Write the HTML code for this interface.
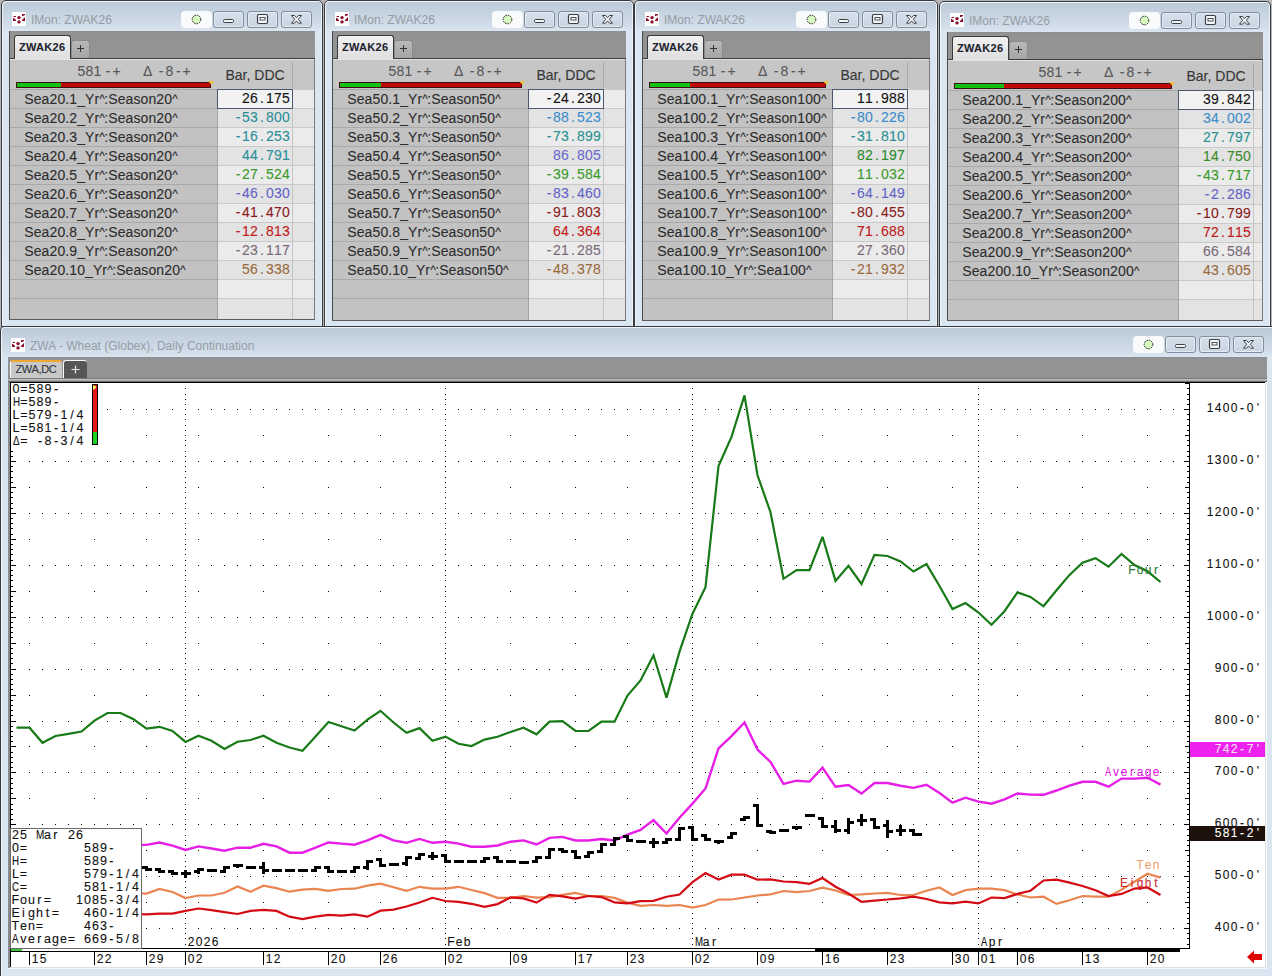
<!DOCTYPE html><html><head><meta charset="utf-8"><style>
html,body{margin:0;padding:0;width:1272px;height:976px;overflow:hidden;background:#b6b5b7;font-family:"Liberation Sans",sans-serif;}
.t{position:absolute;white-space:pre;-webkit-text-stroke:0.1px currentColor;}
.c{position:absolute;white-space:pre;-webkit-text-stroke:0.1px currentColor;}
.c b{display:inline-block;text-align:center;font-weight:inherit;}
.win{position:absolute;box-sizing:border-box;border:1px solid #383c42;border-radius:5px 5px 0 0;background:linear-gradient(to bottom,#e6edf4 0px,#e6edf4 1px,#bccad8 1px,#c6d3e0 12px,#d3dfeb 26px,#dbe6f1 30px,#d9e5f1 60px,#dae6f2 100%);box-shadow:inset 1px 1px 0 #f0f5fa,inset -1px 0 0 #eef3f8;}
.btn{position:absolute;box-sizing:border-box;width:31px;height:17px;border:1px solid #7f8d9c;border-radius:3px;background:linear-gradient(to bottom,#d6e0ea,#c9d5e2);box-shadow:inset 0 0 0 1px #e4ebf2;}
.sbtn{position:absolute;box-sizing:border-box;width:31px;height:17px;border-radius:4px;background:#f9fafb;}
</style></head><body>
<div class="win" style="left:1px;top:0px;width:322px;height:327px"></div>
<svg style="position:absolute;left:12px;top:12px" width="14" height="14" viewBox="0 0 14 14"><rect x="0" y="0" width="14" height="14" fill="#fff"/><g fill="#8c1030"><path d="M1 4 H4 V5 H2 Z"/><path d="M1 6 L2 6 L4 8 L4 9 L1 9 Z"/><circle cx="7" cy="5.6" r="1.7"/><circle cx="7" cy="9.9" r="1.7"/><path d="M10 2 H13 V3 L11 4 H10 Z"/><path d="M13 5 V9 H10 V8 Z"/></g></svg>
<div class="t" style="left:31.00px;top:13.84px;font-size:12px;line-height:12px;color:#949ca5;font-weight:400;letter-spacing:0px;-webkit-text-stroke:0;">IMon: ZWAK26</div>
<div class="sbtn" style="left:181px;top:11px"></div>
<svg style="position:absolute;left:191px;top:14px" width="11" height="11"><circle cx="5.5" cy="5.5" r="4.3" fill="#d8f8c0" stroke="#222" stroke-width="1" stroke-dasharray="1.6 0.9"/></svg>
<div class="btn" style="left:213px;top:11px"></div>
<svg style="position:absolute;left:213px;top:11px" width="31" height="17"><rect x="10.5" y="8.5" width="10" height="3" rx="1.2" fill="#f4f6f8" stroke="#384048" stroke-width="1"/></svg>
<div class="btn" style="left:247px;top:11px"></div>
<svg style="position:absolute;left:247px;top:11px" width="31" height="17"><rect x="10.5" y="3.5" width="10" height="9" rx="1.2" fill="#f4f6f8" stroke="#384048" stroke-width="1.2"/><rect x="13" y="6.5" width="5" height="2.5" fill="#fff" stroke="#384048" stroke-width="0.9"/></svg>
<div class="btn" style="left:281px;top:11px"></div>
<svg style="position:absolute;left:281px;top:11px" width="31" height="17"><path d="M10.5 4.5 L13.5 4.5 L15.5 6.8 L17.5 4.5 L20.5 4.5 L17.3 8.3 L20.5 12.2 L17.5 12.2 L15.5 9.9 L13.5 12.2 L10.5 12.2 L13.7 8.3 Z" fill="#f6f8fa" stroke="#384048" stroke-width="1" stroke-linejoin="round"/></svg>
<div style="position:absolute;left:9px;top:31px;width:306px;height:289px;background:#c2c2c2;"></div>
<div style="position:absolute;left:9px;top:31px;width:306px;height:27px;background:linear-gradient(to bottom,#8a8d90 0px,#939393 2px,#939393 100%);"></div>
<div style="position:absolute;left:9px;top:58px;width:306px;height:1px;background:#3c3c3c;"></div>
<div style="position:absolute;left:9px;top:59px;width:306px;height:1px;background:#e2e2e2;"></div>
<div style="position:absolute;left:14px;top:35px;width:57px;height:24px;box-sizing:border-box;border:1px solid #3a3a3a;border-bottom:none;border-radius:3px 3px 0 0;background:linear-gradient(to bottom,#f2f2f2,#dedede);"></div>
<div style="position:absolute;left:15px;top:58px;width:55px;height:1px;background:#e4e4e4;"></div>
<div class="t" style="left:19.00px;top:41.69px;font-size:11px;line-height:11px;color:#1e2530;font-weight:700;letter-spacing:0.3px;">ZWAK26</div>
<div style="position:absolute;left:71px;top:40px;width:19px;height:18px;box-sizing:border-box;border-radius:3px 3px 0 0;border:1px solid #8a8a8a;border-bottom:none;background:linear-gradient(to bottom,#b8b8b8,#a6a6a6);"></div>
<svg style="position:absolute;left:76px;top:44px" width="9" height="9"><path d="M4.5 1 V8 M1 4.5 H8" stroke="#333" stroke-width="1"/></svg>
<div style="position:absolute;left:9px;top:31px;width:1px;height:289px;background:#4a4a4a;"></div>
<div style="position:absolute;left:10px;top:60px;width:305px;height:29px;background:#c6c6c6;"></div>
<div style="position:absolute;left:292px;top:62px;width:1px;height:25px;background:#a9a9a9;"></div>
<div class="t" style="left:225.50px;top:67.75px;font-size:14px;line-height:14px;color:#363636;font-weight:400;letter-spacing:0px;">Bar, DDC</div>
<div style="position:absolute;left:16px;top:82px;width:195px;height:6px;box-sizing:border-box;border:1px solid #3a1010;background:linear-gradient(to right,#12c012 0,#12c012 44px,#c00808 44px,#c00808 100%);"></div>
<svg style="position:absolute;left:207px;top:81px" width="8" height="6"><path d="M1 0 L7 0 L4.5 4 Z" fill="#f0c040"/></svg>
<div class="t" style="left:61.50px;width:40px;text-align:center;top:63.95px;font-size:14px;line-height:14px;color:#585858">5</div>
<div class="t" style="left:69.50px;width:40px;text-align:center;top:63.95px;font-size:14px;line-height:14px;color:#585858">8</div>
<div class="t" style="left:77.50px;width:40px;text-align:center;top:63.95px;font-size:14px;line-height:14px;color:#585858">1</div>
<div class="t" style="left:88.00px;width:40px;text-align:center;top:63.95px;font-size:14px;line-height:14px;color:#585858">-</div>
<div class="t" style="left:96.50px;width:40px;text-align:center;top:63.95px;font-size:14px;line-height:14px;color:#585858">+</div>
<div class="t" style="left:127.70px;width:40px;text-align:center;top:63.95px;font-size:14px;line-height:14px;color:#585858">Δ</div>
<div class="t" style="left:141.00px;width:40px;text-align:center;top:63.95px;font-size:14px;line-height:14px;color:#585858">-</div>
<div class="t" style="left:149.40px;width:40px;text-align:center;top:63.95px;font-size:14px;line-height:14px;color:#585858">8</div>
<div class="t" style="left:158.40px;width:40px;text-align:center;top:63.95px;font-size:14px;line-height:14px;color:#585858">-</div>
<div class="t" style="left:166.50px;width:40px;text-align:center;top:63.95px;font-size:14px;line-height:14px;color:#585858">+</div>
<div style="position:absolute;left:10px;top:89px;width:207px;height:1px;background:#a9a9a9;"></div>
<div style="position:absolute;left:218px;top:90px;width:96px;height:18px;background:#ebebeb;"></div>
<div style="position:absolute;left:217px;top:89px;width:97px;height:1px;background:#c9c9c9;"></div>
<div class="t" style="left:24.30px;top:91.85px;font-size:14px;line-height:14px;color:#2c2c2c;font-weight:400;letter-spacing:0.1px;">Sea20.1_Yr<span style="font-size:12px;letter-spacing:-0.6px;vertical-align:1.2px">^</span>:Season20<span style="font-size:12px;letter-spacing:-0.6px;vertical-align:1.2px">^</span></div>
<div style="position:absolute;left:10px;top:108px;width:207px;height:1px;background:#a9a9a9;"></div>
<div style="position:absolute;left:218px;top:109px;width:96px;height:18px;background:#e3e3e3;"></div>
<div style="position:absolute;left:217px;top:108px;width:97px;height:1px;background:#c9c9c9;"></div>
<div class="t" style="left:24.30px;top:110.85px;font-size:14px;line-height:14px;color:#2c2c2c;font-weight:400;letter-spacing:0.1px;">Sea20.2_Yr<span style="font-size:12px;letter-spacing:-0.6px;vertical-align:1.2px">^</span>:Season20<span style="font-size:12px;letter-spacing:-0.6px;vertical-align:1.2px">^</span></div>
<div style="position:absolute;left:10px;top:127px;width:207px;height:1px;background:#a9a9a9;"></div>
<div style="position:absolute;left:218px;top:128px;width:96px;height:18px;background:#ebebeb;"></div>
<div style="position:absolute;left:217px;top:127px;width:97px;height:1px;background:#c9c9c9;"></div>
<div class="t" style="left:24.30px;top:129.85px;font-size:14px;line-height:14px;color:#2c2c2c;font-weight:400;letter-spacing:0.1px;">Sea20.3_Yr<span style="font-size:12px;letter-spacing:-0.6px;vertical-align:1.2px">^</span>:Season20<span style="font-size:12px;letter-spacing:-0.6px;vertical-align:1.2px">^</span></div>
<div style="position:absolute;left:10px;top:146px;width:207px;height:1px;background:#a9a9a9;"></div>
<div style="position:absolute;left:218px;top:147px;width:96px;height:18px;background:#e3e3e3;"></div>
<div style="position:absolute;left:217px;top:146px;width:97px;height:1px;background:#c9c9c9;"></div>
<div class="t" style="left:24.30px;top:148.85px;font-size:14px;line-height:14px;color:#2c2c2c;font-weight:400;letter-spacing:0.1px;">Sea20.4_Yr<span style="font-size:12px;letter-spacing:-0.6px;vertical-align:1.2px">^</span>:Season20<span style="font-size:12px;letter-spacing:-0.6px;vertical-align:1.2px">^</span></div>
<div style="position:absolute;left:10px;top:165px;width:207px;height:1px;background:#a9a9a9;"></div>
<div style="position:absolute;left:218px;top:166px;width:96px;height:18px;background:#ebebeb;"></div>
<div style="position:absolute;left:217px;top:165px;width:97px;height:1px;background:#c9c9c9;"></div>
<div class="t" style="left:24.30px;top:167.85px;font-size:14px;line-height:14px;color:#2c2c2c;font-weight:400;letter-spacing:0.1px;">Sea20.5_Yr<span style="font-size:12px;letter-spacing:-0.6px;vertical-align:1.2px">^</span>:Season20<span style="font-size:12px;letter-spacing:-0.6px;vertical-align:1.2px">^</span></div>
<div style="position:absolute;left:10px;top:184px;width:207px;height:1px;background:#a9a9a9;"></div>
<div style="position:absolute;left:218px;top:185px;width:96px;height:18px;background:#e3e3e3;"></div>
<div style="position:absolute;left:217px;top:184px;width:97px;height:1px;background:#c9c9c9;"></div>
<div class="t" style="left:24.30px;top:186.85px;font-size:14px;line-height:14px;color:#2c2c2c;font-weight:400;letter-spacing:0.1px;">Sea20.6_Yr<span style="font-size:12px;letter-spacing:-0.6px;vertical-align:1.2px">^</span>:Season20<span style="font-size:12px;letter-spacing:-0.6px;vertical-align:1.2px">^</span></div>
<div style="position:absolute;left:10px;top:203px;width:207px;height:1px;background:#a9a9a9;"></div>
<div style="position:absolute;left:218px;top:204px;width:96px;height:18px;background:#ebebeb;"></div>
<div style="position:absolute;left:217px;top:203px;width:97px;height:1px;background:#c9c9c9;"></div>
<div class="t" style="left:24.30px;top:205.85px;font-size:14px;line-height:14px;color:#2c2c2c;font-weight:400;letter-spacing:0.1px;">Sea20.7_Yr<span style="font-size:12px;letter-spacing:-0.6px;vertical-align:1.2px">^</span>:Season20<span style="font-size:12px;letter-spacing:-0.6px;vertical-align:1.2px">^</span></div>
<div style="position:absolute;left:10px;top:222px;width:207px;height:1px;background:#a9a9a9;"></div>
<div style="position:absolute;left:218px;top:223px;width:96px;height:18px;background:#e3e3e3;"></div>
<div style="position:absolute;left:217px;top:222px;width:97px;height:1px;background:#c9c9c9;"></div>
<div class="t" style="left:24.30px;top:224.85px;font-size:14px;line-height:14px;color:#2c2c2c;font-weight:400;letter-spacing:0.1px;">Sea20.8_Yr<span style="font-size:12px;letter-spacing:-0.6px;vertical-align:1.2px">^</span>:Season20<span style="font-size:12px;letter-spacing:-0.6px;vertical-align:1.2px">^</span></div>
<div style="position:absolute;left:10px;top:241px;width:207px;height:1px;background:#a9a9a9;"></div>
<div style="position:absolute;left:218px;top:242px;width:96px;height:18px;background:#ebebeb;"></div>
<div style="position:absolute;left:217px;top:241px;width:97px;height:1px;background:#c9c9c9;"></div>
<div class="t" style="left:24.30px;top:243.85px;font-size:14px;line-height:14px;color:#2c2c2c;font-weight:400;letter-spacing:0.1px;">Sea20.9_Yr<span style="font-size:12px;letter-spacing:-0.6px;vertical-align:1.2px">^</span>:Season20<span style="font-size:12px;letter-spacing:-0.6px;vertical-align:1.2px">^</span></div>
<div style="position:absolute;left:10px;top:260px;width:207px;height:1px;background:#a9a9a9;"></div>
<div style="position:absolute;left:218px;top:261px;width:96px;height:18px;background:#e3e3e3;"></div>
<div style="position:absolute;left:217px;top:260px;width:97px;height:1px;background:#c9c9c9;"></div>
<div class="t" style="left:24.30px;top:262.85px;font-size:14px;line-height:14px;color:#2c2c2c;font-weight:400;letter-spacing:0.1px;">Sea20.10_Yr<span style="font-size:12px;letter-spacing:-0.6px;vertical-align:1.2px">^</span>:Season20<span style="font-size:12px;letter-spacing:-0.6px;vertical-align:1.2px">^</span></div>
<div style="position:absolute;left:10px;top:279px;width:207px;height:1px;background:#a9a9a9;"></div>
<div style="position:absolute;left:218px;top:280px;width:96px;height:18px;background:#ebebeb;"></div>
<div style="position:absolute;left:217px;top:279px;width:97px;height:1px;background:#c9c9c9;"></div>
<div style="position:absolute;left:10px;top:298px;width:207px;height:1px;background:#a9a9a9;"></div>
<div style="position:absolute;left:218px;top:299px;width:96px;height:21px;background:#e3e3e3;"></div>
<div style="position:absolute;left:217px;top:298px;width:97px;height:1px;background:#c9c9c9;"></div>
<div style="position:absolute;left:217px;top:89px;width:1px;height:231px;background:#a4a4a4;"></div>
<div style="position:absolute;left:292px;top:89px;width:1px;height:231px;background:#c4c4c4;"></div>
<div style="position:absolute;left:314px;top:59px;width:1px;height:261px;background:#7c7c7c;"></div>
<div style="position:absolute;left:9px;top:319px;width:306px;height:1px;background:#5c5c5c;"></div>
<div style="position:absolute;left:217px;top:89px;width:76px;height:20px;box-sizing:border-box;border:1px solid #4c5870;background:#f2f2f2;"></div>
<div class="c" style="left:242.00px;top:91.35px;font-size:14px;line-height:14px;color:#111;font-weight:400;"><b style="width:8px">2</b><b style="width:8px">6</b><b style="width:8px">.</b><b style="width:8px">1</b><b style="width:8px">7</b><b style="width:8px">5</b></div>
<div class="c" style="left:234.00px;top:110.35px;font-size:14px;line-height:14px;color:#2b8f9a;font-weight:400;"><b style="width:8px">-</b><b style="width:8px">5</b><b style="width:8px">3</b><b style="width:8px">.</b><b style="width:8px">8</b><b style="width:8px">0</b><b style="width:8px">0</b></div>
<div class="c" style="left:234.00px;top:129.35px;font-size:14px;line-height:14px;color:#2b8f9a;font-weight:400;"><b style="width:8px">-</b><b style="width:8px">1</b><b style="width:8px">6</b><b style="width:8px">.</b><b style="width:8px">2</b><b style="width:8px">5</b><b style="width:8px">3</b></div>
<div class="c" style="left:242.00px;top:148.35px;font-size:14px;line-height:14px;color:#2b8f9a;font-weight:400;"><b style="width:8px">4</b><b style="width:8px">4</b><b style="width:8px">.</b><b style="width:8px">7</b><b style="width:8px">9</b><b style="width:8px">1</b></div>
<div class="c" style="left:234.00px;top:167.35px;font-size:14px;line-height:14px;color:#3a9a2a;font-weight:400;"><b style="width:8px">-</b><b style="width:8px">2</b><b style="width:8px">7</b><b style="width:8px">.</b><b style="width:8px">5</b><b style="width:8px">2</b><b style="width:8px">4</b></div>
<div class="c" style="left:234.00px;top:186.35px;font-size:14px;line-height:14px;color:#6464c8;font-weight:400;"><b style="width:8px">-</b><b style="width:8px">4</b><b style="width:8px">6</b><b style="width:8px">.</b><b style="width:8px">0</b><b style="width:8px">3</b><b style="width:8px">0</b></div>
<div class="c" style="left:234.00px;top:205.35px;font-size:14px;line-height:14px;color:#8a1a1a;font-weight:400;"><b style="width:8px">-</b><b style="width:8px">4</b><b style="width:8px">1</b><b style="width:8px">.</b><b style="width:8px">4</b><b style="width:8px">7</b><b style="width:8px">0</b></div>
<div class="c" style="left:234.00px;top:224.35px;font-size:14px;line-height:14px;color:#c01a1a;font-weight:400;"><b style="width:8px">-</b><b style="width:8px">1</b><b style="width:8px">2</b><b style="width:8px">.</b><b style="width:8px">8</b><b style="width:8px">1</b><b style="width:8px">3</b></div>
<div class="c" style="left:234.00px;top:243.35px;font-size:14px;line-height:14px;color:#7a6a78;font-weight:400;"><b style="width:8px">-</b><b style="width:8px">2</b><b style="width:8px">3</b><b style="width:8px">.</b><b style="width:8px">1</b><b style="width:8px">1</b><b style="width:8px">7</b></div>
<div class="c" style="left:242.00px;top:262.35px;font-size:14px;line-height:14px;color:#9a6a3a;font-weight:400;"><b style="width:8px">5</b><b style="width:8px">6</b><b style="width:8px">.</b><b style="width:8px">3</b><b style="width:8px">3</b><b style="width:8px">8</b></div>
<div class="win" style="left:324px;top:0px;width:310px;height:327px"></div>
<svg style="position:absolute;left:335px;top:12px" width="14" height="14" viewBox="0 0 14 14"><rect x="0" y="0" width="14" height="14" fill="#fff"/><g fill="#8c1030"><path d="M1 4 H4 V5 H2 Z"/><path d="M1 6 L2 6 L4 8 L4 9 L1 9 Z"/><circle cx="7" cy="5.6" r="1.7"/><circle cx="7" cy="9.9" r="1.7"/><path d="M10 2 H13 V3 L11 4 H10 Z"/><path d="M13 5 V9 H10 V8 Z"/></g></svg>
<div class="t" style="left:354.00px;top:13.84px;font-size:12px;line-height:12px;color:#949ca5;font-weight:400;letter-spacing:0px;-webkit-text-stroke:0;">IMon: ZWAK26</div>
<div class="sbtn" style="left:492px;top:11px"></div>
<svg style="position:absolute;left:502px;top:14px" width="11" height="11"><circle cx="5.5" cy="5.5" r="4.3" fill="#d8f8c0" stroke="#222" stroke-width="1" stroke-dasharray="1.6 0.9"/></svg>
<div class="btn" style="left:524px;top:11px"></div>
<svg style="position:absolute;left:524px;top:11px" width="31" height="17"><rect x="10.5" y="8.5" width="10" height="3" rx="1.2" fill="#f4f6f8" stroke="#384048" stroke-width="1"/></svg>
<div class="btn" style="left:558px;top:11px"></div>
<svg style="position:absolute;left:558px;top:11px" width="31" height="17"><rect x="10.5" y="3.5" width="10" height="9" rx="1.2" fill="#f4f6f8" stroke="#384048" stroke-width="1.2"/><rect x="13" y="6.5" width="5" height="2.5" fill="#fff" stroke="#384048" stroke-width="0.9"/></svg>
<div class="btn" style="left:592px;top:11px"></div>
<svg style="position:absolute;left:592px;top:11px" width="31" height="17"><path d="M10.5 4.5 L13.5 4.5 L15.5 6.8 L17.5 4.5 L20.5 4.5 L17.3 8.3 L20.5 12.2 L17.5 12.2 L15.5 9.9 L13.5 12.2 L10.5 12.2 L13.7 8.3 Z" fill="#f6f8fa" stroke="#384048" stroke-width="1" stroke-linejoin="round"/></svg>
<div style="position:absolute;left:332px;top:31px;width:294px;height:290px;background:#c2c2c2;"></div>
<div style="position:absolute;left:332px;top:31px;width:294px;height:27px;background:linear-gradient(to bottom,#8a8d90 0px,#939393 2px,#939393 100%);"></div>
<div style="position:absolute;left:332px;top:58px;width:294px;height:1px;background:#3c3c3c;"></div>
<div style="position:absolute;left:332px;top:59px;width:294px;height:1px;background:#e2e2e2;"></div>
<div style="position:absolute;left:337px;top:35px;width:57px;height:24px;box-sizing:border-box;border:1px solid #3a3a3a;border-bottom:none;border-radius:3px 3px 0 0;background:linear-gradient(to bottom,#f2f2f2,#dedede);"></div>
<div style="position:absolute;left:338px;top:58px;width:55px;height:1px;background:#e4e4e4;"></div>
<div class="t" style="left:342.00px;top:41.69px;font-size:11px;line-height:11px;color:#1e2530;font-weight:700;letter-spacing:0.3px;">ZWAK26</div>
<div style="position:absolute;left:394px;top:40px;width:19px;height:18px;box-sizing:border-box;border-radius:3px 3px 0 0;border:1px solid #8a8a8a;border-bottom:none;background:linear-gradient(to bottom,#b8b8b8,#a6a6a6);"></div>
<svg style="position:absolute;left:399px;top:44px" width="9" height="9"><path d="M4.5 1 V8 M1 4.5 H8" stroke="#333" stroke-width="1"/></svg>
<div style="position:absolute;left:332px;top:31px;width:1px;height:290px;background:#4a4a4a;"></div>
<div style="position:absolute;left:333px;top:60px;width:293px;height:29px;background:#c6c6c6;"></div>
<div style="position:absolute;left:603px;top:62px;width:1px;height:25px;background:#a9a9a9;"></div>
<div class="t" style="left:536.50px;top:67.75px;font-size:14px;line-height:14px;color:#363636;font-weight:400;letter-spacing:0px;">Bar, DDC</div>
<div style="position:absolute;left:339px;top:82px;width:183px;height:6px;box-sizing:border-box;border:1px solid #3a1010;background:linear-gradient(to right,#12c012 0,#12c012 41px,#c00808 41px,#c00808 100%);"></div>
<svg style="position:absolute;left:518px;top:81px" width="8" height="6"><path d="M1 0 L7 0 L4.5 4 Z" fill="#f0c040"/></svg>
<div class="t" style="left:372.50px;width:40px;text-align:center;top:63.95px;font-size:14px;line-height:14px;color:#585858">5</div>
<div class="t" style="left:380.50px;width:40px;text-align:center;top:63.95px;font-size:14px;line-height:14px;color:#585858">8</div>
<div class="t" style="left:388.50px;width:40px;text-align:center;top:63.95px;font-size:14px;line-height:14px;color:#585858">1</div>
<div class="t" style="left:399.00px;width:40px;text-align:center;top:63.95px;font-size:14px;line-height:14px;color:#585858">-</div>
<div class="t" style="left:407.50px;width:40px;text-align:center;top:63.95px;font-size:14px;line-height:14px;color:#585858">+</div>
<div class="t" style="left:438.70px;width:40px;text-align:center;top:63.95px;font-size:14px;line-height:14px;color:#585858">Δ</div>
<div class="t" style="left:452.00px;width:40px;text-align:center;top:63.95px;font-size:14px;line-height:14px;color:#585858">-</div>
<div class="t" style="left:460.40px;width:40px;text-align:center;top:63.95px;font-size:14px;line-height:14px;color:#585858">8</div>
<div class="t" style="left:469.40px;width:40px;text-align:center;top:63.95px;font-size:14px;line-height:14px;color:#585858">-</div>
<div class="t" style="left:477.50px;width:40px;text-align:center;top:63.95px;font-size:14px;line-height:14px;color:#585858">+</div>
<div style="position:absolute;left:333px;top:89px;width:195px;height:1px;background:#a9a9a9;"></div>
<div style="position:absolute;left:529px;top:90px;width:96px;height:18px;background:#ebebeb;"></div>
<div style="position:absolute;left:528px;top:89px;width:97px;height:1px;background:#c9c9c9;"></div>
<div class="t" style="left:347.30px;top:91.85px;font-size:14px;line-height:14px;color:#2c2c2c;font-weight:400;letter-spacing:0.1px;">Sea50.1_Yr<span style="font-size:12px;letter-spacing:-0.6px;vertical-align:1.2px">^</span>:Season50<span style="font-size:12px;letter-spacing:-0.6px;vertical-align:1.2px">^</span></div>
<div style="position:absolute;left:333px;top:108px;width:195px;height:1px;background:#a9a9a9;"></div>
<div style="position:absolute;left:529px;top:109px;width:96px;height:18px;background:#e3e3e3;"></div>
<div style="position:absolute;left:528px;top:108px;width:97px;height:1px;background:#c9c9c9;"></div>
<div class="t" style="left:347.30px;top:110.85px;font-size:14px;line-height:14px;color:#2c2c2c;font-weight:400;letter-spacing:0.1px;">Sea50.2_Yr<span style="font-size:12px;letter-spacing:-0.6px;vertical-align:1.2px">^</span>:Season50<span style="font-size:12px;letter-spacing:-0.6px;vertical-align:1.2px">^</span></div>
<div style="position:absolute;left:333px;top:127px;width:195px;height:1px;background:#a9a9a9;"></div>
<div style="position:absolute;left:529px;top:128px;width:96px;height:18px;background:#ebebeb;"></div>
<div style="position:absolute;left:528px;top:127px;width:97px;height:1px;background:#c9c9c9;"></div>
<div class="t" style="left:347.30px;top:129.85px;font-size:14px;line-height:14px;color:#2c2c2c;font-weight:400;letter-spacing:0.1px;">Sea50.3_Yr<span style="font-size:12px;letter-spacing:-0.6px;vertical-align:1.2px">^</span>:Season50<span style="font-size:12px;letter-spacing:-0.6px;vertical-align:1.2px">^</span></div>
<div style="position:absolute;left:333px;top:146px;width:195px;height:1px;background:#a9a9a9;"></div>
<div style="position:absolute;left:529px;top:147px;width:96px;height:18px;background:#e3e3e3;"></div>
<div style="position:absolute;left:528px;top:146px;width:97px;height:1px;background:#c9c9c9;"></div>
<div class="t" style="left:347.30px;top:148.85px;font-size:14px;line-height:14px;color:#2c2c2c;font-weight:400;letter-spacing:0.1px;">Sea50.4_Yr<span style="font-size:12px;letter-spacing:-0.6px;vertical-align:1.2px">^</span>:Season50<span style="font-size:12px;letter-spacing:-0.6px;vertical-align:1.2px">^</span></div>
<div style="position:absolute;left:333px;top:165px;width:195px;height:1px;background:#a9a9a9;"></div>
<div style="position:absolute;left:529px;top:166px;width:96px;height:18px;background:#ebebeb;"></div>
<div style="position:absolute;left:528px;top:165px;width:97px;height:1px;background:#c9c9c9;"></div>
<div class="t" style="left:347.30px;top:167.85px;font-size:14px;line-height:14px;color:#2c2c2c;font-weight:400;letter-spacing:0.1px;">Sea50.5_Yr<span style="font-size:12px;letter-spacing:-0.6px;vertical-align:1.2px">^</span>:Season50<span style="font-size:12px;letter-spacing:-0.6px;vertical-align:1.2px">^</span></div>
<div style="position:absolute;left:333px;top:184px;width:195px;height:1px;background:#a9a9a9;"></div>
<div style="position:absolute;left:529px;top:185px;width:96px;height:18px;background:#e3e3e3;"></div>
<div style="position:absolute;left:528px;top:184px;width:97px;height:1px;background:#c9c9c9;"></div>
<div class="t" style="left:347.30px;top:186.85px;font-size:14px;line-height:14px;color:#2c2c2c;font-weight:400;letter-spacing:0.1px;">Sea50.6_Yr<span style="font-size:12px;letter-spacing:-0.6px;vertical-align:1.2px">^</span>:Season50<span style="font-size:12px;letter-spacing:-0.6px;vertical-align:1.2px">^</span></div>
<div style="position:absolute;left:333px;top:203px;width:195px;height:1px;background:#a9a9a9;"></div>
<div style="position:absolute;left:529px;top:204px;width:96px;height:18px;background:#ebebeb;"></div>
<div style="position:absolute;left:528px;top:203px;width:97px;height:1px;background:#c9c9c9;"></div>
<div class="t" style="left:347.30px;top:205.85px;font-size:14px;line-height:14px;color:#2c2c2c;font-weight:400;letter-spacing:0.1px;">Sea50.7_Yr<span style="font-size:12px;letter-spacing:-0.6px;vertical-align:1.2px">^</span>:Season50<span style="font-size:12px;letter-spacing:-0.6px;vertical-align:1.2px">^</span></div>
<div style="position:absolute;left:333px;top:222px;width:195px;height:1px;background:#a9a9a9;"></div>
<div style="position:absolute;left:529px;top:223px;width:96px;height:18px;background:#e3e3e3;"></div>
<div style="position:absolute;left:528px;top:222px;width:97px;height:1px;background:#c9c9c9;"></div>
<div class="t" style="left:347.30px;top:224.85px;font-size:14px;line-height:14px;color:#2c2c2c;font-weight:400;letter-spacing:0.1px;">Sea50.8_Yr<span style="font-size:12px;letter-spacing:-0.6px;vertical-align:1.2px">^</span>:Season50<span style="font-size:12px;letter-spacing:-0.6px;vertical-align:1.2px">^</span></div>
<div style="position:absolute;left:333px;top:241px;width:195px;height:1px;background:#a9a9a9;"></div>
<div style="position:absolute;left:529px;top:242px;width:96px;height:18px;background:#ebebeb;"></div>
<div style="position:absolute;left:528px;top:241px;width:97px;height:1px;background:#c9c9c9;"></div>
<div class="t" style="left:347.30px;top:243.85px;font-size:14px;line-height:14px;color:#2c2c2c;font-weight:400;letter-spacing:0.1px;">Sea50.9_Yr<span style="font-size:12px;letter-spacing:-0.6px;vertical-align:1.2px">^</span>:Season50<span style="font-size:12px;letter-spacing:-0.6px;vertical-align:1.2px">^</span></div>
<div style="position:absolute;left:333px;top:260px;width:195px;height:1px;background:#a9a9a9;"></div>
<div style="position:absolute;left:529px;top:261px;width:96px;height:18px;background:#e3e3e3;"></div>
<div style="position:absolute;left:528px;top:260px;width:97px;height:1px;background:#c9c9c9;"></div>
<div class="t" style="left:347.30px;top:262.85px;font-size:14px;line-height:14px;color:#2c2c2c;font-weight:400;letter-spacing:0.1px;">Sea50.10_Yr<span style="font-size:12px;letter-spacing:-0.6px;vertical-align:1.2px">^</span>:Season50<span style="font-size:12px;letter-spacing:-0.6px;vertical-align:1.2px">^</span></div>
<div style="position:absolute;left:333px;top:279px;width:195px;height:1px;background:#a9a9a9;"></div>
<div style="position:absolute;left:529px;top:280px;width:96px;height:18px;background:#ebebeb;"></div>
<div style="position:absolute;left:528px;top:279px;width:97px;height:1px;background:#c9c9c9;"></div>
<div style="position:absolute;left:333px;top:298px;width:195px;height:1px;background:#a9a9a9;"></div>
<div style="position:absolute;left:529px;top:299px;width:96px;height:22px;background:#e3e3e3;"></div>
<div style="position:absolute;left:528px;top:298px;width:97px;height:1px;background:#c9c9c9;"></div>
<div style="position:absolute;left:528px;top:89px;width:1px;height:232px;background:#a4a4a4;"></div>
<div style="position:absolute;left:603px;top:89px;width:1px;height:232px;background:#c4c4c4;"></div>
<div style="position:absolute;left:625px;top:59px;width:1px;height:262px;background:#7c7c7c;"></div>
<div style="position:absolute;left:332px;top:320px;width:294px;height:1px;background:#5c5c5c;"></div>
<div style="position:absolute;left:528px;top:89px;width:76px;height:20px;box-sizing:border-box;border:1px solid #4c5870;background:#f2f2f2;"></div>
<div class="c" style="left:545.00px;top:91.35px;font-size:14px;line-height:14px;color:#111;font-weight:400;"><b style="width:8px">-</b><b style="width:8px">2</b><b style="width:8px">4</b><b style="width:8px">.</b><b style="width:8px">2</b><b style="width:8px">3</b><b style="width:8px">0</b></div>
<div class="c" style="left:545.00px;top:110.35px;font-size:14px;line-height:14px;color:#3a8ccc;font-weight:400;"><b style="width:8px">-</b><b style="width:8px">8</b><b style="width:8px">8</b><b style="width:8px">.</b><b style="width:8px">5</b><b style="width:8px">2</b><b style="width:8px">3</b></div>
<div class="c" style="left:545.00px;top:129.35px;font-size:14px;line-height:14px;color:#2a9090;font-weight:400;"><b style="width:8px">-</b><b style="width:8px">7</b><b style="width:8px">3</b><b style="width:8px">.</b><b style="width:8px">8</b><b style="width:8px">9</b><b style="width:8px">9</b></div>
<div class="c" style="left:553.00px;top:148.35px;font-size:14px;line-height:14px;color:#6a6acc;font-weight:400;"><b style="width:8px">8</b><b style="width:8px">6</b><b style="width:8px">.</b><b style="width:8px">8</b><b style="width:8px">0</b><b style="width:8px">5</b></div>
<div class="c" style="left:545.00px;top:167.35px;font-size:14px;line-height:14px;color:#3a9a2a;font-weight:400;"><b style="width:8px">-</b><b style="width:8px">3</b><b style="width:8px">9</b><b style="width:8px">.</b><b style="width:8px">5</b><b style="width:8px">8</b><b style="width:8px">4</b></div>
<div class="c" style="left:545.00px;top:186.35px;font-size:14px;line-height:14px;color:#6464c8;font-weight:400;"><b style="width:8px">-</b><b style="width:8px">8</b><b style="width:8px">3</b><b style="width:8px">.</b><b style="width:8px">4</b><b style="width:8px">6</b><b style="width:8px">0</b></div>
<div class="c" style="left:545.00px;top:205.35px;font-size:14px;line-height:14px;color:#8a1a1a;font-weight:400;"><b style="width:8px">-</b><b style="width:8px">9</b><b style="width:8px">1</b><b style="width:8px">.</b><b style="width:8px">8</b><b style="width:8px">0</b><b style="width:8px">3</b></div>
<div class="c" style="left:553.00px;top:224.35px;font-size:14px;line-height:14px;color:#c01a1a;font-weight:400;"><b style="width:8px">6</b><b style="width:8px">4</b><b style="width:8px">.</b><b style="width:8px">3</b><b style="width:8px">6</b><b style="width:8px">4</b></div>
<div class="c" style="left:545.00px;top:243.35px;font-size:14px;line-height:14px;color:#7a6a78;font-weight:400;"><b style="width:8px">-</b><b style="width:8px">2</b><b style="width:8px">1</b><b style="width:8px">.</b><b style="width:8px">2</b><b style="width:8px">8</b><b style="width:8px">5</b></div>
<div class="c" style="left:545.00px;top:262.35px;font-size:14px;line-height:14px;color:#9a6a3a;font-weight:400;"><b style="width:8px">-</b><b style="width:8px">4</b><b style="width:8px">8</b><b style="width:8px">.</b><b style="width:8px">3</b><b style="width:8px">7</b><b style="width:8px">8</b></div>
<div class="win" style="left:634px;top:0px;width:304px;height:327px"></div>
<svg style="position:absolute;left:645px;top:12px" width="14" height="14" viewBox="0 0 14 14"><rect x="0" y="0" width="14" height="14" fill="#fff"/><g fill="#8c1030"><path d="M1 4 H4 V5 H2 Z"/><path d="M1 6 L2 6 L4 8 L4 9 L1 9 Z"/><circle cx="7" cy="5.6" r="1.7"/><circle cx="7" cy="9.9" r="1.7"/><path d="M10 2 H13 V3 L11 4 H10 Z"/><path d="M13 5 V9 H10 V8 Z"/></g></svg>
<div class="t" style="left:664.00px;top:13.84px;font-size:12px;line-height:12px;color:#949ca5;font-weight:400;letter-spacing:0px;-webkit-text-stroke:0;">IMon: ZWAK26</div>
<div class="sbtn" style="left:796px;top:11px"></div>
<svg style="position:absolute;left:806px;top:14px" width="11" height="11"><circle cx="5.5" cy="5.5" r="4.3" fill="#d8f8c0" stroke="#222" stroke-width="1" stroke-dasharray="1.6 0.9"/></svg>
<div class="btn" style="left:828px;top:11px"></div>
<svg style="position:absolute;left:828px;top:11px" width="31" height="17"><rect x="10.5" y="8.5" width="10" height="3" rx="1.2" fill="#f4f6f8" stroke="#384048" stroke-width="1"/></svg>
<div class="btn" style="left:862px;top:11px"></div>
<svg style="position:absolute;left:862px;top:11px" width="31" height="17"><rect x="10.5" y="3.5" width="10" height="9" rx="1.2" fill="#f4f6f8" stroke="#384048" stroke-width="1.2"/><rect x="13" y="6.5" width="5" height="2.5" fill="#fff" stroke="#384048" stroke-width="0.9"/></svg>
<div class="btn" style="left:896px;top:11px"></div>
<svg style="position:absolute;left:896px;top:11px" width="31" height="17"><path d="M10.5 4.5 L13.5 4.5 L15.5 6.8 L17.5 4.5 L20.5 4.5 L17.3 8.3 L20.5 12.2 L17.5 12.2 L15.5 9.9 L13.5 12.2 L10.5 12.2 L13.7 8.3 Z" fill="#f6f8fa" stroke="#384048" stroke-width="1" stroke-linejoin="round"/></svg>
<div style="position:absolute;left:642px;top:31px;width:288px;height:290px;background:#c2c2c2;"></div>
<div style="position:absolute;left:642px;top:31px;width:288px;height:27px;background:linear-gradient(to bottom,#8a8d90 0px,#939393 2px,#939393 100%);"></div>
<div style="position:absolute;left:642px;top:58px;width:288px;height:1px;background:#3c3c3c;"></div>
<div style="position:absolute;left:642px;top:59px;width:288px;height:1px;background:#e2e2e2;"></div>
<div style="position:absolute;left:647px;top:35px;width:57px;height:24px;box-sizing:border-box;border:1px solid #3a3a3a;border-bottom:none;border-radius:3px 3px 0 0;background:linear-gradient(to bottom,#f2f2f2,#dedede);"></div>
<div style="position:absolute;left:648px;top:58px;width:55px;height:1px;background:#e4e4e4;"></div>
<div class="t" style="left:652.00px;top:41.69px;font-size:11px;line-height:11px;color:#1e2530;font-weight:700;letter-spacing:0.3px;">ZWAK26</div>
<div style="position:absolute;left:704px;top:40px;width:19px;height:18px;box-sizing:border-box;border-radius:3px 3px 0 0;border:1px solid #8a8a8a;border-bottom:none;background:linear-gradient(to bottom,#b8b8b8,#a6a6a6);"></div>
<svg style="position:absolute;left:709px;top:44px" width="9" height="9"><path d="M4.5 1 V8 M1 4.5 H8" stroke="#333" stroke-width="1"/></svg>
<div style="position:absolute;left:642px;top:31px;width:1px;height:290px;background:#4a4a4a;"></div>
<div style="position:absolute;left:643px;top:60px;width:287px;height:29px;background:#c6c6c6;"></div>
<div style="position:absolute;left:907px;top:62px;width:1px;height:25px;background:#a9a9a9;"></div>
<div class="t" style="left:840.50px;top:67.75px;font-size:14px;line-height:14px;color:#363636;font-weight:400;letter-spacing:0px;">Bar, DDC</div>
<div style="position:absolute;left:649px;top:82px;width:177px;height:6px;box-sizing:border-box;border:1px solid #3a1010;background:linear-gradient(to right,#12c012 0,#12c012 40px,#c00808 40px,#c00808 100%);"></div>
<svg style="position:absolute;left:822px;top:81px" width="8" height="6"><path d="M1 0 L7 0 L4.5 4 Z" fill="#f0c040"/></svg>
<div class="t" style="left:676.50px;width:40px;text-align:center;top:63.95px;font-size:14px;line-height:14px;color:#585858">5</div>
<div class="t" style="left:684.50px;width:40px;text-align:center;top:63.95px;font-size:14px;line-height:14px;color:#585858">8</div>
<div class="t" style="left:692.50px;width:40px;text-align:center;top:63.95px;font-size:14px;line-height:14px;color:#585858">1</div>
<div class="t" style="left:703.00px;width:40px;text-align:center;top:63.95px;font-size:14px;line-height:14px;color:#585858">-</div>
<div class="t" style="left:711.50px;width:40px;text-align:center;top:63.95px;font-size:14px;line-height:14px;color:#585858">+</div>
<div class="t" style="left:742.70px;width:40px;text-align:center;top:63.95px;font-size:14px;line-height:14px;color:#585858">Δ</div>
<div class="t" style="left:756.00px;width:40px;text-align:center;top:63.95px;font-size:14px;line-height:14px;color:#585858">-</div>
<div class="t" style="left:764.40px;width:40px;text-align:center;top:63.95px;font-size:14px;line-height:14px;color:#585858">8</div>
<div class="t" style="left:773.40px;width:40px;text-align:center;top:63.95px;font-size:14px;line-height:14px;color:#585858">-</div>
<div class="t" style="left:781.50px;width:40px;text-align:center;top:63.95px;font-size:14px;line-height:14px;color:#585858">+</div>
<div style="position:absolute;left:643px;top:89px;width:189px;height:1px;background:#a9a9a9;"></div>
<div style="position:absolute;left:833px;top:90px;width:96px;height:18px;background:#ebebeb;"></div>
<div style="position:absolute;left:832px;top:89px;width:97px;height:1px;background:#c9c9c9;"></div>
<div class="t" style="left:657.30px;top:91.85px;font-size:14px;line-height:14px;color:#2c2c2c;font-weight:400;letter-spacing:0.1px;">Sea100.1_Yr<span style="font-size:12px;letter-spacing:-0.6px;vertical-align:1.2px">^</span>:Season100<span style="font-size:12px;letter-spacing:-0.6px;vertical-align:1.2px">^</span></div>
<div style="position:absolute;left:643px;top:108px;width:189px;height:1px;background:#a9a9a9;"></div>
<div style="position:absolute;left:833px;top:109px;width:96px;height:18px;background:#e3e3e3;"></div>
<div style="position:absolute;left:832px;top:108px;width:97px;height:1px;background:#c9c9c9;"></div>
<div class="t" style="left:657.30px;top:110.85px;font-size:14px;line-height:14px;color:#2c2c2c;font-weight:400;letter-spacing:0.1px;">Sea100.2_Yr<span style="font-size:12px;letter-spacing:-0.6px;vertical-align:1.2px">^</span>:Season100<span style="font-size:12px;letter-spacing:-0.6px;vertical-align:1.2px">^</span></div>
<div style="position:absolute;left:643px;top:127px;width:189px;height:1px;background:#a9a9a9;"></div>
<div style="position:absolute;left:833px;top:128px;width:96px;height:18px;background:#ebebeb;"></div>
<div style="position:absolute;left:832px;top:127px;width:97px;height:1px;background:#c9c9c9;"></div>
<div class="t" style="left:657.30px;top:129.85px;font-size:14px;line-height:14px;color:#2c2c2c;font-weight:400;letter-spacing:0.1px;">Sea100.3_Yr<span style="font-size:12px;letter-spacing:-0.6px;vertical-align:1.2px">^</span>:Season100<span style="font-size:12px;letter-spacing:-0.6px;vertical-align:1.2px">^</span></div>
<div style="position:absolute;left:643px;top:146px;width:189px;height:1px;background:#a9a9a9;"></div>
<div style="position:absolute;left:833px;top:147px;width:96px;height:18px;background:#e3e3e3;"></div>
<div style="position:absolute;left:832px;top:146px;width:97px;height:1px;background:#c9c9c9;"></div>
<div class="t" style="left:657.30px;top:148.85px;font-size:14px;line-height:14px;color:#2c2c2c;font-weight:400;letter-spacing:0.1px;">Sea100.4_Yr<span style="font-size:12px;letter-spacing:-0.6px;vertical-align:1.2px">^</span>:Season100<span style="font-size:12px;letter-spacing:-0.6px;vertical-align:1.2px">^</span></div>
<div style="position:absolute;left:643px;top:165px;width:189px;height:1px;background:#a9a9a9;"></div>
<div style="position:absolute;left:833px;top:166px;width:96px;height:18px;background:#ebebeb;"></div>
<div style="position:absolute;left:832px;top:165px;width:97px;height:1px;background:#c9c9c9;"></div>
<div class="t" style="left:657.30px;top:167.85px;font-size:14px;line-height:14px;color:#2c2c2c;font-weight:400;letter-spacing:0.1px;">Sea100.5_Yr<span style="font-size:12px;letter-spacing:-0.6px;vertical-align:1.2px">^</span>:Season100<span style="font-size:12px;letter-spacing:-0.6px;vertical-align:1.2px">^</span></div>
<div style="position:absolute;left:643px;top:184px;width:189px;height:1px;background:#a9a9a9;"></div>
<div style="position:absolute;left:833px;top:185px;width:96px;height:18px;background:#e3e3e3;"></div>
<div style="position:absolute;left:832px;top:184px;width:97px;height:1px;background:#c9c9c9;"></div>
<div class="t" style="left:657.30px;top:186.85px;font-size:14px;line-height:14px;color:#2c2c2c;font-weight:400;letter-spacing:0.1px;">Sea100.6_Yr<span style="font-size:12px;letter-spacing:-0.6px;vertical-align:1.2px">^</span>:Season100<span style="font-size:12px;letter-spacing:-0.6px;vertical-align:1.2px">^</span></div>
<div style="position:absolute;left:643px;top:203px;width:189px;height:1px;background:#a9a9a9;"></div>
<div style="position:absolute;left:833px;top:204px;width:96px;height:18px;background:#ebebeb;"></div>
<div style="position:absolute;left:832px;top:203px;width:97px;height:1px;background:#c9c9c9;"></div>
<div class="t" style="left:657.30px;top:205.85px;font-size:14px;line-height:14px;color:#2c2c2c;font-weight:400;letter-spacing:0.1px;">Sea100.7_Yr<span style="font-size:12px;letter-spacing:-0.6px;vertical-align:1.2px">^</span>:Season100<span style="font-size:12px;letter-spacing:-0.6px;vertical-align:1.2px">^</span></div>
<div style="position:absolute;left:643px;top:222px;width:189px;height:1px;background:#a9a9a9;"></div>
<div style="position:absolute;left:833px;top:223px;width:96px;height:18px;background:#e3e3e3;"></div>
<div style="position:absolute;left:832px;top:222px;width:97px;height:1px;background:#c9c9c9;"></div>
<div class="t" style="left:657.30px;top:224.85px;font-size:14px;line-height:14px;color:#2c2c2c;font-weight:400;letter-spacing:0.1px;">Sea100.8_Yr<span style="font-size:12px;letter-spacing:-0.6px;vertical-align:1.2px">^</span>:Season100<span style="font-size:12px;letter-spacing:-0.6px;vertical-align:1.2px">^</span></div>
<div style="position:absolute;left:643px;top:241px;width:189px;height:1px;background:#a9a9a9;"></div>
<div style="position:absolute;left:833px;top:242px;width:96px;height:18px;background:#ebebeb;"></div>
<div style="position:absolute;left:832px;top:241px;width:97px;height:1px;background:#c9c9c9;"></div>
<div class="t" style="left:657.30px;top:243.85px;font-size:14px;line-height:14px;color:#2c2c2c;font-weight:400;letter-spacing:0.1px;">Sea100.9_Yr<span style="font-size:12px;letter-spacing:-0.6px;vertical-align:1.2px">^</span>:Season100<span style="font-size:12px;letter-spacing:-0.6px;vertical-align:1.2px">^</span></div>
<div style="position:absolute;left:643px;top:260px;width:189px;height:1px;background:#a9a9a9;"></div>
<div style="position:absolute;left:833px;top:261px;width:96px;height:18px;background:#e3e3e3;"></div>
<div style="position:absolute;left:832px;top:260px;width:97px;height:1px;background:#c9c9c9;"></div>
<div class="t" style="left:657.30px;top:262.85px;font-size:14px;line-height:14px;color:#2c2c2c;font-weight:400;letter-spacing:0.1px;">Sea100.10_Yr<span style="font-size:12px;letter-spacing:-0.6px;vertical-align:1.2px">^</span>:Sea100<span style="font-size:12px;letter-spacing:-0.6px;vertical-align:1.2px">^</span></div>
<div style="position:absolute;left:643px;top:279px;width:189px;height:1px;background:#a9a9a9;"></div>
<div style="position:absolute;left:833px;top:280px;width:96px;height:18px;background:#ebebeb;"></div>
<div style="position:absolute;left:832px;top:279px;width:97px;height:1px;background:#c9c9c9;"></div>
<div style="position:absolute;left:643px;top:298px;width:189px;height:1px;background:#a9a9a9;"></div>
<div style="position:absolute;left:833px;top:299px;width:96px;height:22px;background:#e3e3e3;"></div>
<div style="position:absolute;left:832px;top:298px;width:97px;height:1px;background:#c9c9c9;"></div>
<div style="position:absolute;left:832px;top:89px;width:1px;height:232px;background:#a4a4a4;"></div>
<div style="position:absolute;left:907px;top:89px;width:1px;height:232px;background:#c4c4c4;"></div>
<div style="position:absolute;left:929px;top:59px;width:1px;height:262px;background:#7c7c7c;"></div>
<div style="position:absolute;left:642px;top:320px;width:288px;height:1px;background:#5c5c5c;"></div>
<div style="position:absolute;left:832px;top:89px;width:76px;height:20px;box-sizing:border-box;border:1px solid #4c5870;background:#f2f2f2;"></div>
<div class="c" style="left:857.00px;top:91.35px;font-size:14px;line-height:14px;color:#111;font-weight:400;"><b style="width:8px">1</b><b style="width:8px">1</b><b style="width:8px">.</b><b style="width:8px">9</b><b style="width:8px">8</b><b style="width:8px">8</b></div>
<div class="c" style="left:849.00px;top:110.35px;font-size:14px;line-height:14px;color:#3a8ccc;font-weight:400;"><b style="width:8px">-</b><b style="width:8px">8</b><b style="width:8px">0</b><b style="width:8px">.</b><b style="width:8px">2</b><b style="width:8px">2</b><b style="width:8px">6</b></div>
<div class="c" style="left:849.00px;top:129.35px;font-size:14px;line-height:14px;color:#2a9090;font-weight:400;"><b style="width:8px">-</b><b style="width:8px">3</b><b style="width:8px">1</b><b style="width:8px">.</b><b style="width:8px">8</b><b style="width:8px">1</b><b style="width:8px">0</b></div>
<div class="c" style="left:857.00px;top:148.35px;font-size:14px;line-height:14px;color:#2a8a2a;font-weight:400;"><b style="width:8px">8</b><b style="width:8px">2</b><b style="width:8px">.</b><b style="width:8px">1</b><b style="width:8px">9</b><b style="width:8px">7</b></div>
<div class="c" style="left:857.00px;top:167.35px;font-size:14px;line-height:14px;color:#3a9a2a;font-weight:400;"><b style="width:8px">1</b><b style="width:8px">1</b><b style="width:8px">.</b><b style="width:8px">0</b><b style="width:8px">3</b><b style="width:8px">2</b></div>
<div class="c" style="left:849.00px;top:186.35px;font-size:14px;line-height:14px;color:#6464c8;font-weight:400;"><b style="width:8px">-</b><b style="width:8px">6</b><b style="width:8px">4</b><b style="width:8px">.</b><b style="width:8px">1</b><b style="width:8px">4</b><b style="width:8px">9</b></div>
<div class="c" style="left:849.00px;top:205.35px;font-size:14px;line-height:14px;color:#8a1a1a;font-weight:400;"><b style="width:8px">-</b><b style="width:8px">8</b><b style="width:8px">0</b><b style="width:8px">.</b><b style="width:8px">4</b><b style="width:8px">5</b><b style="width:8px">5</b></div>
<div class="c" style="left:857.00px;top:224.35px;font-size:14px;line-height:14px;color:#c01a1a;font-weight:400;"><b style="width:8px">7</b><b style="width:8px">1</b><b style="width:8px">.</b><b style="width:8px">6</b><b style="width:8px">8</b><b style="width:8px">8</b></div>
<div class="c" style="left:857.00px;top:243.35px;font-size:14px;line-height:14px;color:#7a6a78;font-weight:400;"><b style="width:8px">2</b><b style="width:8px">7</b><b style="width:8px">.</b><b style="width:8px">3</b><b style="width:8px">6</b><b style="width:8px">0</b></div>
<div class="c" style="left:849.00px;top:262.35px;font-size:14px;line-height:14px;color:#9a6a3a;font-weight:400;"><b style="width:8px">-</b><b style="width:8px">2</b><b style="width:8px">1</b><b style="width:8px">.</b><b style="width:8px">9</b><b style="width:8px">3</b><b style="width:8px">2</b></div>
<div class="win" style="left:939px;top:1px;width:332px;height:326px"></div>
<svg style="position:absolute;left:950px;top:13px" width="14" height="14" viewBox="0 0 14 14"><rect x="0" y="0" width="14" height="14" fill="#fff"/><g fill="#8c1030"><path d="M1 4 H4 V5 H2 Z"/><path d="M1 6 L2 6 L4 8 L4 9 L1 9 Z"/><circle cx="7" cy="5.6" r="1.7"/><circle cx="7" cy="9.9" r="1.7"/><path d="M10 2 H13 V3 L11 4 H10 Z"/><path d="M13 5 V9 H10 V8 Z"/></g></svg>
<div class="t" style="left:969.00px;top:14.84px;font-size:12px;line-height:12px;color:#949ca5;font-weight:400;letter-spacing:0px;-webkit-text-stroke:0;">IMon: ZWAK26</div>
<div class="sbtn" style="left:1129px;top:12px"></div>
<svg style="position:absolute;left:1139px;top:15px" width="11" height="11"><circle cx="5.5" cy="5.5" r="4.3" fill="#d8f8c0" stroke="#222" stroke-width="1" stroke-dasharray="1.6 0.9"/></svg>
<div class="btn" style="left:1161px;top:12px"></div>
<svg style="position:absolute;left:1161px;top:12px" width="31" height="17"><rect x="10.5" y="8.5" width="10" height="3" rx="1.2" fill="#f4f6f8" stroke="#384048" stroke-width="1"/></svg>
<div class="btn" style="left:1195px;top:12px"></div>
<svg style="position:absolute;left:1195px;top:12px" width="31" height="17"><rect x="10.5" y="3.5" width="10" height="9" rx="1.2" fill="#f4f6f8" stroke="#384048" stroke-width="1.2"/><rect x="13" y="6.5" width="5" height="2.5" fill="#fff" stroke="#384048" stroke-width="0.9"/></svg>
<div class="btn" style="left:1229px;top:12px"></div>
<svg style="position:absolute;left:1229px;top:12px" width="31" height="17"><path d="M10.5 4.5 L13.5 4.5 L15.5 6.8 L17.5 4.5 L20.5 4.5 L17.3 8.3 L20.5 12.2 L17.5 12.2 L15.5 9.9 L13.5 12.2 L10.5 12.2 L13.7 8.3 Z" fill="#f6f8fa" stroke="#384048" stroke-width="1" stroke-linejoin="round"/></svg>
<div style="position:absolute;left:947px;top:32px;width:316px;height:289px;background:#c2c2c2;"></div>
<div style="position:absolute;left:947px;top:32px;width:316px;height:27px;background:linear-gradient(to bottom,#8a8d90 0px,#939393 2px,#939393 100%);"></div>
<div style="position:absolute;left:947px;top:59px;width:316px;height:1px;background:#3c3c3c;"></div>
<div style="position:absolute;left:947px;top:60px;width:316px;height:1px;background:#e2e2e2;"></div>
<div style="position:absolute;left:952px;top:36px;width:57px;height:24px;box-sizing:border-box;border:1px solid #3a3a3a;border-bottom:none;border-radius:3px 3px 0 0;background:linear-gradient(to bottom,#f2f2f2,#dedede);"></div>
<div style="position:absolute;left:953px;top:59px;width:55px;height:1px;background:#e4e4e4;"></div>
<div class="t" style="left:957.00px;top:42.69px;font-size:11px;line-height:11px;color:#1e2530;font-weight:700;letter-spacing:0.3px;">ZWAK26</div>
<div style="position:absolute;left:1009px;top:41px;width:19px;height:18px;box-sizing:border-box;border-radius:3px 3px 0 0;border:1px solid #8a8a8a;border-bottom:none;background:linear-gradient(to bottom,#b8b8b8,#a6a6a6);"></div>
<svg style="position:absolute;left:1014px;top:45px" width="9" height="9"><path d="M4.5 1 V8 M1 4.5 H8" stroke="#333" stroke-width="1"/></svg>
<div style="position:absolute;left:947px;top:32px;width:1px;height:289px;background:#4a4a4a;"></div>
<div style="position:absolute;left:948px;top:61px;width:315px;height:29px;background:#c6c6c6;"></div>
<div style="position:absolute;left:1253px;top:63px;width:1px;height:25px;background:#a9a9a9;"></div>
<div class="t" style="left:1186.50px;top:68.75px;font-size:14px;line-height:14px;color:#363636;font-weight:400;letter-spacing:0px;">Bar, DDC</div>
<div style="position:absolute;left:954px;top:83px;width:218px;height:6px;box-sizing:border-box;border:1px solid #3a1010;background:linear-gradient(to right,#12c012 0,#12c012 49px,#c00808 49px,#c00808 100%);"></div>
<svg style="position:absolute;left:1168px;top:82px" width="8" height="6"><path d="M1 0 L7 0 L4.5 4 Z" fill="#f0c040"/></svg>
<div class="t" style="left:1022.50px;width:40px;text-align:center;top:64.95px;font-size:14px;line-height:14px;color:#585858">5</div>
<div class="t" style="left:1030.50px;width:40px;text-align:center;top:64.95px;font-size:14px;line-height:14px;color:#585858">8</div>
<div class="t" style="left:1038.50px;width:40px;text-align:center;top:64.95px;font-size:14px;line-height:14px;color:#585858">1</div>
<div class="t" style="left:1049.00px;width:40px;text-align:center;top:64.95px;font-size:14px;line-height:14px;color:#585858">-</div>
<div class="t" style="left:1057.50px;width:40px;text-align:center;top:64.95px;font-size:14px;line-height:14px;color:#585858">+</div>
<div class="t" style="left:1088.70px;width:40px;text-align:center;top:64.95px;font-size:14px;line-height:14px;color:#585858">Δ</div>
<div class="t" style="left:1102.00px;width:40px;text-align:center;top:64.95px;font-size:14px;line-height:14px;color:#585858">-</div>
<div class="t" style="left:1110.40px;width:40px;text-align:center;top:64.95px;font-size:14px;line-height:14px;color:#585858">8</div>
<div class="t" style="left:1119.40px;width:40px;text-align:center;top:64.95px;font-size:14px;line-height:14px;color:#585858">-</div>
<div class="t" style="left:1127.50px;width:40px;text-align:center;top:64.95px;font-size:14px;line-height:14px;color:#585858">+</div>
<div style="position:absolute;left:948px;top:90px;width:230px;height:1px;background:#a9a9a9;"></div>
<div style="position:absolute;left:1179px;top:91px;width:83px;height:18px;background:#ebebeb;"></div>
<div style="position:absolute;left:1178px;top:90px;width:84px;height:1px;background:#c9c9c9;"></div>
<div class="t" style="left:962.30px;top:92.85px;font-size:14px;line-height:14px;color:#2c2c2c;font-weight:400;letter-spacing:0.1px;">Sea200.1_Yr<span style="font-size:12px;letter-spacing:-0.6px;vertical-align:1.2px">^</span>:Season200<span style="font-size:12px;letter-spacing:-0.6px;vertical-align:1.2px">^</span></div>
<div style="position:absolute;left:948px;top:109px;width:230px;height:1px;background:#a9a9a9;"></div>
<div style="position:absolute;left:1179px;top:110px;width:83px;height:18px;background:#e3e3e3;"></div>
<div style="position:absolute;left:1178px;top:109px;width:84px;height:1px;background:#c9c9c9;"></div>
<div class="t" style="left:962.30px;top:111.85px;font-size:14px;line-height:14px;color:#2c2c2c;font-weight:400;letter-spacing:0.1px;">Sea200.2_Yr<span style="font-size:12px;letter-spacing:-0.6px;vertical-align:1.2px">^</span>:Season200<span style="font-size:12px;letter-spacing:-0.6px;vertical-align:1.2px">^</span></div>
<div style="position:absolute;left:948px;top:128px;width:230px;height:1px;background:#a9a9a9;"></div>
<div style="position:absolute;left:1179px;top:129px;width:83px;height:18px;background:#ebebeb;"></div>
<div style="position:absolute;left:1178px;top:128px;width:84px;height:1px;background:#c9c9c9;"></div>
<div class="t" style="left:962.30px;top:130.85px;font-size:14px;line-height:14px;color:#2c2c2c;font-weight:400;letter-spacing:0.1px;">Sea200.3_Yr<span style="font-size:12px;letter-spacing:-0.6px;vertical-align:1.2px">^</span>:Season200<span style="font-size:12px;letter-spacing:-0.6px;vertical-align:1.2px">^</span></div>
<div style="position:absolute;left:948px;top:147px;width:230px;height:1px;background:#a9a9a9;"></div>
<div style="position:absolute;left:1179px;top:148px;width:83px;height:18px;background:#e3e3e3;"></div>
<div style="position:absolute;left:1178px;top:147px;width:84px;height:1px;background:#c9c9c9;"></div>
<div class="t" style="left:962.30px;top:149.85px;font-size:14px;line-height:14px;color:#2c2c2c;font-weight:400;letter-spacing:0.1px;">Sea200.4_Yr<span style="font-size:12px;letter-spacing:-0.6px;vertical-align:1.2px">^</span>:Season200<span style="font-size:12px;letter-spacing:-0.6px;vertical-align:1.2px">^</span></div>
<div style="position:absolute;left:948px;top:166px;width:230px;height:1px;background:#a9a9a9;"></div>
<div style="position:absolute;left:1179px;top:167px;width:83px;height:18px;background:#ebebeb;"></div>
<div style="position:absolute;left:1178px;top:166px;width:84px;height:1px;background:#c9c9c9;"></div>
<div class="t" style="left:962.30px;top:168.85px;font-size:14px;line-height:14px;color:#2c2c2c;font-weight:400;letter-spacing:0.1px;">Sea200.5_Yr<span style="font-size:12px;letter-spacing:-0.6px;vertical-align:1.2px">^</span>:Season200<span style="font-size:12px;letter-spacing:-0.6px;vertical-align:1.2px">^</span></div>
<div style="position:absolute;left:948px;top:185px;width:230px;height:1px;background:#a9a9a9;"></div>
<div style="position:absolute;left:1179px;top:186px;width:83px;height:18px;background:#e3e3e3;"></div>
<div style="position:absolute;left:1178px;top:185px;width:84px;height:1px;background:#c9c9c9;"></div>
<div class="t" style="left:962.30px;top:187.85px;font-size:14px;line-height:14px;color:#2c2c2c;font-weight:400;letter-spacing:0.1px;">Sea200.6_Yr<span style="font-size:12px;letter-spacing:-0.6px;vertical-align:1.2px">^</span>:Season200<span style="font-size:12px;letter-spacing:-0.6px;vertical-align:1.2px">^</span></div>
<div style="position:absolute;left:948px;top:204px;width:230px;height:1px;background:#a9a9a9;"></div>
<div style="position:absolute;left:1179px;top:205px;width:83px;height:18px;background:#ebebeb;"></div>
<div style="position:absolute;left:1178px;top:204px;width:84px;height:1px;background:#c9c9c9;"></div>
<div class="t" style="left:962.30px;top:206.85px;font-size:14px;line-height:14px;color:#2c2c2c;font-weight:400;letter-spacing:0.1px;">Sea200.7_Yr<span style="font-size:12px;letter-spacing:-0.6px;vertical-align:1.2px">^</span>:Season200<span style="font-size:12px;letter-spacing:-0.6px;vertical-align:1.2px">^</span></div>
<div style="position:absolute;left:948px;top:223px;width:230px;height:1px;background:#a9a9a9;"></div>
<div style="position:absolute;left:1179px;top:224px;width:83px;height:18px;background:#e3e3e3;"></div>
<div style="position:absolute;left:1178px;top:223px;width:84px;height:1px;background:#c9c9c9;"></div>
<div class="t" style="left:962.30px;top:225.85px;font-size:14px;line-height:14px;color:#2c2c2c;font-weight:400;letter-spacing:0.1px;">Sea200.8_Yr<span style="font-size:12px;letter-spacing:-0.6px;vertical-align:1.2px">^</span>:Season200<span style="font-size:12px;letter-spacing:-0.6px;vertical-align:1.2px">^</span></div>
<div style="position:absolute;left:948px;top:242px;width:230px;height:1px;background:#a9a9a9;"></div>
<div style="position:absolute;left:1179px;top:243px;width:83px;height:18px;background:#ebebeb;"></div>
<div style="position:absolute;left:1178px;top:242px;width:84px;height:1px;background:#c9c9c9;"></div>
<div class="t" style="left:962.30px;top:244.85px;font-size:14px;line-height:14px;color:#2c2c2c;font-weight:400;letter-spacing:0.1px;">Sea200.9_Yr<span style="font-size:12px;letter-spacing:-0.6px;vertical-align:1.2px">^</span>:Season200<span style="font-size:12px;letter-spacing:-0.6px;vertical-align:1.2px">^</span></div>
<div style="position:absolute;left:948px;top:261px;width:230px;height:1px;background:#a9a9a9;"></div>
<div style="position:absolute;left:1179px;top:262px;width:83px;height:18px;background:#e3e3e3;"></div>
<div style="position:absolute;left:1178px;top:261px;width:84px;height:1px;background:#c9c9c9;"></div>
<div class="t" style="left:962.30px;top:263.85px;font-size:14px;line-height:14px;color:#2c2c2c;font-weight:400;letter-spacing:0.1px;">Sea200.10_Yr<span style="font-size:12px;letter-spacing:-0.6px;vertical-align:1.2px">^</span>:Season200<span style="font-size:12px;letter-spacing:-0.6px;vertical-align:1.2px">^</span></div>
<div style="position:absolute;left:948px;top:280px;width:230px;height:1px;background:#a9a9a9;"></div>
<div style="position:absolute;left:1179px;top:281px;width:83px;height:18px;background:#ebebeb;"></div>
<div style="position:absolute;left:1178px;top:280px;width:84px;height:1px;background:#c9c9c9;"></div>
<div style="position:absolute;left:948px;top:299px;width:230px;height:1px;background:#a9a9a9;"></div>
<div style="position:absolute;left:1179px;top:300px;width:83px;height:21px;background:#e3e3e3;"></div>
<div style="position:absolute;left:1178px;top:299px;width:84px;height:1px;background:#c9c9c9;"></div>
<div style="position:absolute;left:1178px;top:90px;width:1px;height:231px;background:#a4a4a4;"></div>
<div style="position:absolute;left:1253px;top:90px;width:1px;height:231px;background:#c4c4c4;"></div>
<div style="position:absolute;left:1262px;top:60px;width:1px;height:261px;background:#7c7c7c;"></div>
<div style="position:absolute;left:947px;top:320px;width:316px;height:1px;background:#5c5c5c;"></div>
<div style="position:absolute;left:1178px;top:90px;width:76px;height:20px;box-sizing:border-box;border:1px solid #4c5870;background:#f2f2f2;"></div>
<div class="c" style="left:1203.00px;top:92.35px;font-size:14px;line-height:14px;color:#111;font-weight:400;"><b style="width:8px">3</b><b style="width:8px">9</b><b style="width:8px">.</b><b style="width:8px">8</b><b style="width:8px">4</b><b style="width:8px">2</b></div>
<div class="c" style="left:1203.00px;top:111.35px;font-size:14px;line-height:14px;color:#3a8ccc;font-weight:400;"><b style="width:8px">3</b><b style="width:8px">4</b><b style="width:8px">.</b><b style="width:8px">0</b><b style="width:8px">0</b><b style="width:8px">2</b></div>
<div class="c" style="left:1203.00px;top:130.35px;font-size:14px;line-height:14px;color:#2a9090;font-weight:400;"><b style="width:8px">2</b><b style="width:8px">7</b><b style="width:8px">.</b><b style="width:8px">7</b><b style="width:8px">9</b><b style="width:8px">7</b></div>
<div class="c" style="left:1203.00px;top:149.35px;font-size:14px;line-height:14px;color:#3a8a2a;font-weight:400;"><b style="width:8px">1</b><b style="width:8px">4</b><b style="width:8px">.</b><b style="width:8px">7</b><b style="width:8px">5</b><b style="width:8px">0</b></div>
<div class="c" style="left:1195.00px;top:168.35px;font-size:14px;line-height:14px;color:#3a9a2a;font-weight:400;"><b style="width:8px">-</b><b style="width:8px">4</b><b style="width:8px">3</b><b style="width:8px">.</b><b style="width:8px">7</b><b style="width:8px">1</b><b style="width:8px">7</b></div>
<div class="c" style="left:1203.00px;top:187.35px;font-size:14px;line-height:14px;color:#6464c8;font-weight:400;"><b style="width:8px">-</b><b style="width:8px">2</b><b style="width:8px">.</b><b style="width:8px">2</b><b style="width:8px">8</b><b style="width:8px">6</b></div>
<div class="c" style="left:1195.00px;top:206.35px;font-size:14px;line-height:14px;color:#8a1a1a;font-weight:400;"><b style="width:8px">-</b><b style="width:8px">1</b><b style="width:8px">0</b><b style="width:8px">.</b><b style="width:8px">7</b><b style="width:8px">9</b><b style="width:8px">9</b></div>
<div class="c" style="left:1203.00px;top:225.35px;font-size:14px;line-height:14px;color:#c01a1a;font-weight:400;"><b style="width:8px">7</b><b style="width:8px">2</b><b style="width:8px">.</b><b style="width:8px">1</b><b style="width:8px">1</b><b style="width:8px">5</b></div>
<div class="c" style="left:1203.00px;top:244.35px;font-size:14px;line-height:14px;color:#7a6a78;font-weight:400;"><b style="width:8px">6</b><b style="width:8px">6</b><b style="width:8px">.</b><b style="width:8px">5</b><b style="width:8px">8</b><b style="width:8px">4</b></div>
<div class="c" style="left:1203.00px;top:263.35px;font-size:14px;line-height:14px;color:#9a6a3a;font-weight:400;"><b style="width:8px">4</b><b style="width:8px">3</b><b style="width:8px">.</b><b style="width:8px">6</b><b style="width:8px">0</b><b style="width:8px">5</b></div>
<div class="win" style="left:0px;top:326px;width:1290px;height:700px;border-radius:4px 4px 0 0;"></div>
<svg style="position:absolute;left:11px;top:338px" width="14" height="14" viewBox="0 0 14 14"><rect x="0" y="0" width="14" height="14" fill="#fff"/><g fill="#8c1030"><path d="M1 4 H4 V5 H2 Z"/><path d="M1 6 L2 6 L4 8 L4 9 L1 9 Z"/><circle cx="7" cy="5.6" r="1.7"/><circle cx="7" cy="9.9" r="1.7"/><path d="M10 2 H13 V3 L11 4 H10 Z"/><path d="M13 5 V9 H10 V8 Z"/></g></svg>
<div class="t" style="left:30.00px;top:339.84px;font-size:12px;line-height:12px;color:#949ca5;font-weight:400;letter-spacing:0px;-webkit-text-stroke:0;">ZWA - Wheat (Globex), Daily Continuation</div>
<div class="sbtn" style="left:1133px;top:336px"></div>
<svg style="position:absolute;left:1143px;top:339px" width="11" height="11"><circle cx="5.5" cy="5.5" r="4.3" fill="#d8f8c0" stroke="#222" stroke-width="1" stroke-dasharray="1.6 0.9"/></svg>
<div class="btn" style="left:1165px;top:336px"></div>
<svg style="position:absolute;left:1165px;top:336px" width="31" height="17"><rect x="10.5" y="8.5" width="10" height="3" rx="1.2" fill="#f4f6f8" stroke="#384048" stroke-width="1"/></svg>
<div class="btn" style="left:1199px;top:336px"></div>
<svg style="position:absolute;left:1199px;top:336px" width="31" height="17"><rect x="10.5" y="3.5" width="10" height="9" rx="1.2" fill="#f4f6f8" stroke="#384048" stroke-width="1.2"/><rect x="13" y="6.5" width="5" height="2.5" fill="#fff" stroke="#384048" stroke-width="0.9"/></svg>
<div class="btn" style="left:1233px;top:336px"></div>
<svg style="position:absolute;left:1233px;top:336px" width="31" height="17"><path d="M10.5 4.5 L13.5 4.5 L15.5 6.8 L17.5 4.5 L20.5 4.5 L17.3 8.3 L20.5 12.2 L17.5 12.2 L15.5 9.9 L13.5 12.2 L10.5 12.2 L13.7 8.3 Z" fill="#f6f8fa" stroke="#384048" stroke-width="1" stroke-linejoin="round"/></svg>
<div style="position:absolute;left:8px;top:357px;width:1259px;height:21px;background:linear-gradient(to bottom,#8a8d90 0,#939393 2px,#939393 100%);"></div>
<div style="position:absolute;left:8px;top:378px;width:1259px;height:1px;background:#7a7a7a;"></div>
<div style="position:absolute;left:8px;top:379px;width:1259px;height:1px;background:#bebebe;"></div>
<div style="position:absolute;left:8px;top:380px;width:1259px;height:1px;background:#a8a8a8;"></div>
<div style="position:absolute;left:8px;top:381px;width:1259px;height:1px;background:#6a6a6a;"></div>
<div style="position:absolute;left:8px;top:382px;width:2px;height:586px;background:#8a8a8a;"></div>
<div style="position:absolute;left:10px;top:382px;width:1255px;height:586px;background:#ffffff;"></div>
<div style="position:absolute;left:1265px;top:382px;width:1px;height:586px;background:#e0e0e0;"></div>
<div style="position:absolute;left:1266px;top:382px;width:1px;height:587px;background:#f6f9fb;"></div>
<div style="position:absolute;left:10px;top:967px;width:1256px;height:1px;background:#e0e0e0;"></div>
<div style="position:absolute;left:8px;top:968px;width:1259px;height:1px;background:#f6f9fb;"></div>
<div style="position:absolute;left:10px;top:360px;width:52px;height:18px;box-sizing:border-box;border-top:2px solid #f0a830;border-left:1px solid #fafafa;border-radius:3px 3px 0 0;background:#c8c8c8;"></div>
<div class="t" style="left:15.50px;top:363.69px;font-size:11px;line-height:11px;color:#30343a;font-weight:400;letter-spacing:-0.35px;">ZWA,DC</div>
<div style="position:absolute;left:63px;top:360px;width:24px;height:18px;box-sizing:border-box;border-top:1px solid #fafafa;border-left:1px solid #fafafa;border-radius:3px 3px 0 0;background:#565656;"></div>
<svg style="position:absolute;left:71px;top:365px" width="9" height="9"><path d="M4.5 0.5 V8.5 M0.5 4.5 H8.5" stroke="#e8e8e8" stroke-width="1.2"/></svg>
<svg style="position:absolute;left:0;top:0" width="1272" height="976" viewBox="0 0 1272 976"><rect x="10" y="382" width="1255" height="1" fill="#000"/><rect x="10" y="382" width="1" height="585" fill="#000"/><g shape-rendering="crispEdges"><rect x="1189" y="383" width="1" height="566" fill="#000"/><rect x="1185" y="383" width="4" height="1" fill="#000"/><rect x="11" y="383" width="5" height="1" fill="#000"/><rect x="1187" y="388" width="2" height="1" fill="#000"/><rect x="11" y="388" width="2" height="1" fill="#000"/><rect x="1187" y="394" width="2" height="1" fill="#000"/><rect x="11" y="394" width="2" height="1" fill="#000"/><rect x="1187" y="399" width="2" height="1" fill="#000"/><rect x="11" y="399" width="2" height="1" fill="#000"/><rect x="1187" y="404" width="2" height="1" fill="#000"/><rect x="11" y="404" width="2" height="1" fill="#000"/><rect x="1184" y="409" width="5" height="1" fill="#000"/><rect x="11" y="409" width="5" height="1" fill="#000"/><rect x="1187" y="414" width="2" height="1" fill="#000"/><rect x="11" y="414" width="2" height="1" fill="#000"/><rect x="1187" y="419" width="2" height="1" fill="#000"/><rect x="11" y="419" width="2" height="1" fill="#000"/><rect x="1187" y="425" width="2" height="1" fill="#000"/><rect x="11" y="425" width="2" height="1" fill="#000"/><rect x="1187" y="430" width="2" height="1" fill="#000"/><rect x="11" y="430" width="2" height="1" fill="#000"/><rect x="1185" y="435" width="4" height="1" fill="#000"/><rect x="11" y="435" width="5" height="1" fill="#000"/><rect x="1187" y="440" width="2" height="1" fill="#000"/><rect x="11" y="440" width="2" height="1" fill="#000"/><rect x="1187" y="445" width="2" height="1" fill="#000"/><rect x="11" y="445" width="2" height="1" fill="#000"/><rect x="1187" y="451" width="2" height="1" fill="#000"/><rect x="11" y="451" width="2" height="1" fill="#000"/><rect x="1187" y="456" width="2" height="1" fill="#000"/><rect x="11" y="456" width="2" height="1" fill="#000"/><rect x="1184" y="461" width="5" height="1" fill="#000"/><rect x="11" y="461" width="5" height="1" fill="#000"/><rect x="1187" y="466" width="2" height="1" fill="#000"/><rect x="11" y="466" width="2" height="1" fill="#000"/><rect x="1187" y="471" width="2" height="1" fill="#000"/><rect x="11" y="471" width="2" height="1" fill="#000"/><rect x="1187" y="477" width="2" height="1" fill="#000"/><rect x="11" y="477" width="2" height="1" fill="#000"/><rect x="1187" y="482" width="2" height="1" fill="#000"/><rect x="11" y="482" width="2" height="1" fill="#000"/><rect x="1185" y="487" width="4" height="1" fill="#000"/><rect x="11" y="487" width="5" height="1" fill="#000"/><rect x="1187" y="492" width="2" height="1" fill="#000"/><rect x="11" y="492" width="2" height="1" fill="#000"/><rect x="1187" y="497" width="2" height="1" fill="#000"/><rect x="11" y="497" width="2" height="1" fill="#000"/><rect x="1187" y="503" width="2" height="1" fill="#000"/><rect x="11" y="503" width="2" height="1" fill="#000"/><rect x="1187" y="508" width="2" height="1" fill="#000"/><rect x="11" y="508" width="2" height="1" fill="#000"/><rect x="1184" y="513" width="5" height="1" fill="#000"/><rect x="11" y="513" width="5" height="1" fill="#000"/><rect x="1187" y="518" width="2" height="1" fill="#000"/><rect x="11" y="518" width="2" height="1" fill="#000"/><rect x="1187" y="523" width="2" height="1" fill="#000"/><rect x="11" y="523" width="2" height="1" fill="#000"/><rect x="1187" y="528" width="2" height="1" fill="#000"/><rect x="11" y="528" width="2" height="1" fill="#000"/><rect x="1187" y="534" width="2" height="1" fill="#000"/><rect x="11" y="534" width="2" height="1" fill="#000"/><rect x="1185" y="539" width="4" height="1" fill="#000"/><rect x="11" y="539" width="5" height="1" fill="#000"/><rect x="1187" y="544" width="2" height="1" fill="#000"/><rect x="11" y="544" width="2" height="1" fill="#000"/><rect x="1187" y="549" width="2" height="1" fill="#000"/><rect x="11" y="549" width="2" height="1" fill="#000"/><rect x="1187" y="554" width="2" height="1" fill="#000"/><rect x="11" y="554" width="2" height="1" fill="#000"/><rect x="1187" y="560" width="2" height="1" fill="#000"/><rect x="11" y="560" width="2" height="1" fill="#000"/><rect x="1184" y="565" width="5" height="1" fill="#000"/><rect x="11" y="565" width="5" height="1" fill="#000"/><rect x="1187" y="570" width="2" height="1" fill="#000"/><rect x="11" y="570" width="2" height="1" fill="#000"/><rect x="1187" y="575" width="2" height="1" fill="#000"/><rect x="11" y="575" width="2" height="1" fill="#000"/><rect x="1187" y="580" width="2" height="1" fill="#000"/><rect x="11" y="580" width="2" height="1" fill="#000"/><rect x="1187" y="586" width="2" height="1" fill="#000"/><rect x="11" y="586" width="2" height="1" fill="#000"/><rect x="1185" y="591" width="4" height="1" fill="#000"/><rect x="11" y="591" width="5" height="1" fill="#000"/><rect x="1187" y="596" width="2" height="1" fill="#000"/><rect x="11" y="596" width="2" height="1" fill="#000"/><rect x="1187" y="601" width="2" height="1" fill="#000"/><rect x="11" y="601" width="2" height="1" fill="#000"/><rect x="1187" y="606" width="2" height="1" fill="#000"/><rect x="11" y="606" width="2" height="1" fill="#000"/><rect x="1187" y="612" width="2" height="1" fill="#000"/><rect x="11" y="612" width="2" height="1" fill="#000"/><rect x="1184" y="617" width="5" height="1" fill="#000"/><rect x="11" y="617" width="5" height="1" fill="#000"/><rect x="1187" y="622" width="2" height="1" fill="#000"/><rect x="11" y="622" width="2" height="1" fill="#000"/><rect x="1187" y="627" width="2" height="1" fill="#000"/><rect x="11" y="627" width="2" height="1" fill="#000"/><rect x="1187" y="632" width="2" height="1" fill="#000"/><rect x="11" y="632" width="2" height="1" fill="#000"/><rect x="1187" y="637" width="2" height="1" fill="#000"/><rect x="11" y="637" width="2" height="1" fill="#000"/><rect x="1185" y="643" width="4" height="1" fill="#000"/><rect x="11" y="643" width="5" height="1" fill="#000"/><rect x="1187" y="648" width="2" height="1" fill="#000"/><rect x="11" y="648" width="2" height="1" fill="#000"/><rect x="1187" y="653" width="2" height="1" fill="#000"/><rect x="11" y="653" width="2" height="1" fill="#000"/><rect x="1187" y="658" width="2" height="1" fill="#000"/><rect x="11" y="658" width="2" height="1" fill="#000"/><rect x="1187" y="663" width="2" height="1" fill="#000"/><rect x="11" y="663" width="2" height="1" fill="#000"/><rect x="1184" y="669" width="5" height="1" fill="#000"/><rect x="11" y="669" width="5" height="1" fill="#000"/><rect x="1187" y="674" width="2" height="1" fill="#000"/><rect x="11" y="674" width="2" height="1" fill="#000"/><rect x="1187" y="679" width="2" height="1" fill="#000"/><rect x="11" y="679" width="2" height="1" fill="#000"/><rect x="1187" y="684" width="2" height="1" fill="#000"/><rect x="11" y="684" width="2" height="1" fill="#000"/><rect x="1187" y="689" width="2" height="1" fill="#000"/><rect x="11" y="689" width="2" height="1" fill="#000"/><rect x="1185" y="695" width="4" height="1" fill="#000"/><rect x="11" y="695" width="5" height="1" fill="#000"/><rect x="1187" y="700" width="2" height="1" fill="#000"/><rect x="11" y="700" width="2" height="1" fill="#000"/><rect x="1187" y="705" width="2" height="1" fill="#000"/><rect x="11" y="705" width="2" height="1" fill="#000"/><rect x="1187" y="710" width="2" height="1" fill="#000"/><rect x="11" y="710" width="2" height="1" fill="#000"/><rect x="1187" y="715" width="2" height="1" fill="#000"/><rect x="11" y="715" width="2" height="1" fill="#000"/><rect x="1184" y="721" width="5" height="1" fill="#000"/><rect x="11" y="721" width="5" height="1" fill="#000"/><rect x="1187" y="726" width="2" height="1" fill="#000"/><rect x="11" y="726" width="2" height="1" fill="#000"/><rect x="1187" y="731" width="2" height="1" fill="#000"/><rect x="11" y="731" width="2" height="1" fill="#000"/><rect x="1187" y="736" width="2" height="1" fill="#000"/><rect x="11" y="736" width="2" height="1" fill="#000"/><rect x="1187" y="741" width="2" height="1" fill="#000"/><rect x="11" y="741" width="2" height="1" fill="#000"/><rect x="1185" y="746" width="4" height="1" fill="#000"/><rect x="11" y="746" width="5" height="1" fill="#000"/><rect x="1187" y="752" width="2" height="1" fill="#000"/><rect x="11" y="752" width="2" height="1" fill="#000"/><rect x="1187" y="757" width="2" height="1" fill="#000"/><rect x="11" y="757" width="2" height="1" fill="#000"/><rect x="1187" y="762" width="2" height="1" fill="#000"/><rect x="11" y="762" width="2" height="1" fill="#000"/><rect x="1187" y="767" width="2" height="1" fill="#000"/><rect x="11" y="767" width="2" height="1" fill="#000"/><rect x="1184" y="772" width="5" height="1" fill="#000"/><rect x="11" y="772" width="5" height="1" fill="#000"/><rect x="1187" y="778" width="2" height="1" fill="#000"/><rect x="11" y="778" width="2" height="1" fill="#000"/><rect x="1187" y="783" width="2" height="1" fill="#000"/><rect x="11" y="783" width="2" height="1" fill="#000"/><rect x="1187" y="788" width="2" height="1" fill="#000"/><rect x="11" y="788" width="2" height="1" fill="#000"/><rect x="1187" y="793" width="2" height="1" fill="#000"/><rect x="11" y="793" width="2" height="1" fill="#000"/><rect x="1185" y="798" width="4" height="1" fill="#000"/><rect x="11" y="798" width="5" height="1" fill="#000"/><rect x="1187" y="804" width="2" height="1" fill="#000"/><rect x="11" y="804" width="2" height="1" fill="#000"/><rect x="1187" y="809" width="2" height="1" fill="#000"/><rect x="11" y="809" width="2" height="1" fill="#000"/><rect x="1187" y="814" width="2" height="1" fill="#000"/><rect x="11" y="814" width="2" height="1" fill="#000"/><rect x="1187" y="819" width="2" height="1" fill="#000"/><rect x="11" y="819" width="2" height="1" fill="#000"/><rect x="1184" y="824" width="5" height="1" fill="#000"/><rect x="11" y="824" width="5" height="1" fill="#000"/><rect x="1187" y="829" width="2" height="1" fill="#000"/><rect x="11" y="829" width="2" height="1" fill="#000"/><rect x="1187" y="835" width="2" height="1" fill="#000"/><rect x="11" y="835" width="2" height="1" fill="#000"/><rect x="1187" y="840" width="2" height="1" fill="#000"/><rect x="11" y="840" width="2" height="1" fill="#000"/><rect x="1187" y="845" width="2" height="1" fill="#000"/><rect x="11" y="845" width="2" height="1" fill="#000"/><rect x="1185" y="850" width="4" height="1" fill="#000"/><rect x="11" y="850" width="5" height="1" fill="#000"/><rect x="1187" y="855" width="2" height="1" fill="#000"/><rect x="11" y="855" width="2" height="1" fill="#000"/><rect x="1187" y="861" width="2" height="1" fill="#000"/><rect x="11" y="861" width="2" height="1" fill="#000"/><rect x="1187" y="866" width="2" height="1" fill="#000"/><rect x="11" y="866" width="2" height="1" fill="#000"/><rect x="1187" y="871" width="2" height="1" fill="#000"/><rect x="11" y="871" width="2" height="1" fill="#000"/><rect x="1184" y="876" width="5" height="1" fill="#000"/><rect x="11" y="876" width="5" height="1" fill="#000"/><rect x="1187" y="881" width="2" height="1" fill="#000"/><rect x="11" y="881" width="2" height="1" fill="#000"/><rect x="1187" y="887" width="2" height="1" fill="#000"/><rect x="11" y="887" width="2" height="1" fill="#000"/><rect x="1187" y="892" width="2" height="1" fill="#000"/><rect x="11" y="892" width="2" height="1" fill="#000"/><rect x="1187" y="897" width="2" height="1" fill="#000"/><rect x="11" y="897" width="2" height="1" fill="#000"/><rect x="1185" y="902" width="4" height="1" fill="#000"/><rect x="11" y="902" width="5" height="1" fill="#000"/><rect x="1187" y="907" width="2" height="1" fill="#000"/><rect x="11" y="907" width="2" height="1" fill="#000"/><rect x="1187" y="913" width="2" height="1" fill="#000"/><rect x="11" y="913" width="2" height="1" fill="#000"/><rect x="1187" y="918" width="2" height="1" fill="#000"/><rect x="11" y="918" width="2" height="1" fill="#000"/><rect x="1187" y="923" width="2" height="1" fill="#000"/><rect x="11" y="923" width="2" height="1" fill="#000"/><rect x="1184" y="928" width="5" height="1" fill="#000"/><rect x="11" y="928" width="5" height="1" fill="#000"/><rect x="1187" y="933" width="2" height="1" fill="#000"/><rect x="11" y="933" width="2" height="1" fill="#000"/><rect x="1187" y="938" width="2" height="1" fill="#000"/><rect x="11" y="938" width="2" height="1" fill="#000"/><rect x="1187" y="944" width="2" height="1" fill="#000"/><rect x="11" y="944" width="2" height="1" fill="#000"/><rect x="29" y="409" width="1" height="1" fill="#000"/><rect x="42" y="409" width="1" height="1" fill="#000"/><rect x="55" y="409" width="1" height="1" fill="#000"/><rect x="68" y="409" width="1" height="1" fill="#000"/><rect x="81" y="409" width="1" height="1" fill="#000"/><rect x="94" y="409" width="1" height="1" fill="#000"/><rect x="107" y="409" width="1" height="1" fill="#000"/><rect x="120" y="409" width="1" height="1" fill="#000"/><rect x="133" y="409" width="1" height="1" fill="#000"/><rect x="146" y="409" width="1" height="1" fill="#000"/><rect x="159" y="409" width="1" height="1" fill="#000"/><rect x="172" y="409" width="1" height="1" fill="#000"/><rect x="185" y="409" width="1" height="1" fill="#000"/><rect x="198" y="409" width="1" height="1" fill="#000"/><rect x="211" y="409" width="1" height="1" fill="#000"/><rect x="224" y="409" width="1" height="1" fill="#000"/><rect x="237" y="409" width="1" height="1" fill="#000"/><rect x="250" y="409" width="1" height="1" fill="#000"/><rect x="263" y="409" width="1" height="1" fill="#000"/><rect x="276" y="409" width="1" height="1" fill="#000"/><rect x="289" y="409" width="1" height="1" fill="#000"/><rect x="302" y="409" width="1" height="1" fill="#000"/><rect x="315" y="409" width="1" height="1" fill="#000"/><rect x="328" y="409" width="1" height="1" fill="#000"/><rect x="341" y="409" width="1" height="1" fill="#000"/><rect x="354" y="409" width="1" height="1" fill="#000"/><rect x="367" y="409" width="1" height="1" fill="#000"/><rect x="380" y="409" width="1" height="1" fill="#000"/><rect x="393" y="409" width="1" height="1" fill="#000"/><rect x="406" y="409" width="1" height="1" fill="#000"/><rect x="419" y="409" width="1" height="1" fill="#000"/><rect x="432" y="409" width="1" height="1" fill="#000"/><rect x="445" y="409" width="1" height="1" fill="#000"/><rect x="458" y="409" width="1" height="1" fill="#000"/><rect x="471" y="409" width="1" height="1" fill="#000"/><rect x="484" y="409" width="1" height="1" fill="#000"/><rect x="497" y="409" width="1" height="1" fill="#000"/><rect x="510" y="409" width="1" height="1" fill="#000"/><rect x="523" y="409" width="1" height="1" fill="#000"/><rect x="536" y="409" width="1" height="1" fill="#000"/><rect x="549" y="409" width="1" height="1" fill="#000"/><rect x="562" y="409" width="1" height="1" fill="#000"/><rect x="575" y="409" width="1" height="1" fill="#000"/><rect x="588" y="409" width="1" height="1" fill="#000"/><rect x="601" y="409" width="1" height="1" fill="#000"/><rect x="614" y="409" width="1" height="1" fill="#000"/><rect x="627" y="409" width="1" height="1" fill="#000"/><rect x="640" y="409" width="1" height="1" fill="#000"/><rect x="653" y="409" width="1" height="1" fill="#000"/><rect x="666" y="409" width="1" height="1" fill="#000"/><rect x="679" y="409" width="1" height="1" fill="#000"/><rect x="692" y="409" width="1" height="1" fill="#000"/><rect x="705" y="409" width="1" height="1" fill="#000"/><rect x="718" y="409" width="1" height="1" fill="#000"/><rect x="731" y="409" width="1" height="1" fill="#000"/><rect x="744" y="409" width="1" height="1" fill="#000"/><rect x="757" y="409" width="1" height="1" fill="#000"/><rect x="770" y="409" width="1" height="1" fill="#000"/><rect x="783" y="409" width="1" height="1" fill="#000"/><rect x="796" y="409" width="1" height="1" fill="#000"/><rect x="809" y="409" width="1" height="1" fill="#000"/><rect x="822" y="409" width="1" height="1" fill="#000"/><rect x="835" y="409" width="1" height="1" fill="#000"/><rect x="848" y="409" width="1" height="1" fill="#000"/><rect x="861" y="409" width="1" height="1" fill="#000"/><rect x="874" y="409" width="1" height="1" fill="#000"/><rect x="887" y="409" width="1" height="1" fill="#000"/><rect x="900" y="409" width="1" height="1" fill="#000"/><rect x="913" y="409" width="1" height="1" fill="#000"/><rect x="926" y="409" width="1" height="1" fill="#000"/><rect x="939" y="409" width="1" height="1" fill="#000"/><rect x="952" y="409" width="1" height="1" fill="#000"/><rect x="965" y="409" width="1" height="1" fill="#000"/><rect x="978" y="409" width="1" height="1" fill="#000"/><rect x="991" y="409" width="1" height="1" fill="#000"/><rect x="1004" y="409" width="1" height="1" fill="#000"/><rect x="1017" y="409" width="1" height="1" fill="#000"/><rect x="1030" y="409" width="1" height="1" fill="#000"/><rect x="1043" y="409" width="1" height="1" fill="#000"/><rect x="1056" y="409" width="1" height="1" fill="#000"/><rect x="1069" y="409" width="1" height="1" fill="#000"/><rect x="1082" y="409" width="1" height="1" fill="#000"/><rect x="1095" y="409" width="1" height="1" fill="#000"/><rect x="1108" y="409" width="1" height="1" fill="#000"/><rect x="1121" y="409" width="1" height="1" fill="#000"/><rect x="1134" y="409" width="1" height="1" fill="#000"/><rect x="1147" y="409" width="1" height="1" fill="#000"/><rect x="1160" y="409" width="1" height="1" fill="#000"/><rect x="1173" y="409" width="1" height="1" fill="#000"/><rect x="29" y="435" width="1" height="1" fill="#000"/><rect x="94" y="435" width="1" height="1" fill="#000"/><rect x="146" y="435" width="1" height="1" fill="#000"/><rect x="198" y="435" width="1" height="1" fill="#000"/><rect x="263" y="435" width="1" height="1" fill="#000"/><rect x="328" y="435" width="1" height="1" fill="#000"/><rect x="380" y="435" width="1" height="1" fill="#000"/><rect x="445" y="435" width="1" height="1" fill="#000"/><rect x="510" y="435" width="1" height="1" fill="#000"/><rect x="575" y="435" width="1" height="1" fill="#000"/><rect x="627" y="435" width="1" height="1" fill="#000"/><rect x="692" y="435" width="1" height="1" fill="#000"/><rect x="757" y="435" width="1" height="1" fill="#000"/><rect x="822" y="435" width="1" height="1" fill="#000"/><rect x="887" y="435" width="1" height="1" fill="#000"/><rect x="952" y="435" width="1" height="1" fill="#000"/><rect x="1017" y="435" width="1" height="1" fill="#000"/><rect x="1082" y="435" width="1" height="1" fill="#000"/><rect x="1147" y="435" width="1" height="1" fill="#000"/><rect x="29" y="461" width="1" height="1" fill="#000"/><rect x="42" y="461" width="1" height="1" fill="#000"/><rect x="55" y="461" width="1" height="1" fill="#000"/><rect x="68" y="461" width="1" height="1" fill="#000"/><rect x="81" y="461" width="1" height="1" fill="#000"/><rect x="94" y="461" width="1" height="1" fill="#000"/><rect x="107" y="461" width="1" height="1" fill="#000"/><rect x="120" y="461" width="1" height="1" fill="#000"/><rect x="133" y="461" width="1" height="1" fill="#000"/><rect x="146" y="461" width="1" height="1" fill="#000"/><rect x="159" y="461" width="1" height="1" fill="#000"/><rect x="172" y="461" width="1" height="1" fill="#000"/><rect x="185" y="461" width="1" height="1" fill="#000"/><rect x="198" y="461" width="1" height="1" fill="#000"/><rect x="211" y="461" width="1" height="1" fill="#000"/><rect x="224" y="461" width="1" height="1" fill="#000"/><rect x="237" y="461" width="1" height="1" fill="#000"/><rect x="250" y="461" width="1" height="1" fill="#000"/><rect x="263" y="461" width="1" height="1" fill="#000"/><rect x="276" y="461" width="1" height="1" fill="#000"/><rect x="289" y="461" width="1" height="1" fill="#000"/><rect x="302" y="461" width="1" height="1" fill="#000"/><rect x="315" y="461" width="1" height="1" fill="#000"/><rect x="328" y="461" width="1" height="1" fill="#000"/><rect x="341" y="461" width="1" height="1" fill="#000"/><rect x="354" y="461" width="1" height="1" fill="#000"/><rect x="367" y="461" width="1" height="1" fill="#000"/><rect x="380" y="461" width="1" height="1" fill="#000"/><rect x="393" y="461" width="1" height="1" fill="#000"/><rect x="406" y="461" width="1" height="1" fill="#000"/><rect x="419" y="461" width="1" height="1" fill="#000"/><rect x="432" y="461" width="1" height="1" fill="#000"/><rect x="445" y="461" width="1" height="1" fill="#000"/><rect x="458" y="461" width="1" height="1" fill="#000"/><rect x="471" y="461" width="1" height="1" fill="#000"/><rect x="484" y="461" width="1" height="1" fill="#000"/><rect x="497" y="461" width="1" height="1" fill="#000"/><rect x="510" y="461" width="1" height="1" fill="#000"/><rect x="523" y="461" width="1" height="1" fill="#000"/><rect x="536" y="461" width="1" height="1" fill="#000"/><rect x="549" y="461" width="1" height="1" fill="#000"/><rect x="562" y="461" width="1" height="1" fill="#000"/><rect x="575" y="461" width="1" height="1" fill="#000"/><rect x="588" y="461" width="1" height="1" fill="#000"/><rect x="601" y="461" width="1" height="1" fill="#000"/><rect x="614" y="461" width="1" height="1" fill="#000"/><rect x="627" y="461" width="1" height="1" fill="#000"/><rect x="640" y="461" width="1" height="1" fill="#000"/><rect x="653" y="461" width="1" height="1" fill="#000"/><rect x="666" y="461" width="1" height="1" fill="#000"/><rect x="679" y="461" width="1" height="1" fill="#000"/><rect x="692" y="461" width="1" height="1" fill="#000"/><rect x="705" y="461" width="1" height="1" fill="#000"/><rect x="718" y="461" width="1" height="1" fill="#000"/><rect x="731" y="461" width="1" height="1" fill="#000"/><rect x="744" y="461" width="1" height="1" fill="#000"/><rect x="757" y="461" width="1" height="1" fill="#000"/><rect x="770" y="461" width="1" height="1" fill="#000"/><rect x="783" y="461" width="1" height="1" fill="#000"/><rect x="796" y="461" width="1" height="1" fill="#000"/><rect x="809" y="461" width="1" height="1" fill="#000"/><rect x="822" y="461" width="1" height="1" fill="#000"/><rect x="835" y="461" width="1" height="1" fill="#000"/><rect x="848" y="461" width="1" height="1" fill="#000"/><rect x="861" y="461" width="1" height="1" fill="#000"/><rect x="874" y="461" width="1" height="1" fill="#000"/><rect x="887" y="461" width="1" height="1" fill="#000"/><rect x="900" y="461" width="1" height="1" fill="#000"/><rect x="913" y="461" width="1" height="1" fill="#000"/><rect x="926" y="461" width="1" height="1" fill="#000"/><rect x="939" y="461" width="1" height="1" fill="#000"/><rect x="952" y="461" width="1" height="1" fill="#000"/><rect x="965" y="461" width="1" height="1" fill="#000"/><rect x="978" y="461" width="1" height="1" fill="#000"/><rect x="991" y="461" width="1" height="1" fill="#000"/><rect x="1004" y="461" width="1" height="1" fill="#000"/><rect x="1017" y="461" width="1" height="1" fill="#000"/><rect x="1030" y="461" width="1" height="1" fill="#000"/><rect x="1043" y="461" width="1" height="1" fill="#000"/><rect x="1056" y="461" width="1" height="1" fill="#000"/><rect x="1069" y="461" width="1" height="1" fill="#000"/><rect x="1082" y="461" width="1" height="1" fill="#000"/><rect x="1095" y="461" width="1" height="1" fill="#000"/><rect x="1108" y="461" width="1" height="1" fill="#000"/><rect x="1121" y="461" width="1" height="1" fill="#000"/><rect x="1134" y="461" width="1" height="1" fill="#000"/><rect x="1147" y="461" width="1" height="1" fill="#000"/><rect x="1160" y="461" width="1" height="1" fill="#000"/><rect x="1173" y="461" width="1" height="1" fill="#000"/><rect x="29" y="487" width="1" height="1" fill="#000"/><rect x="94" y="487" width="1" height="1" fill="#000"/><rect x="146" y="487" width="1" height="1" fill="#000"/><rect x="198" y="487" width="1" height="1" fill="#000"/><rect x="263" y="487" width="1" height="1" fill="#000"/><rect x="328" y="487" width="1" height="1" fill="#000"/><rect x="380" y="487" width="1" height="1" fill="#000"/><rect x="445" y="487" width="1" height="1" fill="#000"/><rect x="510" y="487" width="1" height="1" fill="#000"/><rect x="575" y="487" width="1" height="1" fill="#000"/><rect x="627" y="487" width="1" height="1" fill="#000"/><rect x="692" y="487" width="1" height="1" fill="#000"/><rect x="757" y="487" width="1" height="1" fill="#000"/><rect x="822" y="487" width="1" height="1" fill="#000"/><rect x="887" y="487" width="1" height="1" fill="#000"/><rect x="952" y="487" width="1" height="1" fill="#000"/><rect x="1017" y="487" width="1" height="1" fill="#000"/><rect x="1082" y="487" width="1" height="1" fill="#000"/><rect x="1147" y="487" width="1" height="1" fill="#000"/><rect x="29" y="513" width="1" height="1" fill="#000"/><rect x="42" y="513" width="1" height="1" fill="#000"/><rect x="55" y="513" width="1" height="1" fill="#000"/><rect x="68" y="513" width="1" height="1" fill="#000"/><rect x="81" y="513" width="1" height="1" fill="#000"/><rect x="94" y="513" width="1" height="1" fill="#000"/><rect x="107" y="513" width="1" height="1" fill="#000"/><rect x="120" y="513" width="1" height="1" fill="#000"/><rect x="133" y="513" width="1" height="1" fill="#000"/><rect x="146" y="513" width="1" height="1" fill="#000"/><rect x="159" y="513" width="1" height="1" fill="#000"/><rect x="172" y="513" width="1" height="1" fill="#000"/><rect x="185" y="513" width="1" height="1" fill="#000"/><rect x="198" y="513" width="1" height="1" fill="#000"/><rect x="211" y="513" width="1" height="1" fill="#000"/><rect x="224" y="513" width="1" height="1" fill="#000"/><rect x="237" y="513" width="1" height="1" fill="#000"/><rect x="250" y="513" width="1" height="1" fill="#000"/><rect x="263" y="513" width="1" height="1" fill="#000"/><rect x="276" y="513" width="1" height="1" fill="#000"/><rect x="289" y="513" width="1" height="1" fill="#000"/><rect x="302" y="513" width="1" height="1" fill="#000"/><rect x="315" y="513" width="1" height="1" fill="#000"/><rect x="328" y="513" width="1" height="1" fill="#000"/><rect x="341" y="513" width="1" height="1" fill="#000"/><rect x="354" y="513" width="1" height="1" fill="#000"/><rect x="367" y="513" width="1" height="1" fill="#000"/><rect x="380" y="513" width="1" height="1" fill="#000"/><rect x="393" y="513" width="1" height="1" fill="#000"/><rect x="406" y="513" width="1" height="1" fill="#000"/><rect x="419" y="513" width="1" height="1" fill="#000"/><rect x="432" y="513" width="1" height="1" fill="#000"/><rect x="445" y="513" width="1" height="1" fill="#000"/><rect x="458" y="513" width="1" height="1" fill="#000"/><rect x="471" y="513" width="1" height="1" fill="#000"/><rect x="484" y="513" width="1" height="1" fill="#000"/><rect x="497" y="513" width="1" height="1" fill="#000"/><rect x="510" y="513" width="1" height="1" fill="#000"/><rect x="523" y="513" width="1" height="1" fill="#000"/><rect x="536" y="513" width="1" height="1" fill="#000"/><rect x="549" y="513" width="1" height="1" fill="#000"/><rect x="562" y="513" width="1" height="1" fill="#000"/><rect x="575" y="513" width="1" height="1" fill="#000"/><rect x="588" y="513" width="1" height="1" fill="#000"/><rect x="601" y="513" width="1" height="1" fill="#000"/><rect x="614" y="513" width="1" height="1" fill="#000"/><rect x="627" y="513" width="1" height="1" fill="#000"/><rect x="640" y="513" width="1" height="1" fill="#000"/><rect x="653" y="513" width="1" height="1" fill="#000"/><rect x="666" y="513" width="1" height="1" fill="#000"/><rect x="679" y="513" width="1" height="1" fill="#000"/><rect x="692" y="513" width="1" height="1" fill="#000"/><rect x="705" y="513" width="1" height="1" fill="#000"/><rect x="718" y="513" width="1" height="1" fill="#000"/><rect x="731" y="513" width="1" height="1" fill="#000"/><rect x="744" y="513" width="1" height="1" fill="#000"/><rect x="757" y="513" width="1" height="1" fill="#000"/><rect x="770" y="513" width="1" height="1" fill="#000"/><rect x="783" y="513" width="1" height="1" fill="#000"/><rect x="796" y="513" width="1" height="1" fill="#000"/><rect x="809" y="513" width="1" height="1" fill="#000"/><rect x="822" y="513" width="1" height="1" fill="#000"/><rect x="835" y="513" width="1" height="1" fill="#000"/><rect x="848" y="513" width="1" height="1" fill="#000"/><rect x="861" y="513" width="1" height="1" fill="#000"/><rect x="874" y="513" width="1" height="1" fill="#000"/><rect x="887" y="513" width="1" height="1" fill="#000"/><rect x="900" y="513" width="1" height="1" fill="#000"/><rect x="913" y="513" width="1" height="1" fill="#000"/><rect x="926" y="513" width="1" height="1" fill="#000"/><rect x="939" y="513" width="1" height="1" fill="#000"/><rect x="952" y="513" width="1" height="1" fill="#000"/><rect x="965" y="513" width="1" height="1" fill="#000"/><rect x="978" y="513" width="1" height="1" fill="#000"/><rect x="991" y="513" width="1" height="1" fill="#000"/><rect x="1004" y="513" width="1" height="1" fill="#000"/><rect x="1017" y="513" width="1" height="1" fill="#000"/><rect x="1030" y="513" width="1" height="1" fill="#000"/><rect x="1043" y="513" width="1" height="1" fill="#000"/><rect x="1056" y="513" width="1" height="1" fill="#000"/><rect x="1069" y="513" width="1" height="1" fill="#000"/><rect x="1082" y="513" width="1" height="1" fill="#000"/><rect x="1095" y="513" width="1" height="1" fill="#000"/><rect x="1108" y="513" width="1" height="1" fill="#000"/><rect x="1121" y="513" width="1" height="1" fill="#000"/><rect x="1134" y="513" width="1" height="1" fill="#000"/><rect x="1147" y="513" width="1" height="1" fill="#000"/><rect x="1160" y="513" width="1" height="1" fill="#000"/><rect x="1173" y="513" width="1" height="1" fill="#000"/><rect x="29" y="539" width="1" height="1" fill="#000"/><rect x="94" y="539" width="1" height="1" fill="#000"/><rect x="146" y="539" width="1" height="1" fill="#000"/><rect x="198" y="539" width="1" height="1" fill="#000"/><rect x="263" y="539" width="1" height="1" fill="#000"/><rect x="328" y="539" width="1" height="1" fill="#000"/><rect x="380" y="539" width="1" height="1" fill="#000"/><rect x="445" y="539" width="1" height="1" fill="#000"/><rect x="510" y="539" width="1" height="1" fill="#000"/><rect x="575" y="539" width="1" height="1" fill="#000"/><rect x="627" y="539" width="1" height="1" fill="#000"/><rect x="692" y="539" width="1" height="1" fill="#000"/><rect x="757" y="539" width="1" height="1" fill="#000"/><rect x="822" y="539" width="1" height="1" fill="#000"/><rect x="887" y="539" width="1" height="1" fill="#000"/><rect x="952" y="539" width="1" height="1" fill="#000"/><rect x="1017" y="539" width="1" height="1" fill="#000"/><rect x="1082" y="539" width="1" height="1" fill="#000"/><rect x="1147" y="539" width="1" height="1" fill="#000"/><rect x="29" y="565" width="1" height="1" fill="#000"/><rect x="42" y="565" width="1" height="1" fill="#000"/><rect x="55" y="565" width="1" height="1" fill="#000"/><rect x="68" y="565" width="1" height="1" fill="#000"/><rect x="81" y="565" width="1" height="1" fill="#000"/><rect x="94" y="565" width="1" height="1" fill="#000"/><rect x="107" y="565" width="1" height="1" fill="#000"/><rect x="120" y="565" width="1" height="1" fill="#000"/><rect x="133" y="565" width="1" height="1" fill="#000"/><rect x="146" y="565" width="1" height="1" fill="#000"/><rect x="159" y="565" width="1" height="1" fill="#000"/><rect x="172" y="565" width="1" height="1" fill="#000"/><rect x="185" y="565" width="1" height="1" fill="#000"/><rect x="198" y="565" width="1" height="1" fill="#000"/><rect x="211" y="565" width="1" height="1" fill="#000"/><rect x="224" y="565" width="1" height="1" fill="#000"/><rect x="237" y="565" width="1" height="1" fill="#000"/><rect x="250" y="565" width="1" height="1" fill="#000"/><rect x="263" y="565" width="1" height="1" fill="#000"/><rect x="276" y="565" width="1" height="1" fill="#000"/><rect x="289" y="565" width="1" height="1" fill="#000"/><rect x="302" y="565" width="1" height="1" fill="#000"/><rect x="315" y="565" width="1" height="1" fill="#000"/><rect x="328" y="565" width="1" height="1" fill="#000"/><rect x="341" y="565" width="1" height="1" fill="#000"/><rect x="354" y="565" width="1" height="1" fill="#000"/><rect x="367" y="565" width="1" height="1" fill="#000"/><rect x="380" y="565" width="1" height="1" fill="#000"/><rect x="393" y="565" width="1" height="1" fill="#000"/><rect x="406" y="565" width="1" height="1" fill="#000"/><rect x="419" y="565" width="1" height="1" fill="#000"/><rect x="432" y="565" width="1" height="1" fill="#000"/><rect x="445" y="565" width="1" height="1" fill="#000"/><rect x="458" y="565" width="1" height="1" fill="#000"/><rect x="471" y="565" width="1" height="1" fill="#000"/><rect x="484" y="565" width="1" height="1" fill="#000"/><rect x="497" y="565" width="1" height="1" fill="#000"/><rect x="510" y="565" width="1" height="1" fill="#000"/><rect x="523" y="565" width="1" height="1" fill="#000"/><rect x="536" y="565" width="1" height="1" fill="#000"/><rect x="549" y="565" width="1" height="1" fill="#000"/><rect x="562" y="565" width="1" height="1" fill="#000"/><rect x="575" y="565" width="1" height="1" fill="#000"/><rect x="588" y="565" width="1" height="1" fill="#000"/><rect x="601" y="565" width="1" height="1" fill="#000"/><rect x="614" y="565" width="1" height="1" fill="#000"/><rect x="627" y="565" width="1" height="1" fill="#000"/><rect x="640" y="565" width="1" height="1" fill="#000"/><rect x="653" y="565" width="1" height="1" fill="#000"/><rect x="666" y="565" width="1" height="1" fill="#000"/><rect x="679" y="565" width="1" height="1" fill="#000"/><rect x="692" y="565" width="1" height="1" fill="#000"/><rect x="705" y="565" width="1" height="1" fill="#000"/><rect x="718" y="565" width="1" height="1" fill="#000"/><rect x="731" y="565" width="1" height="1" fill="#000"/><rect x="744" y="565" width="1" height="1" fill="#000"/><rect x="757" y="565" width="1" height="1" fill="#000"/><rect x="770" y="565" width="1" height="1" fill="#000"/><rect x="783" y="565" width="1" height="1" fill="#000"/><rect x="796" y="565" width="1" height="1" fill="#000"/><rect x="809" y="565" width="1" height="1" fill="#000"/><rect x="822" y="565" width="1" height="1" fill="#000"/><rect x="835" y="565" width="1" height="1" fill="#000"/><rect x="848" y="565" width="1" height="1" fill="#000"/><rect x="861" y="565" width="1" height="1" fill="#000"/><rect x="874" y="565" width="1" height="1" fill="#000"/><rect x="887" y="565" width="1" height="1" fill="#000"/><rect x="900" y="565" width="1" height="1" fill="#000"/><rect x="913" y="565" width="1" height="1" fill="#000"/><rect x="926" y="565" width="1" height="1" fill="#000"/><rect x="939" y="565" width="1" height="1" fill="#000"/><rect x="952" y="565" width="1" height="1" fill="#000"/><rect x="965" y="565" width="1" height="1" fill="#000"/><rect x="978" y="565" width="1" height="1" fill="#000"/><rect x="991" y="565" width="1" height="1" fill="#000"/><rect x="1004" y="565" width="1" height="1" fill="#000"/><rect x="1017" y="565" width="1" height="1" fill="#000"/><rect x="1030" y="565" width="1" height="1" fill="#000"/><rect x="1043" y="565" width="1" height="1" fill="#000"/><rect x="1056" y="565" width="1" height="1" fill="#000"/><rect x="1069" y="565" width="1" height="1" fill="#000"/><rect x="1082" y="565" width="1" height="1" fill="#000"/><rect x="1095" y="565" width="1" height="1" fill="#000"/><rect x="1108" y="565" width="1" height="1" fill="#000"/><rect x="1121" y="565" width="1" height="1" fill="#000"/><rect x="1134" y="565" width="1" height="1" fill="#000"/><rect x="1147" y="565" width="1" height="1" fill="#000"/><rect x="1160" y="565" width="1" height="1" fill="#000"/><rect x="1173" y="565" width="1" height="1" fill="#000"/><rect x="29" y="591" width="1" height="1" fill="#000"/><rect x="94" y="591" width="1" height="1" fill="#000"/><rect x="146" y="591" width="1" height="1" fill="#000"/><rect x="198" y="591" width="1" height="1" fill="#000"/><rect x="263" y="591" width="1" height="1" fill="#000"/><rect x="328" y="591" width="1" height="1" fill="#000"/><rect x="380" y="591" width="1" height="1" fill="#000"/><rect x="445" y="591" width="1" height="1" fill="#000"/><rect x="510" y="591" width="1" height="1" fill="#000"/><rect x="575" y="591" width="1" height="1" fill="#000"/><rect x="627" y="591" width="1" height="1" fill="#000"/><rect x="692" y="591" width="1" height="1" fill="#000"/><rect x="757" y="591" width="1" height="1" fill="#000"/><rect x="822" y="591" width="1" height="1" fill="#000"/><rect x="887" y="591" width="1" height="1" fill="#000"/><rect x="952" y="591" width="1" height="1" fill="#000"/><rect x="1017" y="591" width="1" height="1" fill="#000"/><rect x="1082" y="591" width="1" height="1" fill="#000"/><rect x="1147" y="591" width="1" height="1" fill="#000"/><rect x="29" y="617" width="1" height="1" fill="#000"/><rect x="42" y="617" width="1" height="1" fill="#000"/><rect x="55" y="617" width="1" height="1" fill="#000"/><rect x="68" y="617" width="1" height="1" fill="#000"/><rect x="81" y="617" width="1" height="1" fill="#000"/><rect x="94" y="617" width="1" height="1" fill="#000"/><rect x="107" y="617" width="1" height="1" fill="#000"/><rect x="120" y="617" width="1" height="1" fill="#000"/><rect x="133" y="617" width="1" height="1" fill="#000"/><rect x="146" y="617" width="1" height="1" fill="#000"/><rect x="159" y="617" width="1" height="1" fill="#000"/><rect x="172" y="617" width="1" height="1" fill="#000"/><rect x="185" y="617" width="1" height="1" fill="#000"/><rect x="198" y="617" width="1" height="1" fill="#000"/><rect x="211" y="617" width="1" height="1" fill="#000"/><rect x="224" y="617" width="1" height="1" fill="#000"/><rect x="237" y="617" width="1" height="1" fill="#000"/><rect x="250" y="617" width="1" height="1" fill="#000"/><rect x="263" y="617" width="1" height="1" fill="#000"/><rect x="276" y="617" width="1" height="1" fill="#000"/><rect x="289" y="617" width="1" height="1" fill="#000"/><rect x="302" y="617" width="1" height="1" fill="#000"/><rect x="315" y="617" width="1" height="1" fill="#000"/><rect x="328" y="617" width="1" height="1" fill="#000"/><rect x="341" y="617" width="1" height="1" fill="#000"/><rect x="354" y="617" width="1" height="1" fill="#000"/><rect x="367" y="617" width="1" height="1" fill="#000"/><rect x="380" y="617" width="1" height="1" fill="#000"/><rect x="393" y="617" width="1" height="1" fill="#000"/><rect x="406" y="617" width="1" height="1" fill="#000"/><rect x="419" y="617" width="1" height="1" fill="#000"/><rect x="432" y="617" width="1" height="1" fill="#000"/><rect x="445" y="617" width="1" height="1" fill="#000"/><rect x="458" y="617" width="1" height="1" fill="#000"/><rect x="471" y="617" width="1" height="1" fill="#000"/><rect x="484" y="617" width="1" height="1" fill="#000"/><rect x="497" y="617" width="1" height="1" fill="#000"/><rect x="510" y="617" width="1" height="1" fill="#000"/><rect x="523" y="617" width="1" height="1" fill="#000"/><rect x="536" y="617" width="1" height="1" fill="#000"/><rect x="549" y="617" width="1" height="1" fill="#000"/><rect x="562" y="617" width="1" height="1" fill="#000"/><rect x="575" y="617" width="1" height="1" fill="#000"/><rect x="588" y="617" width="1" height="1" fill="#000"/><rect x="601" y="617" width="1" height="1" fill="#000"/><rect x="614" y="617" width="1" height="1" fill="#000"/><rect x="627" y="617" width="1" height="1" fill="#000"/><rect x="640" y="617" width="1" height="1" fill="#000"/><rect x="653" y="617" width="1" height="1" fill="#000"/><rect x="666" y="617" width="1" height="1" fill="#000"/><rect x="679" y="617" width="1" height="1" fill="#000"/><rect x="692" y="617" width="1" height="1" fill="#000"/><rect x="705" y="617" width="1" height="1" fill="#000"/><rect x="718" y="617" width="1" height="1" fill="#000"/><rect x="731" y="617" width="1" height="1" fill="#000"/><rect x="744" y="617" width="1" height="1" fill="#000"/><rect x="757" y="617" width="1" height="1" fill="#000"/><rect x="770" y="617" width="1" height="1" fill="#000"/><rect x="783" y="617" width="1" height="1" fill="#000"/><rect x="796" y="617" width="1" height="1" fill="#000"/><rect x="809" y="617" width="1" height="1" fill="#000"/><rect x="822" y="617" width="1" height="1" fill="#000"/><rect x="835" y="617" width="1" height="1" fill="#000"/><rect x="848" y="617" width="1" height="1" fill="#000"/><rect x="861" y="617" width="1" height="1" fill="#000"/><rect x="874" y="617" width="1" height="1" fill="#000"/><rect x="887" y="617" width="1" height="1" fill="#000"/><rect x="900" y="617" width="1" height="1" fill="#000"/><rect x="913" y="617" width="1" height="1" fill="#000"/><rect x="926" y="617" width="1" height="1" fill="#000"/><rect x="939" y="617" width="1" height="1" fill="#000"/><rect x="952" y="617" width="1" height="1" fill="#000"/><rect x="965" y="617" width="1" height="1" fill="#000"/><rect x="978" y="617" width="1" height="1" fill="#000"/><rect x="991" y="617" width="1" height="1" fill="#000"/><rect x="1004" y="617" width="1" height="1" fill="#000"/><rect x="1017" y="617" width="1" height="1" fill="#000"/><rect x="1030" y="617" width="1" height="1" fill="#000"/><rect x="1043" y="617" width="1" height="1" fill="#000"/><rect x="1056" y="617" width="1" height="1" fill="#000"/><rect x="1069" y="617" width="1" height="1" fill="#000"/><rect x="1082" y="617" width="1" height="1" fill="#000"/><rect x="1095" y="617" width="1" height="1" fill="#000"/><rect x="1108" y="617" width="1" height="1" fill="#000"/><rect x="1121" y="617" width="1" height="1" fill="#000"/><rect x="1134" y="617" width="1" height="1" fill="#000"/><rect x="1147" y="617" width="1" height="1" fill="#000"/><rect x="1160" y="617" width="1" height="1" fill="#000"/><rect x="1173" y="617" width="1" height="1" fill="#000"/><rect x="29" y="643" width="1" height="1" fill="#000"/><rect x="94" y="643" width="1" height="1" fill="#000"/><rect x="146" y="643" width="1" height="1" fill="#000"/><rect x="198" y="643" width="1" height="1" fill="#000"/><rect x="263" y="643" width="1" height="1" fill="#000"/><rect x="328" y="643" width="1" height="1" fill="#000"/><rect x="380" y="643" width="1" height="1" fill="#000"/><rect x="445" y="643" width="1" height="1" fill="#000"/><rect x="510" y="643" width="1" height="1" fill="#000"/><rect x="575" y="643" width="1" height="1" fill="#000"/><rect x="627" y="643" width="1" height="1" fill="#000"/><rect x="692" y="643" width="1" height="1" fill="#000"/><rect x="757" y="643" width="1" height="1" fill="#000"/><rect x="822" y="643" width="1" height="1" fill="#000"/><rect x="887" y="643" width="1" height="1" fill="#000"/><rect x="952" y="643" width="1" height="1" fill="#000"/><rect x="1017" y="643" width="1" height="1" fill="#000"/><rect x="1082" y="643" width="1" height="1" fill="#000"/><rect x="1147" y="643" width="1" height="1" fill="#000"/><rect x="29" y="669" width="1" height="1" fill="#000"/><rect x="42" y="669" width="1" height="1" fill="#000"/><rect x="55" y="669" width="1" height="1" fill="#000"/><rect x="68" y="669" width="1" height="1" fill="#000"/><rect x="81" y="669" width="1" height="1" fill="#000"/><rect x="94" y="669" width="1" height="1" fill="#000"/><rect x="107" y="669" width="1" height="1" fill="#000"/><rect x="120" y="669" width="1" height="1" fill="#000"/><rect x="133" y="669" width="1" height="1" fill="#000"/><rect x="146" y="669" width="1" height="1" fill="#000"/><rect x="159" y="669" width="1" height="1" fill="#000"/><rect x="172" y="669" width="1" height="1" fill="#000"/><rect x="185" y="669" width="1" height="1" fill="#000"/><rect x="198" y="669" width="1" height="1" fill="#000"/><rect x="211" y="669" width="1" height="1" fill="#000"/><rect x="224" y="669" width="1" height="1" fill="#000"/><rect x="237" y="669" width="1" height="1" fill="#000"/><rect x="250" y="669" width="1" height="1" fill="#000"/><rect x="263" y="669" width="1" height="1" fill="#000"/><rect x="276" y="669" width="1" height="1" fill="#000"/><rect x="289" y="669" width="1" height="1" fill="#000"/><rect x="302" y="669" width="1" height="1" fill="#000"/><rect x="315" y="669" width="1" height="1" fill="#000"/><rect x="328" y="669" width="1" height="1" fill="#000"/><rect x="341" y="669" width="1" height="1" fill="#000"/><rect x="354" y="669" width="1" height="1" fill="#000"/><rect x="367" y="669" width="1" height="1" fill="#000"/><rect x="380" y="669" width="1" height="1" fill="#000"/><rect x="393" y="669" width="1" height="1" fill="#000"/><rect x="406" y="669" width="1" height="1" fill="#000"/><rect x="419" y="669" width="1" height="1" fill="#000"/><rect x="432" y="669" width="1" height="1" fill="#000"/><rect x="445" y="669" width="1" height="1" fill="#000"/><rect x="458" y="669" width="1" height="1" fill="#000"/><rect x="471" y="669" width="1" height="1" fill="#000"/><rect x="484" y="669" width="1" height="1" fill="#000"/><rect x="497" y="669" width="1" height="1" fill="#000"/><rect x="510" y="669" width="1" height="1" fill="#000"/><rect x="523" y="669" width="1" height="1" fill="#000"/><rect x="536" y="669" width="1" height="1" fill="#000"/><rect x="549" y="669" width="1" height="1" fill="#000"/><rect x="562" y="669" width="1" height="1" fill="#000"/><rect x="575" y="669" width="1" height="1" fill="#000"/><rect x="588" y="669" width="1" height="1" fill="#000"/><rect x="601" y="669" width="1" height="1" fill="#000"/><rect x="614" y="669" width="1" height="1" fill="#000"/><rect x="627" y="669" width="1" height="1" fill="#000"/><rect x="640" y="669" width="1" height="1" fill="#000"/><rect x="653" y="669" width="1" height="1" fill="#000"/><rect x="666" y="669" width="1" height="1" fill="#000"/><rect x="679" y="669" width="1" height="1" fill="#000"/><rect x="692" y="669" width="1" height="1" fill="#000"/><rect x="705" y="669" width="1" height="1" fill="#000"/><rect x="718" y="669" width="1" height="1" fill="#000"/><rect x="731" y="669" width="1" height="1" fill="#000"/><rect x="744" y="669" width="1" height="1" fill="#000"/><rect x="757" y="669" width="1" height="1" fill="#000"/><rect x="770" y="669" width="1" height="1" fill="#000"/><rect x="783" y="669" width="1" height="1" fill="#000"/><rect x="796" y="669" width="1" height="1" fill="#000"/><rect x="809" y="669" width="1" height="1" fill="#000"/><rect x="822" y="669" width="1" height="1" fill="#000"/><rect x="835" y="669" width="1" height="1" fill="#000"/><rect x="848" y="669" width="1" height="1" fill="#000"/><rect x="861" y="669" width="1" height="1" fill="#000"/><rect x="874" y="669" width="1" height="1" fill="#000"/><rect x="887" y="669" width="1" height="1" fill="#000"/><rect x="900" y="669" width="1" height="1" fill="#000"/><rect x="913" y="669" width="1" height="1" fill="#000"/><rect x="926" y="669" width="1" height="1" fill="#000"/><rect x="939" y="669" width="1" height="1" fill="#000"/><rect x="952" y="669" width="1" height="1" fill="#000"/><rect x="965" y="669" width="1" height="1" fill="#000"/><rect x="978" y="669" width="1" height="1" fill="#000"/><rect x="991" y="669" width="1" height="1" fill="#000"/><rect x="1004" y="669" width="1" height="1" fill="#000"/><rect x="1017" y="669" width="1" height="1" fill="#000"/><rect x="1030" y="669" width="1" height="1" fill="#000"/><rect x="1043" y="669" width="1" height="1" fill="#000"/><rect x="1056" y="669" width="1" height="1" fill="#000"/><rect x="1069" y="669" width="1" height="1" fill="#000"/><rect x="1082" y="669" width="1" height="1" fill="#000"/><rect x="1095" y="669" width="1" height="1" fill="#000"/><rect x="1108" y="669" width="1" height="1" fill="#000"/><rect x="1121" y="669" width="1" height="1" fill="#000"/><rect x="1134" y="669" width="1" height="1" fill="#000"/><rect x="1147" y="669" width="1" height="1" fill="#000"/><rect x="1160" y="669" width="1" height="1" fill="#000"/><rect x="1173" y="669" width="1" height="1" fill="#000"/><rect x="29" y="695" width="1" height="1" fill="#000"/><rect x="94" y="695" width="1" height="1" fill="#000"/><rect x="146" y="695" width="1" height="1" fill="#000"/><rect x="198" y="695" width="1" height="1" fill="#000"/><rect x="263" y="695" width="1" height="1" fill="#000"/><rect x="328" y="695" width="1" height="1" fill="#000"/><rect x="380" y="695" width="1" height="1" fill="#000"/><rect x="445" y="695" width="1" height="1" fill="#000"/><rect x="510" y="695" width="1" height="1" fill="#000"/><rect x="575" y="695" width="1" height="1" fill="#000"/><rect x="627" y="695" width="1" height="1" fill="#000"/><rect x="692" y="695" width="1" height="1" fill="#000"/><rect x="757" y="695" width="1" height="1" fill="#000"/><rect x="822" y="695" width="1" height="1" fill="#000"/><rect x="887" y="695" width="1" height="1" fill="#000"/><rect x="952" y="695" width="1" height="1" fill="#000"/><rect x="1017" y="695" width="1" height="1" fill="#000"/><rect x="1082" y="695" width="1" height="1" fill="#000"/><rect x="1147" y="695" width="1" height="1" fill="#000"/><rect x="29" y="721" width="1" height="1" fill="#000"/><rect x="42" y="721" width="1" height="1" fill="#000"/><rect x="55" y="721" width="1" height="1" fill="#000"/><rect x="68" y="721" width="1" height="1" fill="#000"/><rect x="81" y="721" width="1" height="1" fill="#000"/><rect x="94" y="721" width="1" height="1" fill="#000"/><rect x="107" y="721" width="1" height="1" fill="#000"/><rect x="120" y="721" width="1" height="1" fill="#000"/><rect x="133" y="721" width="1" height="1" fill="#000"/><rect x="146" y="721" width="1" height="1" fill="#000"/><rect x="159" y="721" width="1" height="1" fill="#000"/><rect x="172" y="721" width="1" height="1" fill="#000"/><rect x="185" y="721" width="1" height="1" fill="#000"/><rect x="198" y="721" width="1" height="1" fill="#000"/><rect x="211" y="721" width="1" height="1" fill="#000"/><rect x="224" y="721" width="1" height="1" fill="#000"/><rect x="237" y="721" width="1" height="1" fill="#000"/><rect x="250" y="721" width="1" height="1" fill="#000"/><rect x="263" y="721" width="1" height="1" fill="#000"/><rect x="276" y="721" width="1" height="1" fill="#000"/><rect x="289" y="721" width="1" height="1" fill="#000"/><rect x="302" y="721" width="1" height="1" fill="#000"/><rect x="315" y="721" width="1" height="1" fill="#000"/><rect x="328" y="721" width="1" height="1" fill="#000"/><rect x="341" y="721" width="1" height="1" fill="#000"/><rect x="354" y="721" width="1" height="1" fill="#000"/><rect x="367" y="721" width="1" height="1" fill="#000"/><rect x="380" y="721" width="1" height="1" fill="#000"/><rect x="393" y="721" width="1" height="1" fill="#000"/><rect x="406" y="721" width="1" height="1" fill="#000"/><rect x="419" y="721" width="1" height="1" fill="#000"/><rect x="432" y="721" width="1" height="1" fill="#000"/><rect x="445" y="721" width="1" height="1" fill="#000"/><rect x="458" y="721" width="1" height="1" fill="#000"/><rect x="471" y="721" width="1" height="1" fill="#000"/><rect x="484" y="721" width="1" height="1" fill="#000"/><rect x="497" y="721" width="1" height="1" fill="#000"/><rect x="510" y="721" width="1" height="1" fill="#000"/><rect x="523" y="721" width="1" height="1" fill="#000"/><rect x="536" y="721" width="1" height="1" fill="#000"/><rect x="549" y="721" width="1" height="1" fill="#000"/><rect x="562" y="721" width="1" height="1" fill="#000"/><rect x="575" y="721" width="1" height="1" fill="#000"/><rect x="588" y="721" width="1" height="1" fill="#000"/><rect x="601" y="721" width="1" height="1" fill="#000"/><rect x="614" y="721" width="1" height="1" fill="#000"/><rect x="627" y="721" width="1" height="1" fill="#000"/><rect x="640" y="721" width="1" height="1" fill="#000"/><rect x="653" y="721" width="1" height="1" fill="#000"/><rect x="666" y="721" width="1" height="1" fill="#000"/><rect x="679" y="721" width="1" height="1" fill="#000"/><rect x="692" y="721" width="1" height="1" fill="#000"/><rect x="705" y="721" width="1" height="1" fill="#000"/><rect x="718" y="721" width="1" height="1" fill="#000"/><rect x="731" y="721" width="1" height="1" fill="#000"/><rect x="744" y="721" width="1" height="1" fill="#000"/><rect x="757" y="721" width="1" height="1" fill="#000"/><rect x="770" y="721" width="1" height="1" fill="#000"/><rect x="783" y="721" width="1" height="1" fill="#000"/><rect x="796" y="721" width="1" height="1" fill="#000"/><rect x="809" y="721" width="1" height="1" fill="#000"/><rect x="822" y="721" width="1" height="1" fill="#000"/><rect x="835" y="721" width="1" height="1" fill="#000"/><rect x="848" y="721" width="1" height="1" fill="#000"/><rect x="861" y="721" width="1" height="1" fill="#000"/><rect x="874" y="721" width="1" height="1" fill="#000"/><rect x="887" y="721" width="1" height="1" fill="#000"/><rect x="900" y="721" width="1" height="1" fill="#000"/><rect x="913" y="721" width="1" height="1" fill="#000"/><rect x="926" y="721" width="1" height="1" fill="#000"/><rect x="939" y="721" width="1" height="1" fill="#000"/><rect x="952" y="721" width="1" height="1" fill="#000"/><rect x="965" y="721" width="1" height="1" fill="#000"/><rect x="978" y="721" width="1" height="1" fill="#000"/><rect x="991" y="721" width="1" height="1" fill="#000"/><rect x="1004" y="721" width="1" height="1" fill="#000"/><rect x="1017" y="721" width="1" height="1" fill="#000"/><rect x="1030" y="721" width="1" height="1" fill="#000"/><rect x="1043" y="721" width="1" height="1" fill="#000"/><rect x="1056" y="721" width="1" height="1" fill="#000"/><rect x="1069" y="721" width="1" height="1" fill="#000"/><rect x="1082" y="721" width="1" height="1" fill="#000"/><rect x="1095" y="721" width="1" height="1" fill="#000"/><rect x="1108" y="721" width="1" height="1" fill="#000"/><rect x="1121" y="721" width="1" height="1" fill="#000"/><rect x="1134" y="721" width="1" height="1" fill="#000"/><rect x="1147" y="721" width="1" height="1" fill="#000"/><rect x="1160" y="721" width="1" height="1" fill="#000"/><rect x="1173" y="721" width="1" height="1" fill="#000"/><rect x="29" y="746" width="1" height="1" fill="#000"/><rect x="94" y="746" width="1" height="1" fill="#000"/><rect x="146" y="746" width="1" height="1" fill="#000"/><rect x="198" y="746" width="1" height="1" fill="#000"/><rect x="263" y="746" width="1" height="1" fill="#000"/><rect x="328" y="746" width="1" height="1" fill="#000"/><rect x="380" y="746" width="1" height="1" fill="#000"/><rect x="445" y="746" width="1" height="1" fill="#000"/><rect x="510" y="746" width="1" height="1" fill="#000"/><rect x="575" y="746" width="1" height="1" fill="#000"/><rect x="627" y="746" width="1" height="1" fill="#000"/><rect x="692" y="746" width="1" height="1" fill="#000"/><rect x="757" y="746" width="1" height="1" fill="#000"/><rect x="822" y="746" width="1" height="1" fill="#000"/><rect x="887" y="746" width="1" height="1" fill="#000"/><rect x="952" y="746" width="1" height="1" fill="#000"/><rect x="1017" y="746" width="1" height="1" fill="#000"/><rect x="1082" y="746" width="1" height="1" fill="#000"/><rect x="1147" y="746" width="1" height="1" fill="#000"/><rect x="29" y="772" width="1" height="1" fill="#000"/><rect x="42" y="772" width="1" height="1" fill="#000"/><rect x="55" y="772" width="1" height="1" fill="#000"/><rect x="68" y="772" width="1" height="1" fill="#000"/><rect x="81" y="772" width="1" height="1" fill="#000"/><rect x="94" y="772" width="1" height="1" fill="#000"/><rect x="107" y="772" width="1" height="1" fill="#000"/><rect x="120" y="772" width="1" height="1" fill="#000"/><rect x="133" y="772" width="1" height="1" fill="#000"/><rect x="146" y="772" width="1" height="1" fill="#000"/><rect x="159" y="772" width="1" height="1" fill="#000"/><rect x="172" y="772" width="1" height="1" fill="#000"/><rect x="185" y="772" width="1" height="1" fill="#000"/><rect x="198" y="772" width="1" height="1" fill="#000"/><rect x="211" y="772" width="1" height="1" fill="#000"/><rect x="224" y="772" width="1" height="1" fill="#000"/><rect x="237" y="772" width="1" height="1" fill="#000"/><rect x="250" y="772" width="1" height="1" fill="#000"/><rect x="263" y="772" width="1" height="1" fill="#000"/><rect x="276" y="772" width="1" height="1" fill="#000"/><rect x="289" y="772" width="1" height="1" fill="#000"/><rect x="302" y="772" width="1" height="1" fill="#000"/><rect x="315" y="772" width="1" height="1" fill="#000"/><rect x="328" y="772" width="1" height="1" fill="#000"/><rect x="341" y="772" width="1" height="1" fill="#000"/><rect x="354" y="772" width="1" height="1" fill="#000"/><rect x="367" y="772" width="1" height="1" fill="#000"/><rect x="380" y="772" width="1" height="1" fill="#000"/><rect x="393" y="772" width="1" height="1" fill="#000"/><rect x="406" y="772" width="1" height="1" fill="#000"/><rect x="419" y="772" width="1" height="1" fill="#000"/><rect x="432" y="772" width="1" height="1" fill="#000"/><rect x="445" y="772" width="1" height="1" fill="#000"/><rect x="458" y="772" width="1" height="1" fill="#000"/><rect x="471" y="772" width="1" height="1" fill="#000"/><rect x="484" y="772" width="1" height="1" fill="#000"/><rect x="497" y="772" width="1" height="1" fill="#000"/><rect x="510" y="772" width="1" height="1" fill="#000"/><rect x="523" y="772" width="1" height="1" fill="#000"/><rect x="536" y="772" width="1" height="1" fill="#000"/><rect x="549" y="772" width="1" height="1" fill="#000"/><rect x="562" y="772" width="1" height="1" fill="#000"/><rect x="575" y="772" width="1" height="1" fill="#000"/><rect x="588" y="772" width="1" height="1" fill="#000"/><rect x="601" y="772" width="1" height="1" fill="#000"/><rect x="614" y="772" width="1" height="1" fill="#000"/><rect x="627" y="772" width="1" height="1" fill="#000"/><rect x="640" y="772" width="1" height="1" fill="#000"/><rect x="653" y="772" width="1" height="1" fill="#000"/><rect x="666" y="772" width="1" height="1" fill="#000"/><rect x="679" y="772" width="1" height="1" fill="#000"/><rect x="692" y="772" width="1" height="1" fill="#000"/><rect x="705" y="772" width="1" height="1" fill="#000"/><rect x="718" y="772" width="1" height="1" fill="#000"/><rect x="731" y="772" width="1" height="1" fill="#000"/><rect x="744" y="772" width="1" height="1" fill="#000"/><rect x="757" y="772" width="1" height="1" fill="#000"/><rect x="770" y="772" width="1" height="1" fill="#000"/><rect x="783" y="772" width="1" height="1" fill="#000"/><rect x="796" y="772" width="1" height="1" fill="#000"/><rect x="809" y="772" width="1" height="1" fill="#000"/><rect x="822" y="772" width="1" height="1" fill="#000"/><rect x="835" y="772" width="1" height="1" fill="#000"/><rect x="848" y="772" width="1" height="1" fill="#000"/><rect x="861" y="772" width="1" height="1" fill="#000"/><rect x="874" y="772" width="1" height="1" fill="#000"/><rect x="887" y="772" width="1" height="1" fill="#000"/><rect x="900" y="772" width="1" height="1" fill="#000"/><rect x="913" y="772" width="1" height="1" fill="#000"/><rect x="926" y="772" width="1" height="1" fill="#000"/><rect x="939" y="772" width="1" height="1" fill="#000"/><rect x="952" y="772" width="1" height="1" fill="#000"/><rect x="965" y="772" width="1" height="1" fill="#000"/><rect x="978" y="772" width="1" height="1" fill="#000"/><rect x="991" y="772" width="1" height="1" fill="#000"/><rect x="1004" y="772" width="1" height="1" fill="#000"/><rect x="1017" y="772" width="1" height="1" fill="#000"/><rect x="1030" y="772" width="1" height="1" fill="#000"/><rect x="1043" y="772" width="1" height="1" fill="#000"/><rect x="1056" y="772" width="1" height="1" fill="#000"/><rect x="1069" y="772" width="1" height="1" fill="#000"/><rect x="1082" y="772" width="1" height="1" fill="#000"/><rect x="1095" y="772" width="1" height="1" fill="#000"/><rect x="1108" y="772" width="1" height="1" fill="#000"/><rect x="1121" y="772" width="1" height="1" fill="#000"/><rect x="1134" y="772" width="1" height="1" fill="#000"/><rect x="1147" y="772" width="1" height="1" fill="#000"/><rect x="1160" y="772" width="1" height="1" fill="#000"/><rect x="1173" y="772" width="1" height="1" fill="#000"/><rect x="29" y="798" width="1" height="1" fill="#000"/><rect x="94" y="798" width="1" height="1" fill="#000"/><rect x="146" y="798" width="1" height="1" fill="#000"/><rect x="198" y="798" width="1" height="1" fill="#000"/><rect x="263" y="798" width="1" height="1" fill="#000"/><rect x="328" y="798" width="1" height="1" fill="#000"/><rect x="380" y="798" width="1" height="1" fill="#000"/><rect x="445" y="798" width="1" height="1" fill="#000"/><rect x="510" y="798" width="1" height="1" fill="#000"/><rect x="575" y="798" width="1" height="1" fill="#000"/><rect x="627" y="798" width="1" height="1" fill="#000"/><rect x="692" y="798" width="1" height="1" fill="#000"/><rect x="757" y="798" width="1" height="1" fill="#000"/><rect x="822" y="798" width="1" height="1" fill="#000"/><rect x="887" y="798" width="1" height="1" fill="#000"/><rect x="952" y="798" width="1" height="1" fill="#000"/><rect x="1017" y="798" width="1" height="1" fill="#000"/><rect x="1082" y="798" width="1" height="1" fill="#000"/><rect x="1147" y="798" width="1" height="1" fill="#000"/><rect x="29" y="824" width="1" height="1" fill="#000"/><rect x="42" y="824" width="1" height="1" fill="#000"/><rect x="55" y="824" width="1" height="1" fill="#000"/><rect x="68" y="824" width="1" height="1" fill="#000"/><rect x="81" y="824" width="1" height="1" fill="#000"/><rect x="94" y="824" width="1" height="1" fill="#000"/><rect x="107" y="824" width="1" height="1" fill="#000"/><rect x="120" y="824" width="1" height="1" fill="#000"/><rect x="133" y="824" width="1" height="1" fill="#000"/><rect x="146" y="824" width="1" height="1" fill="#000"/><rect x="159" y="824" width="1" height="1" fill="#000"/><rect x="172" y="824" width="1" height="1" fill="#000"/><rect x="185" y="824" width="1" height="1" fill="#000"/><rect x="198" y="824" width="1" height="1" fill="#000"/><rect x="211" y="824" width="1" height="1" fill="#000"/><rect x="224" y="824" width="1" height="1" fill="#000"/><rect x="237" y="824" width="1" height="1" fill="#000"/><rect x="250" y="824" width="1" height="1" fill="#000"/><rect x="263" y="824" width="1" height="1" fill="#000"/><rect x="276" y="824" width="1" height="1" fill="#000"/><rect x="289" y="824" width="1" height="1" fill="#000"/><rect x="302" y="824" width="1" height="1" fill="#000"/><rect x="315" y="824" width="1" height="1" fill="#000"/><rect x="328" y="824" width="1" height="1" fill="#000"/><rect x="341" y="824" width="1" height="1" fill="#000"/><rect x="354" y="824" width="1" height="1" fill="#000"/><rect x="367" y="824" width="1" height="1" fill="#000"/><rect x="380" y="824" width="1" height="1" fill="#000"/><rect x="393" y="824" width="1" height="1" fill="#000"/><rect x="406" y="824" width="1" height="1" fill="#000"/><rect x="419" y="824" width="1" height="1" fill="#000"/><rect x="432" y="824" width="1" height="1" fill="#000"/><rect x="445" y="824" width="1" height="1" fill="#000"/><rect x="458" y="824" width="1" height="1" fill="#000"/><rect x="471" y="824" width="1" height="1" fill="#000"/><rect x="484" y="824" width="1" height="1" fill="#000"/><rect x="497" y="824" width="1" height="1" fill="#000"/><rect x="510" y="824" width="1" height="1" fill="#000"/><rect x="523" y="824" width="1" height="1" fill="#000"/><rect x="536" y="824" width="1" height="1" fill="#000"/><rect x="549" y="824" width="1" height="1" fill="#000"/><rect x="562" y="824" width="1" height="1" fill="#000"/><rect x="575" y="824" width="1" height="1" fill="#000"/><rect x="588" y="824" width="1" height="1" fill="#000"/><rect x="601" y="824" width="1" height="1" fill="#000"/><rect x="614" y="824" width="1" height="1" fill="#000"/><rect x="627" y="824" width="1" height="1" fill="#000"/><rect x="640" y="824" width="1" height="1" fill="#000"/><rect x="653" y="824" width="1" height="1" fill="#000"/><rect x="666" y="824" width="1" height="1" fill="#000"/><rect x="679" y="824" width="1" height="1" fill="#000"/><rect x="692" y="824" width="1" height="1" fill="#000"/><rect x="705" y="824" width="1" height="1" fill="#000"/><rect x="718" y="824" width="1" height="1" fill="#000"/><rect x="731" y="824" width="1" height="1" fill="#000"/><rect x="744" y="824" width="1" height="1" fill="#000"/><rect x="757" y="824" width="1" height="1" fill="#000"/><rect x="770" y="824" width="1" height="1" fill="#000"/><rect x="783" y="824" width="1" height="1" fill="#000"/><rect x="796" y="824" width="1" height="1" fill="#000"/><rect x="809" y="824" width="1" height="1" fill="#000"/><rect x="822" y="824" width="1" height="1" fill="#000"/><rect x="835" y="824" width="1" height="1" fill="#000"/><rect x="848" y="824" width="1" height="1" fill="#000"/><rect x="861" y="824" width="1" height="1" fill="#000"/><rect x="874" y="824" width="1" height="1" fill="#000"/><rect x="887" y="824" width="1" height="1" fill="#000"/><rect x="900" y="824" width="1" height="1" fill="#000"/><rect x="913" y="824" width="1" height="1" fill="#000"/><rect x="926" y="824" width="1" height="1" fill="#000"/><rect x="939" y="824" width="1" height="1" fill="#000"/><rect x="952" y="824" width="1" height="1" fill="#000"/><rect x="965" y="824" width="1" height="1" fill="#000"/><rect x="978" y="824" width="1" height="1" fill="#000"/><rect x="991" y="824" width="1" height="1" fill="#000"/><rect x="1004" y="824" width="1" height="1" fill="#000"/><rect x="1017" y="824" width="1" height="1" fill="#000"/><rect x="1030" y="824" width="1" height="1" fill="#000"/><rect x="1043" y="824" width="1" height="1" fill="#000"/><rect x="1056" y="824" width="1" height="1" fill="#000"/><rect x="1069" y="824" width="1" height="1" fill="#000"/><rect x="1082" y="824" width="1" height="1" fill="#000"/><rect x="1095" y="824" width="1" height="1" fill="#000"/><rect x="1108" y="824" width="1" height="1" fill="#000"/><rect x="1121" y="824" width="1" height="1" fill="#000"/><rect x="1134" y="824" width="1" height="1" fill="#000"/><rect x="1147" y="824" width="1" height="1" fill="#000"/><rect x="1160" y="824" width="1" height="1" fill="#000"/><rect x="1173" y="824" width="1" height="1" fill="#000"/><rect x="29" y="850" width="1" height="1" fill="#000"/><rect x="94" y="850" width="1" height="1" fill="#000"/><rect x="146" y="850" width="1" height="1" fill="#000"/><rect x="198" y="850" width="1" height="1" fill="#000"/><rect x="263" y="850" width="1" height="1" fill="#000"/><rect x="328" y="850" width="1" height="1" fill="#000"/><rect x="380" y="850" width="1" height="1" fill="#000"/><rect x="445" y="850" width="1" height="1" fill="#000"/><rect x="510" y="850" width="1" height="1" fill="#000"/><rect x="575" y="850" width="1" height="1" fill="#000"/><rect x="627" y="850" width="1" height="1" fill="#000"/><rect x="692" y="850" width="1" height="1" fill="#000"/><rect x="757" y="850" width="1" height="1" fill="#000"/><rect x="822" y="850" width="1" height="1" fill="#000"/><rect x="887" y="850" width="1" height="1" fill="#000"/><rect x="952" y="850" width="1" height="1" fill="#000"/><rect x="1017" y="850" width="1" height="1" fill="#000"/><rect x="1082" y="850" width="1" height="1" fill="#000"/><rect x="1147" y="850" width="1" height="1" fill="#000"/><rect x="29" y="876" width="1" height="1" fill="#000"/><rect x="42" y="876" width="1" height="1" fill="#000"/><rect x="55" y="876" width="1" height="1" fill="#000"/><rect x="68" y="876" width="1" height="1" fill="#000"/><rect x="81" y="876" width="1" height="1" fill="#000"/><rect x="94" y="876" width="1" height="1" fill="#000"/><rect x="107" y="876" width="1" height="1" fill="#000"/><rect x="120" y="876" width="1" height="1" fill="#000"/><rect x="133" y="876" width="1" height="1" fill="#000"/><rect x="146" y="876" width="1" height="1" fill="#000"/><rect x="159" y="876" width="1" height="1" fill="#000"/><rect x="172" y="876" width="1" height="1" fill="#000"/><rect x="185" y="876" width="1" height="1" fill="#000"/><rect x="198" y="876" width="1" height="1" fill="#000"/><rect x="211" y="876" width="1" height="1" fill="#000"/><rect x="224" y="876" width="1" height="1" fill="#000"/><rect x="237" y="876" width="1" height="1" fill="#000"/><rect x="250" y="876" width="1" height="1" fill="#000"/><rect x="263" y="876" width="1" height="1" fill="#000"/><rect x="276" y="876" width="1" height="1" fill="#000"/><rect x="289" y="876" width="1" height="1" fill="#000"/><rect x="302" y="876" width="1" height="1" fill="#000"/><rect x="315" y="876" width="1" height="1" fill="#000"/><rect x="328" y="876" width="1" height="1" fill="#000"/><rect x="341" y="876" width="1" height="1" fill="#000"/><rect x="354" y="876" width="1" height="1" fill="#000"/><rect x="367" y="876" width="1" height="1" fill="#000"/><rect x="380" y="876" width="1" height="1" fill="#000"/><rect x="393" y="876" width="1" height="1" fill="#000"/><rect x="406" y="876" width="1" height="1" fill="#000"/><rect x="419" y="876" width="1" height="1" fill="#000"/><rect x="432" y="876" width="1" height="1" fill="#000"/><rect x="445" y="876" width="1" height="1" fill="#000"/><rect x="458" y="876" width="1" height="1" fill="#000"/><rect x="471" y="876" width="1" height="1" fill="#000"/><rect x="484" y="876" width="1" height="1" fill="#000"/><rect x="497" y="876" width="1" height="1" fill="#000"/><rect x="510" y="876" width="1" height="1" fill="#000"/><rect x="523" y="876" width="1" height="1" fill="#000"/><rect x="536" y="876" width="1" height="1" fill="#000"/><rect x="549" y="876" width="1" height="1" fill="#000"/><rect x="562" y="876" width="1" height="1" fill="#000"/><rect x="575" y="876" width="1" height="1" fill="#000"/><rect x="588" y="876" width="1" height="1" fill="#000"/><rect x="601" y="876" width="1" height="1" fill="#000"/><rect x="614" y="876" width="1" height="1" fill="#000"/><rect x="627" y="876" width="1" height="1" fill="#000"/><rect x="640" y="876" width="1" height="1" fill="#000"/><rect x="653" y="876" width="1" height="1" fill="#000"/><rect x="666" y="876" width="1" height="1" fill="#000"/><rect x="679" y="876" width="1" height="1" fill="#000"/><rect x="692" y="876" width="1" height="1" fill="#000"/><rect x="705" y="876" width="1" height="1" fill="#000"/><rect x="718" y="876" width="1" height="1" fill="#000"/><rect x="731" y="876" width="1" height="1" fill="#000"/><rect x="744" y="876" width="1" height="1" fill="#000"/><rect x="757" y="876" width="1" height="1" fill="#000"/><rect x="770" y="876" width="1" height="1" fill="#000"/><rect x="783" y="876" width="1" height="1" fill="#000"/><rect x="796" y="876" width="1" height="1" fill="#000"/><rect x="809" y="876" width="1" height="1" fill="#000"/><rect x="822" y="876" width="1" height="1" fill="#000"/><rect x="835" y="876" width="1" height="1" fill="#000"/><rect x="848" y="876" width="1" height="1" fill="#000"/><rect x="861" y="876" width="1" height="1" fill="#000"/><rect x="874" y="876" width="1" height="1" fill="#000"/><rect x="887" y="876" width="1" height="1" fill="#000"/><rect x="900" y="876" width="1" height="1" fill="#000"/><rect x="913" y="876" width="1" height="1" fill="#000"/><rect x="926" y="876" width="1" height="1" fill="#000"/><rect x="939" y="876" width="1" height="1" fill="#000"/><rect x="952" y="876" width="1" height="1" fill="#000"/><rect x="965" y="876" width="1" height="1" fill="#000"/><rect x="978" y="876" width="1" height="1" fill="#000"/><rect x="991" y="876" width="1" height="1" fill="#000"/><rect x="1004" y="876" width="1" height="1" fill="#000"/><rect x="1017" y="876" width="1" height="1" fill="#000"/><rect x="1030" y="876" width="1" height="1" fill="#000"/><rect x="1043" y="876" width="1" height="1" fill="#000"/><rect x="1056" y="876" width="1" height="1" fill="#000"/><rect x="1069" y="876" width="1" height="1" fill="#000"/><rect x="1082" y="876" width="1" height="1" fill="#000"/><rect x="1095" y="876" width="1" height="1" fill="#000"/><rect x="1108" y="876" width="1" height="1" fill="#000"/><rect x="1121" y="876" width="1" height="1" fill="#000"/><rect x="1134" y="876" width="1" height="1" fill="#000"/><rect x="1147" y="876" width="1" height="1" fill="#000"/><rect x="1160" y="876" width="1" height="1" fill="#000"/><rect x="1173" y="876" width="1" height="1" fill="#000"/><rect x="29" y="902" width="1" height="1" fill="#000"/><rect x="94" y="902" width="1" height="1" fill="#000"/><rect x="146" y="902" width="1" height="1" fill="#000"/><rect x="198" y="902" width="1" height="1" fill="#000"/><rect x="263" y="902" width="1" height="1" fill="#000"/><rect x="328" y="902" width="1" height="1" fill="#000"/><rect x="380" y="902" width="1" height="1" fill="#000"/><rect x="445" y="902" width="1" height="1" fill="#000"/><rect x="510" y="902" width="1" height="1" fill="#000"/><rect x="575" y="902" width="1" height="1" fill="#000"/><rect x="627" y="902" width="1" height="1" fill="#000"/><rect x="692" y="902" width="1" height="1" fill="#000"/><rect x="757" y="902" width="1" height="1" fill="#000"/><rect x="822" y="902" width="1" height="1" fill="#000"/><rect x="887" y="902" width="1" height="1" fill="#000"/><rect x="952" y="902" width="1" height="1" fill="#000"/><rect x="1017" y="902" width="1" height="1" fill="#000"/><rect x="1082" y="902" width="1" height="1" fill="#000"/><rect x="1147" y="902" width="1" height="1" fill="#000"/><rect x="29" y="928" width="1" height="1" fill="#000"/><rect x="42" y="928" width="1" height="1" fill="#000"/><rect x="55" y="928" width="1" height="1" fill="#000"/><rect x="68" y="928" width="1" height="1" fill="#000"/><rect x="81" y="928" width="1" height="1" fill="#000"/><rect x="94" y="928" width="1" height="1" fill="#000"/><rect x="107" y="928" width="1" height="1" fill="#000"/><rect x="120" y="928" width="1" height="1" fill="#000"/><rect x="133" y="928" width="1" height="1" fill="#000"/><rect x="146" y="928" width="1" height="1" fill="#000"/><rect x="159" y="928" width="1" height="1" fill="#000"/><rect x="172" y="928" width="1" height="1" fill="#000"/><rect x="185" y="928" width="1" height="1" fill="#000"/><rect x="198" y="928" width="1" height="1" fill="#000"/><rect x="211" y="928" width="1" height="1" fill="#000"/><rect x="224" y="928" width="1" height="1" fill="#000"/><rect x="237" y="928" width="1" height="1" fill="#000"/><rect x="250" y="928" width="1" height="1" fill="#000"/><rect x="263" y="928" width="1" height="1" fill="#000"/><rect x="276" y="928" width="1" height="1" fill="#000"/><rect x="289" y="928" width="1" height="1" fill="#000"/><rect x="302" y="928" width="1" height="1" fill="#000"/><rect x="315" y="928" width="1" height="1" fill="#000"/><rect x="328" y="928" width="1" height="1" fill="#000"/><rect x="341" y="928" width="1" height="1" fill="#000"/><rect x="354" y="928" width="1" height="1" fill="#000"/><rect x="367" y="928" width="1" height="1" fill="#000"/><rect x="380" y="928" width="1" height="1" fill="#000"/><rect x="393" y="928" width="1" height="1" fill="#000"/><rect x="406" y="928" width="1" height="1" fill="#000"/><rect x="419" y="928" width="1" height="1" fill="#000"/><rect x="432" y="928" width="1" height="1" fill="#000"/><rect x="445" y="928" width="1" height="1" fill="#000"/><rect x="458" y="928" width="1" height="1" fill="#000"/><rect x="471" y="928" width="1" height="1" fill="#000"/><rect x="484" y="928" width="1" height="1" fill="#000"/><rect x="497" y="928" width="1" height="1" fill="#000"/><rect x="510" y="928" width="1" height="1" fill="#000"/><rect x="523" y="928" width="1" height="1" fill="#000"/><rect x="536" y="928" width="1" height="1" fill="#000"/><rect x="549" y="928" width="1" height="1" fill="#000"/><rect x="562" y="928" width="1" height="1" fill="#000"/><rect x="575" y="928" width="1" height="1" fill="#000"/><rect x="588" y="928" width="1" height="1" fill="#000"/><rect x="601" y="928" width="1" height="1" fill="#000"/><rect x="614" y="928" width="1" height="1" fill="#000"/><rect x="627" y="928" width="1" height="1" fill="#000"/><rect x="640" y="928" width="1" height="1" fill="#000"/><rect x="653" y="928" width="1" height="1" fill="#000"/><rect x="666" y="928" width="1" height="1" fill="#000"/><rect x="679" y="928" width="1" height="1" fill="#000"/><rect x="692" y="928" width="1" height="1" fill="#000"/><rect x="705" y="928" width="1" height="1" fill="#000"/><rect x="718" y="928" width="1" height="1" fill="#000"/><rect x="731" y="928" width="1" height="1" fill="#000"/><rect x="744" y="928" width="1" height="1" fill="#000"/><rect x="757" y="928" width="1" height="1" fill="#000"/><rect x="770" y="928" width="1" height="1" fill="#000"/><rect x="783" y="928" width="1" height="1" fill="#000"/><rect x="796" y="928" width="1" height="1" fill="#000"/><rect x="809" y="928" width="1" height="1" fill="#000"/><rect x="822" y="928" width="1" height="1" fill="#000"/><rect x="835" y="928" width="1" height="1" fill="#000"/><rect x="848" y="928" width="1" height="1" fill="#000"/><rect x="861" y="928" width="1" height="1" fill="#000"/><rect x="874" y="928" width="1" height="1" fill="#000"/><rect x="887" y="928" width="1" height="1" fill="#000"/><rect x="900" y="928" width="1" height="1" fill="#000"/><rect x="913" y="928" width="1" height="1" fill="#000"/><rect x="926" y="928" width="1" height="1" fill="#000"/><rect x="939" y="928" width="1" height="1" fill="#000"/><rect x="952" y="928" width="1" height="1" fill="#000"/><rect x="965" y="928" width="1" height="1" fill="#000"/><rect x="978" y="928" width="1" height="1" fill="#000"/><rect x="991" y="928" width="1" height="1" fill="#000"/><rect x="1004" y="928" width="1" height="1" fill="#000"/><rect x="1017" y="928" width="1" height="1" fill="#000"/><rect x="1030" y="928" width="1" height="1" fill="#000"/><rect x="1043" y="928" width="1" height="1" fill="#000"/><rect x="1056" y="928" width="1" height="1" fill="#000"/><rect x="1069" y="928" width="1" height="1" fill="#000"/><rect x="1082" y="928" width="1" height="1" fill="#000"/><rect x="1095" y="928" width="1" height="1" fill="#000"/><rect x="1108" y="928" width="1" height="1" fill="#000"/><rect x="1121" y="928" width="1" height="1" fill="#000"/><rect x="1134" y="928" width="1" height="1" fill="#000"/><rect x="1147" y="928" width="1" height="1" fill="#000"/><rect x="1160" y="928" width="1" height="1" fill="#000"/><rect x="1173" y="928" width="1" height="1" fill="#000"/><rect x="185" y="388" width="1" height="1" fill="#000"/><rect x="185" y="394" width="1" height="1" fill="#000"/><rect x="185" y="399" width="1" height="1" fill="#000"/><rect x="185" y="404" width="1" height="1" fill="#000"/><rect x="185" y="409" width="1" height="1" fill="#000"/><rect x="185" y="414" width="1" height="1" fill="#000"/><rect x="185" y="419" width="1" height="1" fill="#000"/><rect x="185" y="425" width="1" height="1" fill="#000"/><rect x="185" y="430" width="1" height="1" fill="#000"/><rect x="185" y="435" width="1" height="1" fill="#000"/><rect x="185" y="440" width="1" height="1" fill="#000"/><rect x="185" y="445" width="1" height="1" fill="#000"/><rect x="185" y="451" width="1" height="1" fill="#000"/><rect x="185" y="456" width="1" height="1" fill="#000"/><rect x="185" y="461" width="1" height="1" fill="#000"/><rect x="185" y="466" width="1" height="1" fill="#000"/><rect x="185" y="471" width="1" height="1" fill="#000"/><rect x="185" y="477" width="1" height="1" fill="#000"/><rect x="185" y="482" width="1" height="1" fill="#000"/><rect x="185" y="487" width="1" height="1" fill="#000"/><rect x="185" y="492" width="1" height="1" fill="#000"/><rect x="185" y="497" width="1" height="1" fill="#000"/><rect x="185" y="503" width="1" height="1" fill="#000"/><rect x="185" y="508" width="1" height="1" fill="#000"/><rect x="185" y="513" width="1" height="1" fill="#000"/><rect x="185" y="518" width="1" height="1" fill="#000"/><rect x="185" y="523" width="1" height="1" fill="#000"/><rect x="185" y="528" width="1" height="1" fill="#000"/><rect x="185" y="534" width="1" height="1" fill="#000"/><rect x="185" y="539" width="1" height="1" fill="#000"/><rect x="185" y="544" width="1" height="1" fill="#000"/><rect x="185" y="549" width="1" height="1" fill="#000"/><rect x="185" y="554" width="1" height="1" fill="#000"/><rect x="185" y="560" width="1" height="1" fill="#000"/><rect x="185" y="565" width="1" height="1" fill="#000"/><rect x="185" y="570" width="1" height="1" fill="#000"/><rect x="185" y="575" width="1" height="1" fill="#000"/><rect x="185" y="580" width="1" height="1" fill="#000"/><rect x="185" y="586" width="1" height="1" fill="#000"/><rect x="185" y="591" width="1" height="1" fill="#000"/><rect x="185" y="596" width="1" height="1" fill="#000"/><rect x="185" y="601" width="1" height="1" fill="#000"/><rect x="185" y="606" width="1" height="1" fill="#000"/><rect x="185" y="612" width="1" height="1" fill="#000"/><rect x="185" y="617" width="1" height="1" fill="#000"/><rect x="185" y="622" width="1" height="1" fill="#000"/><rect x="185" y="627" width="1" height="1" fill="#000"/><rect x="185" y="632" width="1" height="1" fill="#000"/><rect x="185" y="637" width="1" height="1" fill="#000"/><rect x="185" y="643" width="1" height="1" fill="#000"/><rect x="185" y="648" width="1" height="1" fill="#000"/><rect x="185" y="653" width="1" height="1" fill="#000"/><rect x="185" y="658" width="1" height="1" fill="#000"/><rect x="185" y="663" width="1" height="1" fill="#000"/><rect x="185" y="669" width="1" height="1" fill="#000"/><rect x="185" y="674" width="1" height="1" fill="#000"/><rect x="185" y="679" width="1" height="1" fill="#000"/><rect x="185" y="684" width="1" height="1" fill="#000"/><rect x="185" y="689" width="1" height="1" fill="#000"/><rect x="185" y="695" width="1" height="1" fill="#000"/><rect x="185" y="700" width="1" height="1" fill="#000"/><rect x="185" y="705" width="1" height="1" fill="#000"/><rect x="185" y="710" width="1" height="1" fill="#000"/><rect x="185" y="715" width="1" height="1" fill="#000"/><rect x="185" y="721" width="1" height="1" fill="#000"/><rect x="185" y="726" width="1" height="1" fill="#000"/><rect x="185" y="731" width="1" height="1" fill="#000"/><rect x="185" y="736" width="1" height="1" fill="#000"/><rect x="185" y="741" width="1" height="1" fill="#000"/><rect x="185" y="746" width="1" height="1" fill="#000"/><rect x="185" y="752" width="1" height="1" fill="#000"/><rect x="185" y="757" width="1" height="1" fill="#000"/><rect x="185" y="762" width="1" height="1" fill="#000"/><rect x="185" y="767" width="1" height="1" fill="#000"/><rect x="185" y="772" width="1" height="1" fill="#000"/><rect x="185" y="778" width="1" height="1" fill="#000"/><rect x="185" y="783" width="1" height="1" fill="#000"/><rect x="185" y="788" width="1" height="1" fill="#000"/><rect x="185" y="793" width="1" height="1" fill="#000"/><rect x="185" y="798" width="1" height="1" fill="#000"/><rect x="185" y="804" width="1" height="1" fill="#000"/><rect x="185" y="809" width="1" height="1" fill="#000"/><rect x="185" y="814" width="1" height="1" fill="#000"/><rect x="185" y="819" width="1" height="1" fill="#000"/><rect x="185" y="824" width="1" height="1" fill="#000"/><rect x="185" y="829" width="1" height="1" fill="#000"/><rect x="185" y="835" width="1" height="1" fill="#000"/><rect x="185" y="840" width="1" height="1" fill="#000"/><rect x="185" y="845" width="1" height="1" fill="#000"/><rect x="185" y="850" width="1" height="1" fill="#000"/><rect x="185" y="855" width="1" height="1" fill="#000"/><rect x="185" y="861" width="1" height="1" fill="#000"/><rect x="185" y="866" width="1" height="1" fill="#000"/><rect x="185" y="871" width="1" height="1" fill="#000"/><rect x="185" y="876" width="1" height="1" fill="#000"/><rect x="185" y="881" width="1" height="1" fill="#000"/><rect x="185" y="887" width="1" height="1" fill="#000"/><rect x="185" y="892" width="1" height="1" fill="#000"/><rect x="185" y="897" width="1" height="1" fill="#000"/><rect x="185" y="902" width="1" height="1" fill="#000"/><rect x="185" y="907" width="1" height="1" fill="#000"/><rect x="185" y="913" width="1" height="1" fill="#000"/><rect x="185" y="918" width="1" height="1" fill="#000"/><rect x="185" y="923" width="1" height="1" fill="#000"/><rect x="185" y="928" width="1" height="1" fill="#000"/><rect x="185" y="933" width="1" height="1" fill="#000"/><rect x="185" y="938" width="1" height="1" fill="#000"/><rect x="185" y="944" width="1" height="1" fill="#000"/><rect x="445" y="388" width="1" height="1" fill="#000"/><rect x="445" y="394" width="1" height="1" fill="#000"/><rect x="445" y="399" width="1" height="1" fill="#000"/><rect x="445" y="404" width="1" height="1" fill="#000"/><rect x="445" y="409" width="1" height="1" fill="#000"/><rect x="445" y="414" width="1" height="1" fill="#000"/><rect x="445" y="419" width="1" height="1" fill="#000"/><rect x="445" y="425" width="1" height="1" fill="#000"/><rect x="445" y="430" width="1" height="1" fill="#000"/><rect x="445" y="435" width="1" height="1" fill="#000"/><rect x="445" y="440" width="1" height="1" fill="#000"/><rect x="445" y="445" width="1" height="1" fill="#000"/><rect x="445" y="451" width="1" height="1" fill="#000"/><rect x="445" y="456" width="1" height="1" fill="#000"/><rect x="445" y="461" width="1" height="1" fill="#000"/><rect x="445" y="466" width="1" height="1" fill="#000"/><rect x="445" y="471" width="1" height="1" fill="#000"/><rect x="445" y="477" width="1" height="1" fill="#000"/><rect x="445" y="482" width="1" height="1" fill="#000"/><rect x="445" y="487" width="1" height="1" fill="#000"/><rect x="445" y="492" width="1" height="1" fill="#000"/><rect x="445" y="497" width="1" height="1" fill="#000"/><rect x="445" y="503" width="1" height="1" fill="#000"/><rect x="445" y="508" width="1" height="1" fill="#000"/><rect x="445" y="513" width="1" height="1" fill="#000"/><rect x="445" y="518" width="1" height="1" fill="#000"/><rect x="445" y="523" width="1" height="1" fill="#000"/><rect x="445" y="528" width="1" height="1" fill="#000"/><rect x="445" y="534" width="1" height="1" fill="#000"/><rect x="445" y="539" width="1" height="1" fill="#000"/><rect x="445" y="544" width="1" height="1" fill="#000"/><rect x="445" y="549" width="1" height="1" fill="#000"/><rect x="445" y="554" width="1" height="1" fill="#000"/><rect x="445" y="560" width="1" height="1" fill="#000"/><rect x="445" y="565" width="1" height="1" fill="#000"/><rect x="445" y="570" width="1" height="1" fill="#000"/><rect x="445" y="575" width="1" height="1" fill="#000"/><rect x="445" y="580" width="1" height="1" fill="#000"/><rect x="445" y="586" width="1" height="1" fill="#000"/><rect x="445" y="591" width="1" height="1" fill="#000"/><rect x="445" y="596" width="1" height="1" fill="#000"/><rect x="445" y="601" width="1" height="1" fill="#000"/><rect x="445" y="606" width="1" height="1" fill="#000"/><rect x="445" y="612" width="1" height="1" fill="#000"/><rect x="445" y="617" width="1" height="1" fill="#000"/><rect x="445" y="622" width="1" height="1" fill="#000"/><rect x="445" y="627" width="1" height="1" fill="#000"/><rect x="445" y="632" width="1" height="1" fill="#000"/><rect x="445" y="637" width="1" height="1" fill="#000"/><rect x="445" y="643" width="1" height="1" fill="#000"/><rect x="445" y="648" width="1" height="1" fill="#000"/><rect x="445" y="653" width="1" height="1" fill="#000"/><rect x="445" y="658" width="1" height="1" fill="#000"/><rect x="445" y="663" width="1" height="1" fill="#000"/><rect x="445" y="669" width="1" height="1" fill="#000"/><rect x="445" y="674" width="1" height="1" fill="#000"/><rect x="445" y="679" width="1" height="1" fill="#000"/><rect x="445" y="684" width="1" height="1" fill="#000"/><rect x="445" y="689" width="1" height="1" fill="#000"/><rect x="445" y="695" width="1" height="1" fill="#000"/><rect x="445" y="700" width="1" height="1" fill="#000"/><rect x="445" y="705" width="1" height="1" fill="#000"/><rect x="445" y="710" width="1" height="1" fill="#000"/><rect x="445" y="715" width="1" height="1" fill="#000"/><rect x="445" y="721" width="1" height="1" fill="#000"/><rect x="445" y="726" width="1" height="1" fill="#000"/><rect x="445" y="731" width="1" height="1" fill="#000"/><rect x="445" y="736" width="1" height="1" fill="#000"/><rect x="445" y="741" width="1" height="1" fill="#000"/><rect x="445" y="746" width="1" height="1" fill="#000"/><rect x="445" y="752" width="1" height="1" fill="#000"/><rect x="445" y="757" width="1" height="1" fill="#000"/><rect x="445" y="762" width="1" height="1" fill="#000"/><rect x="445" y="767" width="1" height="1" fill="#000"/><rect x="445" y="772" width="1" height="1" fill="#000"/><rect x="445" y="778" width="1" height="1" fill="#000"/><rect x="445" y="783" width="1" height="1" fill="#000"/><rect x="445" y="788" width="1" height="1" fill="#000"/><rect x="445" y="793" width="1" height="1" fill="#000"/><rect x="445" y="798" width="1" height="1" fill="#000"/><rect x="445" y="804" width="1" height="1" fill="#000"/><rect x="445" y="809" width="1" height="1" fill="#000"/><rect x="445" y="814" width="1" height="1" fill="#000"/><rect x="445" y="819" width="1" height="1" fill="#000"/><rect x="445" y="824" width="1" height="1" fill="#000"/><rect x="445" y="829" width="1" height="1" fill="#000"/><rect x="445" y="835" width="1" height="1" fill="#000"/><rect x="445" y="840" width="1" height="1" fill="#000"/><rect x="445" y="845" width="1" height="1" fill="#000"/><rect x="445" y="850" width="1" height="1" fill="#000"/><rect x="445" y="855" width="1" height="1" fill="#000"/><rect x="445" y="861" width="1" height="1" fill="#000"/><rect x="445" y="866" width="1" height="1" fill="#000"/><rect x="445" y="871" width="1" height="1" fill="#000"/><rect x="445" y="876" width="1" height="1" fill="#000"/><rect x="445" y="881" width="1" height="1" fill="#000"/><rect x="445" y="887" width="1" height="1" fill="#000"/><rect x="445" y="892" width="1" height="1" fill="#000"/><rect x="445" y="897" width="1" height="1" fill="#000"/><rect x="445" y="902" width="1" height="1" fill="#000"/><rect x="445" y="907" width="1" height="1" fill="#000"/><rect x="445" y="913" width="1" height="1" fill="#000"/><rect x="445" y="918" width="1" height="1" fill="#000"/><rect x="445" y="923" width="1" height="1" fill="#000"/><rect x="445" y="928" width="1" height="1" fill="#000"/><rect x="445" y="933" width="1" height="1" fill="#000"/><rect x="445" y="938" width="1" height="1" fill="#000"/><rect x="445" y="944" width="1" height="1" fill="#000"/><rect x="692" y="388" width="1" height="1" fill="#000"/><rect x="692" y="394" width="1" height="1" fill="#000"/><rect x="692" y="399" width="1" height="1" fill="#000"/><rect x="692" y="404" width="1" height="1" fill="#000"/><rect x="692" y="409" width="1" height="1" fill="#000"/><rect x="692" y="414" width="1" height="1" fill="#000"/><rect x="692" y="419" width="1" height="1" fill="#000"/><rect x="692" y="425" width="1" height="1" fill="#000"/><rect x="692" y="430" width="1" height="1" fill="#000"/><rect x="692" y="435" width="1" height="1" fill="#000"/><rect x="692" y="440" width="1" height="1" fill="#000"/><rect x="692" y="445" width="1" height="1" fill="#000"/><rect x="692" y="451" width="1" height="1" fill="#000"/><rect x="692" y="456" width="1" height="1" fill="#000"/><rect x="692" y="461" width="1" height="1" fill="#000"/><rect x="692" y="466" width="1" height="1" fill="#000"/><rect x="692" y="471" width="1" height="1" fill="#000"/><rect x="692" y="477" width="1" height="1" fill="#000"/><rect x="692" y="482" width="1" height="1" fill="#000"/><rect x="692" y="487" width="1" height="1" fill="#000"/><rect x="692" y="492" width="1" height="1" fill="#000"/><rect x="692" y="497" width="1" height="1" fill="#000"/><rect x="692" y="503" width="1" height="1" fill="#000"/><rect x="692" y="508" width="1" height="1" fill="#000"/><rect x="692" y="513" width="1" height="1" fill="#000"/><rect x="692" y="518" width="1" height="1" fill="#000"/><rect x="692" y="523" width="1" height="1" fill="#000"/><rect x="692" y="528" width="1" height="1" fill="#000"/><rect x="692" y="534" width="1" height="1" fill="#000"/><rect x="692" y="539" width="1" height="1" fill="#000"/><rect x="692" y="544" width="1" height="1" fill="#000"/><rect x="692" y="549" width="1" height="1" fill="#000"/><rect x="692" y="554" width="1" height="1" fill="#000"/><rect x="692" y="560" width="1" height="1" fill="#000"/><rect x="692" y="565" width="1" height="1" fill="#000"/><rect x="692" y="570" width="1" height="1" fill="#000"/><rect x="692" y="575" width="1" height="1" fill="#000"/><rect x="692" y="580" width="1" height="1" fill="#000"/><rect x="692" y="586" width="1" height="1" fill="#000"/><rect x="692" y="591" width="1" height="1" fill="#000"/><rect x="692" y="596" width="1" height="1" fill="#000"/><rect x="692" y="601" width="1" height="1" fill="#000"/><rect x="692" y="606" width="1" height="1" fill="#000"/><rect x="692" y="612" width="1" height="1" fill="#000"/><rect x="692" y="617" width="1" height="1" fill="#000"/><rect x="692" y="622" width="1" height="1" fill="#000"/><rect x="692" y="627" width="1" height="1" fill="#000"/><rect x="692" y="632" width="1" height="1" fill="#000"/><rect x="692" y="637" width="1" height="1" fill="#000"/><rect x="692" y="643" width="1" height="1" fill="#000"/><rect x="692" y="648" width="1" height="1" fill="#000"/><rect x="692" y="653" width="1" height="1" fill="#000"/><rect x="692" y="658" width="1" height="1" fill="#000"/><rect x="692" y="663" width="1" height="1" fill="#000"/><rect x="692" y="669" width="1" height="1" fill="#000"/><rect x="692" y="674" width="1" height="1" fill="#000"/><rect x="692" y="679" width="1" height="1" fill="#000"/><rect x="692" y="684" width="1" height="1" fill="#000"/><rect x="692" y="689" width="1" height="1" fill="#000"/><rect x="692" y="695" width="1" height="1" fill="#000"/><rect x="692" y="700" width="1" height="1" fill="#000"/><rect x="692" y="705" width="1" height="1" fill="#000"/><rect x="692" y="710" width="1" height="1" fill="#000"/><rect x="692" y="715" width="1" height="1" fill="#000"/><rect x="692" y="721" width="1" height="1" fill="#000"/><rect x="692" y="726" width="1" height="1" fill="#000"/><rect x="692" y="731" width="1" height="1" fill="#000"/><rect x="692" y="736" width="1" height="1" fill="#000"/><rect x="692" y="741" width="1" height="1" fill="#000"/><rect x="692" y="746" width="1" height="1" fill="#000"/><rect x="692" y="752" width="1" height="1" fill="#000"/><rect x="692" y="757" width="1" height="1" fill="#000"/><rect x="692" y="762" width="1" height="1" fill="#000"/><rect x="692" y="767" width="1" height="1" fill="#000"/><rect x="692" y="772" width="1" height="1" fill="#000"/><rect x="692" y="778" width="1" height="1" fill="#000"/><rect x="692" y="783" width="1" height="1" fill="#000"/><rect x="692" y="788" width="1" height="1" fill="#000"/><rect x="692" y="793" width="1" height="1" fill="#000"/><rect x="692" y="798" width="1" height="1" fill="#000"/><rect x="692" y="804" width="1" height="1" fill="#000"/><rect x="692" y="809" width="1" height="1" fill="#000"/><rect x="692" y="814" width="1" height="1" fill="#000"/><rect x="692" y="819" width="1" height="1" fill="#000"/><rect x="692" y="824" width="1" height="1" fill="#000"/><rect x="692" y="829" width="1" height="1" fill="#000"/><rect x="692" y="835" width="1" height="1" fill="#000"/><rect x="692" y="840" width="1" height="1" fill="#000"/><rect x="692" y="845" width="1" height="1" fill="#000"/><rect x="692" y="850" width="1" height="1" fill="#000"/><rect x="692" y="855" width="1" height="1" fill="#000"/><rect x="692" y="861" width="1" height="1" fill="#000"/><rect x="692" y="866" width="1" height="1" fill="#000"/><rect x="692" y="871" width="1" height="1" fill="#000"/><rect x="692" y="876" width="1" height="1" fill="#000"/><rect x="692" y="881" width="1" height="1" fill="#000"/><rect x="692" y="887" width="1" height="1" fill="#000"/><rect x="692" y="892" width="1" height="1" fill="#000"/><rect x="692" y="897" width="1" height="1" fill="#000"/><rect x="692" y="902" width="1" height="1" fill="#000"/><rect x="692" y="907" width="1" height="1" fill="#000"/><rect x="692" y="913" width="1" height="1" fill="#000"/><rect x="692" y="918" width="1" height="1" fill="#000"/><rect x="692" y="923" width="1" height="1" fill="#000"/><rect x="692" y="928" width="1" height="1" fill="#000"/><rect x="692" y="933" width="1" height="1" fill="#000"/><rect x="692" y="938" width="1" height="1" fill="#000"/><rect x="692" y="944" width="1" height="1" fill="#000"/><rect x="978" y="388" width="1" height="1" fill="#000"/><rect x="978" y="394" width="1" height="1" fill="#000"/><rect x="978" y="399" width="1" height="1" fill="#000"/><rect x="978" y="404" width="1" height="1" fill="#000"/><rect x="978" y="409" width="1" height="1" fill="#000"/><rect x="978" y="414" width="1" height="1" fill="#000"/><rect x="978" y="419" width="1" height="1" fill="#000"/><rect x="978" y="425" width="1" height="1" fill="#000"/><rect x="978" y="430" width="1" height="1" fill="#000"/><rect x="978" y="435" width="1" height="1" fill="#000"/><rect x="978" y="440" width="1" height="1" fill="#000"/><rect x="978" y="445" width="1" height="1" fill="#000"/><rect x="978" y="451" width="1" height="1" fill="#000"/><rect x="978" y="456" width="1" height="1" fill="#000"/><rect x="978" y="461" width="1" height="1" fill="#000"/><rect x="978" y="466" width="1" height="1" fill="#000"/><rect x="978" y="471" width="1" height="1" fill="#000"/><rect x="978" y="477" width="1" height="1" fill="#000"/><rect x="978" y="482" width="1" height="1" fill="#000"/><rect x="978" y="487" width="1" height="1" fill="#000"/><rect x="978" y="492" width="1" height="1" fill="#000"/><rect x="978" y="497" width="1" height="1" fill="#000"/><rect x="978" y="503" width="1" height="1" fill="#000"/><rect x="978" y="508" width="1" height="1" fill="#000"/><rect x="978" y="513" width="1" height="1" fill="#000"/><rect x="978" y="518" width="1" height="1" fill="#000"/><rect x="978" y="523" width="1" height="1" fill="#000"/><rect x="978" y="528" width="1" height="1" fill="#000"/><rect x="978" y="534" width="1" height="1" fill="#000"/><rect x="978" y="539" width="1" height="1" fill="#000"/><rect x="978" y="544" width="1" height="1" fill="#000"/><rect x="978" y="549" width="1" height="1" fill="#000"/><rect x="978" y="554" width="1" height="1" fill="#000"/><rect x="978" y="560" width="1" height="1" fill="#000"/><rect x="978" y="565" width="1" height="1" fill="#000"/><rect x="978" y="570" width="1" height="1" fill="#000"/><rect x="978" y="575" width="1" height="1" fill="#000"/><rect x="978" y="580" width="1" height="1" fill="#000"/><rect x="978" y="586" width="1" height="1" fill="#000"/><rect x="978" y="591" width="1" height="1" fill="#000"/><rect x="978" y="596" width="1" height="1" fill="#000"/><rect x="978" y="601" width="1" height="1" fill="#000"/><rect x="978" y="606" width="1" height="1" fill="#000"/><rect x="978" y="612" width="1" height="1" fill="#000"/><rect x="978" y="617" width="1" height="1" fill="#000"/><rect x="978" y="622" width="1" height="1" fill="#000"/><rect x="978" y="627" width="1" height="1" fill="#000"/><rect x="978" y="632" width="1" height="1" fill="#000"/><rect x="978" y="637" width="1" height="1" fill="#000"/><rect x="978" y="643" width="1" height="1" fill="#000"/><rect x="978" y="648" width="1" height="1" fill="#000"/><rect x="978" y="653" width="1" height="1" fill="#000"/><rect x="978" y="658" width="1" height="1" fill="#000"/><rect x="978" y="663" width="1" height="1" fill="#000"/><rect x="978" y="669" width="1" height="1" fill="#000"/><rect x="978" y="674" width="1" height="1" fill="#000"/><rect x="978" y="679" width="1" height="1" fill="#000"/><rect x="978" y="684" width="1" height="1" fill="#000"/><rect x="978" y="689" width="1" height="1" fill="#000"/><rect x="978" y="695" width="1" height="1" fill="#000"/><rect x="978" y="700" width="1" height="1" fill="#000"/><rect x="978" y="705" width="1" height="1" fill="#000"/><rect x="978" y="710" width="1" height="1" fill="#000"/><rect x="978" y="715" width="1" height="1" fill="#000"/><rect x="978" y="721" width="1" height="1" fill="#000"/><rect x="978" y="726" width="1" height="1" fill="#000"/><rect x="978" y="731" width="1" height="1" fill="#000"/><rect x="978" y="736" width="1" height="1" fill="#000"/><rect x="978" y="741" width="1" height="1" fill="#000"/><rect x="978" y="746" width="1" height="1" fill="#000"/><rect x="978" y="752" width="1" height="1" fill="#000"/><rect x="978" y="757" width="1" height="1" fill="#000"/><rect x="978" y="762" width="1" height="1" fill="#000"/><rect x="978" y="767" width="1" height="1" fill="#000"/><rect x="978" y="772" width="1" height="1" fill="#000"/><rect x="978" y="778" width="1" height="1" fill="#000"/><rect x="978" y="783" width="1" height="1" fill="#000"/><rect x="978" y="788" width="1" height="1" fill="#000"/><rect x="978" y="793" width="1" height="1" fill="#000"/><rect x="978" y="798" width="1" height="1" fill="#000"/><rect x="978" y="804" width="1" height="1" fill="#000"/><rect x="978" y="809" width="1" height="1" fill="#000"/><rect x="978" y="814" width="1" height="1" fill="#000"/><rect x="978" y="819" width="1" height="1" fill="#000"/><rect x="978" y="824" width="1" height="1" fill="#000"/><rect x="978" y="829" width="1" height="1" fill="#000"/><rect x="978" y="835" width="1" height="1" fill="#000"/><rect x="978" y="840" width="1" height="1" fill="#000"/><rect x="978" y="845" width="1" height="1" fill="#000"/><rect x="978" y="850" width="1" height="1" fill="#000"/><rect x="978" y="855" width="1" height="1" fill="#000"/><rect x="978" y="861" width="1" height="1" fill="#000"/><rect x="978" y="866" width="1" height="1" fill="#000"/><rect x="978" y="871" width="1" height="1" fill="#000"/><rect x="978" y="876" width="1" height="1" fill="#000"/><rect x="978" y="881" width="1" height="1" fill="#000"/><rect x="978" y="887" width="1" height="1" fill="#000"/><rect x="978" y="892" width="1" height="1" fill="#000"/><rect x="978" y="897" width="1" height="1" fill="#000"/><rect x="978" y="902" width="1" height="1" fill="#000"/><rect x="978" y="907" width="1" height="1" fill="#000"/><rect x="978" y="913" width="1" height="1" fill="#000"/><rect x="978" y="918" width="1" height="1" fill="#000"/><rect x="978" y="923" width="1" height="1" fill="#000"/><rect x="978" y="928" width="1" height="1" fill="#000"/><rect x="978" y="933" width="1" height="1" fill="#000"/><rect x="978" y="938" width="1" height="1" fill="#000"/><rect x="978" y="944" width="1" height="1" fill="#000"/></g><rect x="11" y="383" width="88" height="63" fill="#fff"/><polyline points="133.5,893.0 146.5,893.6 159.5,888.9 172.5,892.0 185.5,898.0 198.5,895.5 211.5,895.5 224.5,892.8 237.5,886.5 250.5,891.7 263.5,885.7 276.5,888.1 289.5,891.7 302.5,889.7 315.5,888.9 328.5,890.8 341.5,889.0 354.5,888.7 367.5,885.7 380.5,883.7 393.5,887.3 406.5,890.8 419.5,886.8 432.5,888.7 445.5,888.7 458.5,886.8 471.5,890.0 484.5,893.1 497.5,897.8 510.5,897.8 523.5,896.0 536.5,897.6 549.5,897.1 562.5,894.8 575.5,892.9 588.5,896.0 601.5,896.0 614.5,897.9 627.5,902.6 640.5,905.8 653.5,905.0 666.5,905.8 679.5,905.0 692.5,907.7 705.5,905.0 718.5,899.6 731.5,899.5 744.5,897.5 757.5,895.5 770.5,894.4 783.5,891.0 796.5,892.1 809.5,891.0 822.5,887.6 835.5,890.5 848.5,895.0 861.5,894.4 874.5,893.5 887.5,892.8 900.5,895.0 913.5,895.0 926.5,890.8 939.5,887.5 952.5,895.0 965.5,890.1 978.5,888.6 991.5,888.6 1004.5,890.1 1017.5,894.5 1030.5,897.5 1043.5,896.7 1056.5,903.9 1069.5,900.3 1082.5,896.0 1095.5,896.7 1108.5,896.7 1121.5,889.6 1134.5,881.8 1147.5,873.7 1160.5,877.6" fill="none" stroke="#ea8450" stroke-width="2.2" stroke-linejoin="miter" stroke-miterlimit="3"/><polyline points="133.5,914.0 146.5,914.4 159.5,913.6 172.5,913.6 185.5,910.9 198.5,908.5 211.5,910.1 224.5,912.2 237.5,914.0 250.5,910.9 263.5,909.8 276.5,910.9 289.5,916.7 302.5,919.1 315.5,916.7 328.5,914.8 341.5,915.7 354.5,914.3 367.5,916.7 380.5,910.7 393.5,909.6 406.5,906.5 419.5,902.5 432.5,897.8 445.5,901.0 458.5,901.8 471.5,903.8 484.5,906.8 497.5,904.1 510.5,897.4 523.5,898.4 536.5,902.6 549.5,894.8 562.5,896.4 575.5,898.7 588.5,896.0 601.5,897.1 614.5,902.3 627.5,903.4 640.5,901.1 653.5,900.8 666.5,896.7 679.5,894.5 692.5,882.2 705.5,873.0 718.5,879.6 731.5,874.7 744.5,874.7 757.5,879.7 770.5,879.3 783.5,881.5 796.5,882.2 809.5,883.8 822.5,878.1 835.5,886.7 848.5,893.5 861.5,901.8 874.5,900.7 887.5,899.5 900.5,898.4 913.5,896.6 926.5,899.0 939.5,902.4 952.5,903.4 965.5,901.7 978.5,903.4 991.5,897.5 1004.5,898.1 1017.5,893.9 1030.5,890.7 1043.5,880.5 1056.5,879.7 1069.5,882.6 1082.5,886.0 1095.5,890.3 1108.5,896.0 1121.5,893.9 1134.5,888.6 1147.5,887.5 1160.5,895.0" fill="none" stroke="#d40a14" stroke-width="2.2" stroke-linejoin="miter" stroke-miterlimit="3"/><polyline points="133.5,845.0 146.5,844.9 159.5,842.5 172.5,845.7 185.5,849.9 198.5,846.4 211.5,848.5 224.5,850.7 237.5,847.7 250.5,847.7 263.5,843.8 276.5,846.4 289.5,852.7 302.5,852.7 315.5,847.7 328.5,842.5 341.5,843.6 354.5,844.7 367.5,840.4 380.5,834.9 393.5,840.4 406.5,842.8 419.5,838.9 432.5,842.8 445.5,841.7 458.5,843.6 471.5,846.7 484.5,846.7 497.5,845.5 510.5,841.7 523.5,840.4 536.5,844.5 549.5,837.9 562.5,836.9 575.5,840.5 588.5,840.5 601.5,839.0 614.5,840.5 627.5,834.7 640.5,830.0 653.5,820.1 666.5,833.5 679.5,817.7 692.5,803.6 705.5,788.5 718.5,748.5 731.5,736.1 744.5,722.5 757.5,749.6 770.5,762.0 783.5,783.9 796.5,780.7 809.5,781.6 822.5,767.6 835.5,786.8 848.5,785.0 861.5,793.6 874.5,783.0 887.5,783.0 900.5,785.7 913.5,787.9 926.5,784.8 939.5,793.1 952.5,802.6 965.5,797.7 978.5,801.6 991.5,803.7 1004.5,799.4 1017.5,793.5 1030.5,794.6 1043.5,794.8 1056.5,790.5 1069.5,785.6 1082.5,781.8 1095.5,781.8 1108.5,786.7 1121.5,778.6 1134.5,778.6 1147.5,777.8 1160.5,784.6" fill="none" stroke="#e61ee6" stroke-width="2.4" stroke-linejoin="miter" stroke-miterlimit="3"/><polyline points="16.5,727.7 29.5,727.7 42.5,742.8 55.5,736.0 68.5,733.8 81.5,731.5 94.5,720.6 107.5,713.0 120.5,713.0 133.5,719.2 146.5,728.7 159.5,726.8 172.5,731.0 185.5,741.9 198.5,735.7 211.5,740.8 224.5,748.9 237.5,741.7 250.5,740.0 263.5,735.7 276.5,742.8 289.5,747.5 302.5,750.8 315.5,736.6 328.5,721.9 341.5,726.2 354.5,730.6 367.5,719.6 380.5,710.8 393.5,722.5 406.5,732.8 419.5,728.1 432.5,740.8 445.5,736.6 458.5,743.8 471.5,746.0 484.5,739.6 497.5,736.8 510.5,732.0 523.5,727.7 536.5,734.3 549.5,721.7 562.5,721.1 575.5,731.0 588.5,731.0 601.5,721.7 614.5,721.7 627.5,695.5 640.5,680.4 653.5,655.3 666.5,697.6 679.5,651.7 692.5,613.7 705.5,587.2 718.5,466.1 731.5,436.9 744.5,395.4 757.5,475.3 770.5,512.2 783.5,578.8 796.5,570.2 809.5,570.2 822.5,536.8 835.5,580.9 848.5,565.8 861.5,584.0 874.5,554.9 887.5,556.0 900.5,561.5 913.5,571.5 926.5,564.1 939.5,586.0 952.5,609.1 965.5,603.0 978.5,612.5 991.5,624.8 1004.5,611.2 1017.5,592.4 1030.5,596.9 1043.5,606.3 1056.5,590.3 1069.5,574.9 1082.5,562.7 1095.5,558.1 1108.5,566.7 1121.5,553.9 1134.5,565.0 1147.5,571.3 1160.5,582.0" fill="none" stroke="#177a17" stroke-width="2.2" stroke-linejoin="miter" stroke-miterlimit="3"/><g fill="#000" shape-rendering="crispEdges"><rect x="132" y="866" width="3" height="4"/><rect x="129" y="866" width="6" height="3"/><rect x="132" y="866" width="7" height="3"/><rect x="145" y="866" width="3" height="5"/><rect x="142" y="866" width="6" height="3"/><rect x="145" y="868" width="7" height="3"/><rect x="158" y="868" width="3" height="5"/><rect x="155" y="868" width="6" height="3"/><rect x="158" y="870" width="7" height="3"/><rect x="171" y="870" width="3" height="4"/><rect x="168" y="870" width="6" height="3"/><rect x="171" y="872" width="7" height="3"/><rect x="184" y="870" width="3" height="8"/><rect x="181" y="872" width="6" height="3"/><rect x="184" y="872" width="7" height="3"/><rect x="197" y="868" width="3" height="6"/><rect x="194" y="870" width="6" height="3"/><rect x="197" y="868" width="7" height="3"/><rect x="210" y="869" width="3" height="3"/><rect x="207" y="869" width="6" height="3"/><rect x="210" y="869" width="7" height="3"/><rect x="223" y="866" width="3" height="7"/><rect x="220" y="870" width="6" height="3"/><rect x="223" y="866" width="7" height="3"/><rect x="236" y="864" width="3" height="4"/><rect x="233" y="864" width="6" height="3"/><rect x="236" y="864" width="7" height="3"/><rect x="249" y="866" width="3" height="3"/><rect x="246" y="866" width="6" height="3"/><rect x="249" y="866" width="7" height="3"/><rect x="262" y="862" width="3" height="12"/><rect x="259" y="866" width="6" height="3"/><rect x="262" y="869" width="7" height="3"/><rect x="275" y="869" width="3" height="3"/><rect x="272" y="869" width="6" height="3"/><rect x="275" y="869" width="7" height="3"/><rect x="288" y="869" width="3" height="3"/><rect x="285" y="869" width="6" height="3"/><rect x="288" y="869" width="7" height="3"/><rect x="301" y="869" width="3" height="3"/><rect x="298" y="869" width="6" height="3"/><rect x="301" y="869" width="7" height="3"/><rect x="314" y="866" width="3" height="6"/><rect x="311" y="869" width="6" height="3"/><rect x="314" y="866" width="7" height="3"/><rect x="327" y="866" width="3" height="7"/><rect x="324" y="866" width="6" height="3"/><rect x="327" y="870" width="7" height="3"/><rect x="340" y="870" width="3" height="3"/><rect x="337" y="870" width="6" height="3"/><rect x="340" y="870" width="7" height="3"/><rect x="353" y="866" width="3" height="7"/><rect x="350" y="870" width="6" height="3"/><rect x="353" y="866" width="7" height="3"/><rect x="366" y="860" width="3" height="10"/><rect x="363" y="866" width="6" height="3"/><rect x="366" y="860" width="7" height="3"/><rect x="379" y="858" width="3" height="9"/><rect x="376" y="858" width="6" height="3"/><rect x="379" y="864" width="7" height="3"/><rect x="392" y="863" width="3" height="3"/><rect x="389" y="863" width="6" height="3"/><rect x="392" y="863" width="7" height="3"/><rect x="405" y="856" width="3" height="10"/><rect x="402" y="862" width="6" height="3"/><rect x="405" y="856" width="7" height="3"/><rect x="418" y="853" width="3" height="7"/><rect x="415" y="857" width="6" height="3"/><rect x="418" y="853" width="7" height="3"/><rect x="431" y="852" width="3" height="8"/><rect x="428" y="855" width="6" height="3"/><rect x="431" y="855" width="7" height="3"/><rect x="444" y="854" width="3" height="9"/><rect x="441" y="854" width="6" height="3"/><rect x="444" y="860" width="7" height="3"/><rect x="457" y="860" width="3" height="3"/><rect x="454" y="860" width="6" height="3"/><rect x="457" y="860" width="7" height="3"/><rect x="470" y="860" width="3" height="3"/><rect x="467" y="860" width="6" height="3"/><rect x="470" y="860" width="7" height="3"/><rect x="483" y="857" width="3" height="6"/><rect x="480" y="860" width="6" height="3"/><rect x="483" y="857" width="7" height="3"/><rect x="496" y="856" width="3" height="7"/><rect x="493" y="856" width="6" height="3"/><rect x="496" y="860" width="7" height="3"/><rect x="509" y="860" width="3" height="3"/><rect x="506" y="860" width="6" height="3"/><rect x="509" y="860" width="7" height="3"/><rect x="522" y="861" width="3" height="3"/><rect x="519" y="861" width="6" height="3"/><rect x="522" y="861" width="7" height="3"/><rect x="535" y="856" width="3" height="7"/><rect x="532" y="860" width="6" height="3"/><rect x="535" y="856" width="7" height="3"/><rect x="548" y="848" width="3" height="10"/><rect x="545" y="856" width="6" height="3"/><rect x="548" y="848" width="7" height="3"/><rect x="561" y="848" width="3" height="5"/><rect x="558" y="848" width="6" height="3"/><rect x="561" y="850" width="7" height="3"/><rect x="574" y="850" width="3" height="8"/><rect x="571" y="850" width="6" height="3"/><rect x="574" y="856" width="7" height="3"/><rect x="587" y="851" width="3" height="7"/><rect x="584" y="855" width="6" height="3"/><rect x="587" y="851" width="7" height="3"/><rect x="600" y="843" width="3" height="10"/><rect x="597" y="850" width="6" height="3"/><rect x="600" y="843" width="7" height="3"/><rect x="613" y="837" width="3" height="9"/><rect x="610" y="843" width="6" height="3"/><rect x="613" y="837" width="7" height="3"/><rect x="626" y="835" width="3" height="7"/><rect x="623" y="835" width="6" height="3"/><rect x="626" y="839" width="7" height="3"/><rect x="639" y="840" width="3" height="3"/><rect x="636" y="840" width="6" height="3"/><rect x="639" y="840" width="7" height="3"/><rect x="652" y="838" width="3" height="10"/><rect x="649" y="841" width="6" height="3"/><rect x="652" y="841" width="7" height="3"/><rect x="665" y="838" width="3" height="6"/><rect x="662" y="841" width="6" height="3"/><rect x="665" y="838" width="7" height="3"/><rect x="678" y="827" width="3" height="14"/><rect x="675" y="838" width="6" height="3"/><rect x="678" y="827" width="7" height="3"/><rect x="691" y="826" width="3" height="14"/><rect x="688" y="826" width="6" height="3"/><rect x="691" y="838" width="7" height="3"/><rect x="704" y="834" width="3" height="7"/><rect x="701" y="834" width="6" height="3"/><rect x="704" y="838" width="7" height="3"/><rect x="717" y="840" width="3" height="4"/><rect x="714" y="840" width="6" height="3"/><rect x="717" y="840" width="7" height="3"/><rect x="730" y="832" width="3" height="7"/><rect x="727" y="836" width="6" height="3"/><rect x="730" y="832" width="7" height="3"/><rect x="743" y="816" width="3" height="5"/><rect x="740" y="818" width="6" height="3"/><rect x="743" y="816" width="7" height="3"/><rect x="756" y="804" width="3" height="22"/><rect x="753" y="804" width="6" height="3"/><rect x="756" y="824" width="7" height="3"/><rect x="769" y="830" width="3" height="4"/><rect x="766" y="830" width="6" height="3"/><rect x="769" y="831" width="7" height="3"/><rect x="782" y="829" width="3" height="3"/><rect x="779" y="829" width="6" height="3"/><rect x="782" y="829" width="7" height="3"/><rect x="795" y="826" width="3" height="4"/><rect x="792" y="826" width="6" height="3"/><rect x="795" y="826" width="7" height="3"/><rect x="808" y="814" width="3" height="3"/><rect x="805" y="814" width="6" height="3"/><rect x="808" y="814" width="7" height="3"/><rect x="821" y="817" width="3" height="11"/><rect x="818" y="817" width="6" height="3"/><rect x="821" y="825" width="7" height="3"/><rect x="834" y="820" width="3" height="13"/><rect x="831" y="825" width="6" height="3"/><rect x="834" y="829" width="7" height="3"/><rect x="847" y="818" width="3" height="16"/><rect x="844" y="829" width="6" height="3"/><rect x="847" y="821" width="7" height="3"/><rect x="860" y="814" width="3" height="12"/><rect x="857" y="819" width="6" height="3"/><rect x="860" y="819" width="7" height="3"/><rect x="873" y="818" width="3" height="11"/><rect x="870" y="818" width="6" height="3"/><rect x="873" y="826" width="7" height="3"/><rect x="886" y="820" width="3" height="18"/><rect x="883" y="824" width="6" height="3"/><rect x="886" y="830" width="7" height="3"/><rect x="899" y="825" width="3" height="11"/><rect x="896" y="829" width="6" height="3"/><rect x="899" y="829" width="7" height="3"/><rect x="912" y="829" width="3" height="7"/><rect x="909" y="829" width="6" height="3"/><rect x="912" y="833" width="10" height="3"/></g><g shape-rendering="crispEdges"><rect x="10" y="948" width="1180" height="1" fill="#000"/><rect x="10" y="951" width="1170" height="1" fill="#000"/><rect x="815" y="949" width="365" height="3" fill="#000"/><rect x="11" y="949" width="11" height="2" fill="#3cc03c"/><rect x="29" y="952" width="1" height="13" fill="#000"/><rect x="94" y="952" width="1" height="13" fill="#000"/><rect x="146" y="952" width="1" height="13" fill="#000"/><rect x="185" y="952" width="1" height="13" fill="#000"/><rect x="263" y="952" width="1" height="13" fill="#000"/><rect x="328" y="952" width="1" height="13" fill="#000"/><rect x="380" y="952" width="1" height="13" fill="#000"/><rect x="445" y="952" width="1" height="13" fill="#000"/><rect x="510" y="952" width="1" height="13" fill="#000"/><rect x="575" y="952" width="1" height="13" fill="#000"/><rect x="627" y="952" width="1" height="13" fill="#000"/><rect x="692" y="952" width="1" height="13" fill="#000"/><rect x="757" y="952" width="1" height="13" fill="#000"/><rect x="822" y="952" width="1" height="13" fill="#000"/><rect x="887" y="952" width="1" height="13" fill="#000"/><rect x="952" y="952" width="1" height="13" fill="#000"/><rect x="978" y="952" width="1" height="13" fill="#000"/><rect x="1017" y="952" width="1" height="13" fill="#000"/><rect x="1082" y="952" width="1" height="13" fill="#000"/><rect x="1147" y="952" width="1" height="13" fill="#000"/></g><rect x="10.5" y="828.5" width="131" height="120" fill="#fff" stroke="#6a6a6a" stroke-width="1"/><rect x="92.5" y="384.5" width="5" height="60" fill="#e81818" stroke="#000" stroke-width="1"/><rect x="93" y="432" width="4" height="12" fill="#20d020"/><path d="M93 385 L96 386.5 L96 388 L93 390 Z" fill="#f4f060"/><rect x="1190" y="742" width="75" height="15" fill="#ee22ee"/></svg>
<div class="c" style="left:1206.00px;top:402.34px;font-size:12px;line-height:12px;color:#101010;font-weight:400;"><b style="width:8px">1</b><b style="width:8px">4</b><b style="width:8px">0</b><b style="width:8px">0</b><b style="width:8px">-</b><b style="width:8px">0</b><b style="width:8px">'</b></div>
<div class="c" style="left:1206.00px;top:454.34px;font-size:12px;line-height:12px;color:#101010;font-weight:400;"><b style="width:8px">1</b><b style="width:8px">3</b><b style="width:8px">0</b><b style="width:8px">0</b><b style="width:8px">-</b><b style="width:8px">0</b><b style="width:8px">'</b></div>
<div class="c" style="left:1206.00px;top:506.34px;font-size:12px;line-height:12px;color:#101010;font-weight:400;"><b style="width:8px">1</b><b style="width:8px">2</b><b style="width:8px">0</b><b style="width:8px">0</b><b style="width:8px">-</b><b style="width:8px">0</b><b style="width:8px">'</b></div>
<div class="c" style="left:1206.00px;top:558.34px;font-size:12px;line-height:12px;color:#101010;font-weight:400;"><b style="width:8px">1</b><b style="width:8px">1</b><b style="width:8px">0</b><b style="width:8px">0</b><b style="width:8px">-</b><b style="width:8px">0</b><b style="width:8px">'</b></div>
<div class="c" style="left:1206.00px;top:610.34px;font-size:12px;line-height:12px;color:#101010;font-weight:400;"><b style="width:8px">1</b><b style="width:8px">0</b><b style="width:8px">0</b><b style="width:8px">0</b><b style="width:8px">-</b><b style="width:8px">0</b><b style="width:8px">'</b></div>
<div class="c" style="left:1214.00px;top:662.34px;font-size:12px;line-height:12px;color:#101010;font-weight:400;"><b style="width:8px">9</b><b style="width:8px">0</b><b style="width:8px">0</b><b style="width:8px">-</b><b style="width:8px">0</b><b style="width:8px">'</b></div>
<div class="c" style="left:1214.00px;top:714.34px;font-size:12px;line-height:12px;color:#101010;font-weight:400;"><b style="width:8px">8</b><b style="width:8px">0</b><b style="width:8px">0</b><b style="width:8px">-</b><b style="width:8px">0</b><b style="width:8px">'</b></div>
<div class="c" style="left:1214.00px;top:765.34px;font-size:12px;line-height:12px;color:#101010;font-weight:400;"><b style="width:8px">7</b><b style="width:8px">0</b><b style="width:8px">0</b><b style="width:8px">-</b><b style="width:8px">0</b><b style="width:8px">'</b></div>
<div class="c" style="left:1214.00px;top:817.34px;font-size:12px;line-height:12px;color:#101010;font-weight:400;"><b style="width:8px">6</b><b style="width:8px">0</b><b style="width:8px">0</b><b style="width:8px">-</b><b style="width:8px">0</b><b style="width:8px">'</b></div>
<div class="c" style="left:1214.00px;top:869.34px;font-size:12px;line-height:12px;color:#101010;font-weight:400;"><b style="width:8px">5</b><b style="width:8px">0</b><b style="width:8px">0</b><b style="width:8px">-</b><b style="width:8px">0</b><b style="width:8px">'</b></div>
<div class="c" style="left:1214.00px;top:921.34px;font-size:12px;line-height:12px;color:#101010;font-weight:400;"><b style="width:8px">4</b><b style="width:8px">0</b><b style="width:8px">0</b><b style="width:8px">-</b><b style="width:8px">0</b><b style="width:8px">'</b></div>
<div class="c" style="left:1214.00px;top:742.84px;font-size:12px;line-height:12px;color:#fbe0fb;font-weight:400;"><b style="width:8px">7</b><b style="width:8px">4</b><b style="width:8px">2</b><b style="width:8px">-</b><b style="width:8px">7</b><b style="width:8px">'</b></div>
<div style="position:absolute;left:1190px;top:826px;width:75px;height:15px;background:#1e110b"></div>
<div class="c" style="left:1214.00px;top:826.84px;font-size:12px;line-height:12px;color:#ffffff;font-weight:400;"><b style="width:8px">5</b><b style="width:8px">8</b><b style="width:8px">1</b><b style="width:8px">-</b><b style="width:8px">2</b><b style="width:8px">'</b></div>
<svg style="position:absolute;left:1246px;top:949px" width="18" height="16"><path d="M1 8 L8 1.5 L8 5 L16 5 L16 11 L8 11 L8 14.5 Z" fill="#e00000"/></svg>
<div class="c" style="left:31.00px;top:952.84px;font-size:12px;line-height:12px;color:#101010;font-weight:400;"><b style="width:8px">1</b><b style="width:8px">5</b></div>
<div class="c" style="left:96.00px;top:952.84px;font-size:12px;line-height:12px;color:#101010;font-weight:400;"><b style="width:8px">2</b><b style="width:8px">2</b></div>
<div class="c" style="left:148.00px;top:952.84px;font-size:12px;line-height:12px;color:#101010;font-weight:400;"><b style="width:8px">2</b><b style="width:8px">9</b></div>
<div class="c" style="left:187.00px;top:952.84px;font-size:12px;line-height:12px;color:#101010;font-weight:400;"><b style="width:8px">0</b><b style="width:8px">2</b></div>
<div class="c" style="left:265.00px;top:952.84px;font-size:12px;line-height:12px;color:#101010;font-weight:400;"><b style="width:8px">1</b><b style="width:8px">2</b></div>
<div class="c" style="left:330.00px;top:952.84px;font-size:12px;line-height:12px;color:#101010;font-weight:400;"><b style="width:8px">2</b><b style="width:8px">0</b></div>
<div class="c" style="left:382.00px;top:952.84px;font-size:12px;line-height:12px;color:#101010;font-weight:400;"><b style="width:8px">2</b><b style="width:8px">6</b></div>
<div class="c" style="left:447.00px;top:952.84px;font-size:12px;line-height:12px;color:#101010;font-weight:400;"><b style="width:8px">0</b><b style="width:8px">2</b></div>
<div class="c" style="left:512.00px;top:952.84px;font-size:12px;line-height:12px;color:#101010;font-weight:400;"><b style="width:8px">0</b><b style="width:8px">9</b></div>
<div class="c" style="left:577.00px;top:952.84px;font-size:12px;line-height:12px;color:#101010;font-weight:400;"><b style="width:8px">1</b><b style="width:8px">7</b></div>
<div class="c" style="left:629.00px;top:952.84px;font-size:12px;line-height:12px;color:#101010;font-weight:400;"><b style="width:8px">2</b><b style="width:8px">3</b></div>
<div class="c" style="left:694.00px;top:952.84px;font-size:12px;line-height:12px;color:#101010;font-weight:400;"><b style="width:8px">0</b><b style="width:8px">2</b></div>
<div class="c" style="left:759.00px;top:952.84px;font-size:12px;line-height:12px;color:#101010;font-weight:400;"><b style="width:8px">0</b><b style="width:8px">9</b></div>
<div class="c" style="left:824.00px;top:952.84px;font-size:12px;line-height:12px;color:#101010;font-weight:400;"><b style="width:8px">1</b><b style="width:8px">6</b></div>
<div class="c" style="left:889.00px;top:952.84px;font-size:12px;line-height:12px;color:#101010;font-weight:400;"><b style="width:8px">2</b><b style="width:8px">3</b></div>
<div class="c" style="left:954.00px;top:952.84px;font-size:12px;line-height:12px;color:#101010;font-weight:400;"><b style="width:8px">3</b><b style="width:8px">0</b></div>
<div class="c" style="left:980.00px;top:952.84px;font-size:12px;line-height:12px;color:#101010;font-weight:400;"><b style="width:8px">0</b><b style="width:8px">1</b></div>
<div class="c" style="left:1019.00px;top:952.84px;font-size:12px;line-height:12px;color:#101010;font-weight:400;"><b style="width:8px">0</b><b style="width:8px">6</b></div>
<div class="c" style="left:1084.00px;top:952.84px;font-size:12px;line-height:12px;color:#101010;font-weight:400;"><b style="width:8px">1</b><b style="width:8px">3</b></div>
<div class="c" style="left:1149.00px;top:952.84px;font-size:12px;line-height:12px;color:#101010;font-weight:400;"><b style="width:8px">2</b><b style="width:8px">0</b></div>
<div class="c" style="left:187.00px;top:935.84px;font-size:12px;line-height:12px;color:#101010;font-weight:400;"><b style="width:8px">2</b><b style="width:8px">0</b><b style="width:8px">2</b><b style="width:8px">6</b></div>
<div class="c" style="left:447.00px;top:935.84px;font-size:12px;line-height:12px;color:#101010;font-weight:400;"><b style="width:8px">F</b><b style="width:8px">e</b><b style="width:8px">b</b></div>
<div class="c" style="left:694.00px;top:935.84px;font-size:12px;line-height:12px;color:#101010;font-weight:400;"><b style="width:8px"><i style="display:inline-block;font-style:normal;transform:scaleX(0.8)">M</i></b><b style="width:8px">a</b><b style="width:8px">r</b></div>
<div class="c" style="left:980.00px;top:935.84px;font-size:12px;line-height:12px;color:#101010;font-weight:400;"><b style="width:8px"><i style="display:inline-block;font-style:normal;transform:scaleX(0.78)">A</i></b><b style="width:8px">p</b><b style="width:8px">r</b></div>
<div class="c" style="left:12.00px;top:382.62px;font-size:12.5px;line-height:12.5px;color:#101010;font-weight:400;"><b style="width:8px">0</b><b style="width:8px">=</b><b style="width:8px">5</b><b style="width:8px">8</b><b style="width:8px">9</b><b style="width:8px">-</b></div>
<div class="c" style="left:12.00px;top:395.62px;font-size:12.5px;line-height:12.5px;color:#101010;font-weight:400;"><b style="width:8px"><i style="display:inline-block;font-style:normal;transform:scaleX(0.78)">H</i></b><b style="width:8px">=</b><b style="width:8px">5</b><b style="width:8px">8</b><b style="width:8px">9</b><b style="width:8px">-</b></div>
<div class="c" style="left:12.00px;top:408.62px;font-size:12.5px;line-height:12.5px;color:#101010;font-weight:400;"><b style="width:8px">L</b><b style="width:8px">=</b><b style="width:8px">5</b><b style="width:8px">7</b><b style="width:8px">9</b><b style="width:8px">-</b><b style="width:8px">1</b><b style="width:8px">/</b><b style="width:8px">4</b></div>
<div class="c" style="left:12.00px;top:421.62px;font-size:12.5px;line-height:12.5px;color:#101010;font-weight:400;"><b style="width:8px">L</b><b style="width:8px">=</b><b style="width:8px">5</b><b style="width:8px">8</b><b style="width:8px">1</b><b style="width:8px">-</b><b style="width:8px">1</b><b style="width:8px">/</b><b style="width:8px">4</b></div>
<div class="c" style="left:12.00px;top:434.62px;font-size:12.5px;line-height:12.5px;color:#101010;font-weight:400;"><b style="width:8px"><i style="display:inline-block;font-style:normal;transform:scaleX(0.78)">Δ</i></b><b style="width:8px">=</b><b style="width:8px">&nbsp;</b><b style="width:8px">-</b><b style="width:8px">8</b><b style="width:8px">-</b><b style="width:8px">3</b><b style="width:8px">/</b><b style="width:8px">4</b></div>
<div class="c" style="left:11.40px;top:829.42px;font-size:12.5px;line-height:12.5px;color:#101010;font-weight:400;"><b style="width:8px">2</b><b style="width:8px">5</b><b style="width:8px">&nbsp;</b><b style="width:8px"><i style="display:inline-block;font-style:normal;transform:scaleX(0.8)">M</i></b><b style="width:8px">a</b><b style="width:8px">r</b><b style="width:8px">&nbsp;</b><b style="width:8px">2</b><b style="width:8px">6</b></div>
<div class="c" style="left:11.40px;top:842.37px;font-size:12.5px;line-height:12.5px;color:#101010;font-weight:400;"><b style="width:8px">0</b><b style="width:8px">=</b><b style="width:8px">&nbsp;</b><b style="width:8px">&nbsp;</b><b style="width:8px">&nbsp;</b><b style="width:8px">&nbsp;</b><b style="width:8px">&nbsp;</b><b style="width:8px">&nbsp;</b><b style="width:8px">&nbsp;</b><b style="width:8px">5</b><b style="width:8px">8</b><b style="width:8px">9</b><b style="width:8px">-</b></div>
<div class="c" style="left:11.40px;top:855.32px;font-size:12.5px;line-height:12.5px;color:#101010;font-weight:400;"><b style="width:8px"><i style="display:inline-block;font-style:normal;transform:scaleX(0.78)">H</i></b><b style="width:8px">=</b><b style="width:8px">&nbsp;</b><b style="width:8px">&nbsp;</b><b style="width:8px">&nbsp;</b><b style="width:8px">&nbsp;</b><b style="width:8px">&nbsp;</b><b style="width:8px">&nbsp;</b><b style="width:8px">&nbsp;</b><b style="width:8px">5</b><b style="width:8px">8</b><b style="width:8px">9</b><b style="width:8px">-</b></div>
<div class="c" style="left:11.40px;top:868.27px;font-size:12.5px;line-height:12.5px;color:#101010;font-weight:400;"><b style="width:8px">L</b><b style="width:8px">=</b><b style="width:8px">&nbsp;</b><b style="width:8px">&nbsp;</b><b style="width:8px">&nbsp;</b><b style="width:8px">&nbsp;</b><b style="width:8px">&nbsp;</b><b style="width:8px">&nbsp;</b><b style="width:8px">&nbsp;</b><b style="width:8px">5</b><b style="width:8px">7</b><b style="width:8px">9</b><b style="width:8px">-</b><b style="width:8px">1</b><b style="width:8px">/</b><b style="width:8px">4</b></div>
<div class="c" style="left:11.40px;top:881.22px;font-size:12.5px;line-height:12.5px;color:#101010;font-weight:400;"><b style="width:8px"><i style="display:inline-block;font-style:normal;transform:scaleX(0.78)">C</i></b><b style="width:8px">=</b><b style="width:8px">&nbsp;</b><b style="width:8px">&nbsp;</b><b style="width:8px">&nbsp;</b><b style="width:8px">&nbsp;</b><b style="width:8px">&nbsp;</b><b style="width:8px">&nbsp;</b><b style="width:8px">&nbsp;</b><b style="width:8px">5</b><b style="width:8px">8</b><b style="width:8px">1</b><b style="width:8px">-</b><b style="width:8px">1</b><b style="width:8px">/</b><b style="width:8px">4</b></div>
<div class="c" style="left:11.40px;top:894.17px;font-size:12.5px;line-height:12.5px;color:#101010;font-weight:400;"><b style="width:8px">F</b><b style="width:8px">o</b><b style="width:8px">u</b><b style="width:8px">r</b><b style="width:8px">=</b><b style="width:8px">&nbsp;</b><b style="width:8px">&nbsp;</b><b style="width:8px">&nbsp;</b><b style="width:8px">1</b><b style="width:8px">0</b><b style="width:8px">8</b><b style="width:8px">5</b><b style="width:8px">-</b><b style="width:8px">3</b><b style="width:8px">/</b><b style="width:8px">4</b></div>
<div class="c" style="left:11.40px;top:907.12px;font-size:12.5px;line-height:12.5px;color:#101010;font-weight:400;"><b style="width:8px">E</b><b style="width:8px">i</b><b style="width:8px">g</b><b style="width:8px">h</b><b style="width:8px">t</b><b style="width:8px">=</b><b style="width:8px">&nbsp;</b><b style="width:8px">&nbsp;</b><b style="width:8px">&nbsp;</b><b style="width:8px">4</b><b style="width:8px">6</b><b style="width:8px">0</b><b style="width:8px">-</b><b style="width:8px">1</b><b style="width:8px">/</b><b style="width:8px">4</b></div>
<div class="c" style="left:11.40px;top:920.07px;font-size:12.5px;line-height:12.5px;color:#101010;font-weight:400;"><b style="width:8px">T</b><b style="width:8px">e</b><b style="width:8px">n</b><b style="width:8px">=</b><b style="width:8px">&nbsp;</b><b style="width:8px">&nbsp;</b><b style="width:8px">&nbsp;</b><b style="width:8px">&nbsp;</b><b style="width:8px">&nbsp;</b><b style="width:8px">4</b><b style="width:8px">6</b><b style="width:8px">3</b><b style="width:8px">-</b></div>
<div class="c" style="left:11.40px;top:933.02px;font-size:12.5px;line-height:12.5px;color:#101010;font-weight:400;"><b style="width:8px"><i style="display:inline-block;font-style:normal;transform:scaleX(0.78)">A</i></b><b style="width:8px">v</b><b style="width:8px">e</b><b style="width:8px">r</b><b style="width:8px">a</b><b style="width:8px">g</b><b style="width:8px">e</b><b style="width:8px">=</b><b style="width:8px">&nbsp;</b><b style="width:8px">6</b><b style="width:8px">6</b><b style="width:8px">9</b><b style="width:8px">-</b><b style="width:8px">5</b><b style="width:8px">/</b><b style="width:8px">8</b></div>
<div class="c" style="left:1128.00px;top:563.84px;font-size:12px;line-height:12px;color:#2a7a3a;font-weight:400;"><b style="width:8px">F</b><b style="width:8px">o</b><b style="width:8px">u</b><b style="width:8px">r</b></div>
<div class="c" style="left:1104.00px;top:766.44px;font-size:12px;line-height:12px;color:#dd22dd;font-weight:400;"><b style="width:8px"><i style="display:inline-block;font-style:normal;transform:scaleX(0.78)">A</i></b><b style="width:8px">v</b><b style="width:8px">e</b><b style="width:8px">r</b><b style="width:8px">a</b><b style="width:8px">g</b><b style="width:8px">e</b></div>
<div class="c" style="left:1136.00px;top:859.44px;font-size:12px;line-height:12px;color:#f0a070;font-weight:400;"><b style="width:8px">T</b><b style="width:8px">e</b><b style="width:8px">n</b></div>
<div class="c" style="left:1120.00px;top:876.84px;font-size:12px;line-height:12px;color:#c83030;font-weight:400;"><b style="width:8px">E</b><b style="width:8px">i</b><b style="width:8px">g</b><b style="width:8px">h</b><b style="width:8px">t</b></div>
</body></html>
